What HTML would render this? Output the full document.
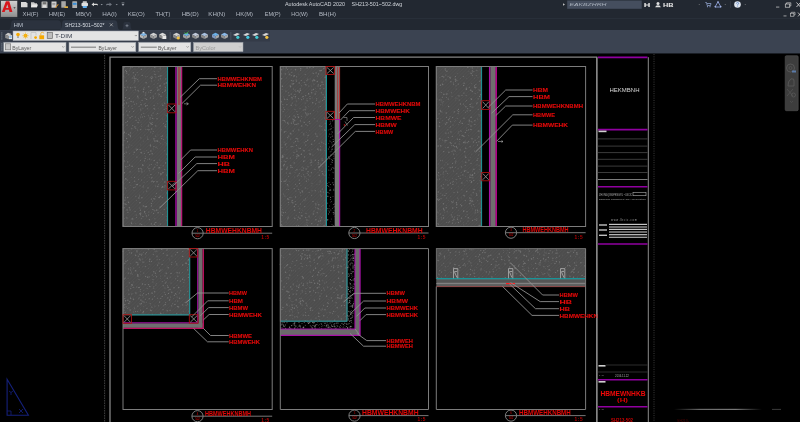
<!DOCTYPE html>
<html><head><meta charset="utf-8"><style>
*{box-sizing:border-box;margin:0;padding:0}
html,body{width:800px;height:422px;overflow:hidden;background:#000;font-family:"Liberation Sans",sans-serif}
#cv{position:absolute;left:0;top:0;filter:blur(0.45px)}
</style></head><body>
<svg id="cv" width="800" height="422" viewBox="0 0 800 422" style="font-family:'Liberation Sans',sans-serif">
<defs>
<pattern id="conc" width="3.5" height="3.5" patternUnits="userSpaceOnUse">
<rect width="3.5" height="3.5" fill="#4d4d4d"/>
<path d="M0 3.5L3.5 0M-1 1L1 -1M2.5 4.5L4.5 2.5" stroke="#575757" stroke-width="0.6"/>
</pattern>
</defs>
<line x1="104.6" y1="54" x2="104.6" y2="422" stroke="#4e4e4e" stroke-width="0.8"/>
<line x1="104.6" y1="54" x2="104.6" y2="422" stroke="#000" stroke-width="1" stroke-dasharray="1 1.5"/>
<polyline points="110,422 110,57.2 596.7,57.2 596.7,422" fill="none" stroke="#858585" stroke-width="1.3"/>
<rect x="123" y="66.5" width="44.5" height="160" fill="url(#conc)" stroke="#7a7a7a" stroke-width="0.8" />
<circle cx="137.4" cy="90.6" r="0.4" fill="#727272"/>
<circle cx="126.2" cy="152.2" r="0.6" fill="#727272"/>
<circle cx="148.9" cy="212.1" r="0.5" fill="#727272"/>
<circle cx="124.7" cy="135.9" r="0.4" fill="#727272"/>
<circle cx="133.7" cy="154.7" r="0.4" fill="#727272"/>
<circle cx="159.8" cy="86.3" r="0.5" fill="#727272"/>
<circle cx="151.1" cy="159.8" r="0.4" fill="#727272"/>
<circle cx="148.7" cy="130.0" r="0.5" fill="#727272"/>
<circle cx="125.1" cy="203.9" r="0.6" fill="#727272"/>
<circle cx="141.7" cy="153.0" r="0.6" fill="#727272"/>
<circle cx="147.9" cy="175.6" r="0.4" fill="#727272"/>
<circle cx="148.9" cy="168.7" r="0.6" fill="#727272"/>
<circle cx="127.3" cy="180.4" r="0.4" fill="#727272"/>
<circle cx="150.5" cy="145.9" r="0.7" fill="#727272"/>
<circle cx="157.6" cy="141.0" r="0.7" fill="#727272"/>
<circle cx="139.1" cy="106.2" r="0.5" fill="#727272"/>
<circle cx="154.1" cy="105.6" r="0.6" fill="#727272"/>
<circle cx="146.4" cy="206.5" r="0.7" fill="#727272"/>
<circle cx="135.8" cy="223.3" r="0.4" fill="#727272"/>
<circle cx="145.8" cy="92.9" r="0.6" fill="#727272"/>
<circle cx="129.8" cy="144.7" r="0.4" fill="#727272"/>
<circle cx="165.8" cy="78.9" r="0.6" fill="#727272"/>
<circle cx="138.1" cy="122.5" r="0.7" fill="#727272"/>
<circle cx="148.8" cy="139.5" r="0.4" fill="#727272"/>
<circle cx="165.0" cy="142.4" r="0.4" fill="#727272"/>
<circle cx="125.7" cy="178.7" r="0.7" fill="#727272"/>
<circle cx="135.7" cy="128.2" r="0.6" fill="#727272"/>
<circle cx="124.0" cy="140.4" r="0.5" fill="#727272"/>
<circle cx="150.2" cy="145.5" r="0.5" fill="#727272"/>
<circle cx="157.2" cy="87.2" r="0.5" fill="#727272"/>
<circle cx="140.7" cy="213.2" r="0.7" fill="#727272"/>
<circle cx="126.6" cy="138.4" r="0.6" fill="#727272"/>
<circle cx="162.3" cy="197.6" r="0.6" fill="#727272"/>
<circle cx="154.4" cy="224.3" r="0.7" fill="#727272"/>
<circle cx="165.6" cy="90.6" r="0.5" fill="#727272"/>
<circle cx="129.7" cy="171.9" r="0.4" fill="#727272"/>
<circle cx="144.6" cy="160.8" r="0.6" fill="#727272"/>
<circle cx="135.5" cy="89.8" r="0.6" fill="#727272"/>
<circle cx="150.1" cy="117.5" r="0.5" fill="#727272"/>
<circle cx="153.7" cy="149.0" r="0.4" fill="#727272"/>
<circle cx="143.3" cy="205.9" r="0.7" fill="#727272"/>
<circle cx="140.7" cy="129.6" r="0.7" fill="#727272"/>
<circle cx="151.2" cy="76.5" r="0.4" fill="#727272"/>
<circle cx="166.8" cy="137.0" r="0.4" fill="#727272"/>
<circle cx="138.1" cy="74.9" r="0.4" fill="#727272"/>
<circle cx="148.2" cy="152.4" r="0.6" fill="#727272"/>
<circle cx="150.3" cy="77.8" r="0.5" fill="#727272"/>
<circle cx="150.3" cy="90.3" r="0.6" fill="#727272"/>
<circle cx="165.5" cy="162.9" r="0.7" fill="#727272"/>
<circle cx="128.5" cy="202.3" r="0.7" fill="#727272"/>
<circle cx="144.4" cy="116.4" r="0.5" fill="#727272"/>
<circle cx="127.5" cy="121.3" r="0.6" fill="#727272"/>
<circle cx="144.3" cy="177.2" r="0.4" fill="#727272"/>
<circle cx="132.1" cy="218.8" r="0.6" fill="#727272"/>
<circle cx="129.5" cy="153.4" r="0.4" fill="#727272"/>
<circle cx="156.7" cy="114.2" r="0.4" fill="#727272"/>
<circle cx="154.0" cy="108.3" r="0.6" fill="#727272"/>
<circle cx="163.4" cy="123.4" r="0.5" fill="#727272"/>
<circle cx="146.7" cy="191.1" r="0.6" fill="#727272"/>
<circle cx="151.3" cy="164.6" r="0.5" fill="#727272"/>
<circle cx="158.9" cy="197.4" r="0.5" fill="#727272"/>
<circle cx="131.9" cy="145.3" r="0.4" fill="#727272"/>
<circle cx="167.0" cy="192.9" r="0.7" fill="#727272"/>
<circle cx="134.5" cy="177.3" r="0.6" fill="#727272"/>
<circle cx="142.9" cy="216.4" r="0.6" fill="#727272"/>
<circle cx="165.5" cy="124.8" r="0.5" fill="#727272"/>
<circle cx="127.5" cy="141.7" r="0.6" fill="#727272"/>
<circle cx="132.1" cy="166.4" r="0.4" fill="#727272"/>
<circle cx="144.3" cy="171.0" r="0.4" fill="#727272"/>
<circle cx="160.1" cy="85.7" r="0.7" fill="#727272"/>
<circle cx="157.8" cy="186.5" r="0.7" fill="#727272"/>
<circle cx="162.6" cy="135.9" r="0.6" fill="#727272"/>
<circle cx="126.9" cy="217.9" r="0.7" fill="#727272"/>
<circle cx="143.6" cy="185.4" r="0.4" fill="#727272"/>
<circle cx="155.3" cy="93.7" r="0.5" fill="#727272"/>
<circle cx="124.2" cy="161.0" r="0.7" fill="#727272"/>
<circle cx="158.9" cy="89.9" r="0.7" fill="#727272"/>
<circle cx="152.2" cy="122.6" r="0.5" fill="#727272"/>
<circle cx="124.0" cy="194.4" r="0.4" fill="#727272"/>
<circle cx="146.4" cy="215.9" r="0.7" fill="#727272"/>
<circle cx="166.9" cy="97.7" r="0.5" fill="#727272"/>
<circle cx="124.2" cy="100.5" r="0.5" fill="#727272"/>
<circle cx="157.0" cy="118.7" r="0.7" fill="#727272"/>
<circle cx="160.1" cy="76.2" r="0.6" fill="#727272"/>
<circle cx="162.9" cy="172.5" r="0.7" fill="#727272"/>
<circle cx="159.8" cy="207.0" r="0.5" fill="#727272"/>
<circle cx="146.7" cy="150.3" r="0.4" fill="#727272"/>
<circle cx="161.8" cy="190.7" r="0.4" fill="#727272"/>
<circle cx="157.5" cy="90.5" r="0.5" fill="#727272"/>
<circle cx="144.1" cy="182.5" r="0.4" fill="#727272"/>
<circle cx="137.5" cy="149.4" r="0.7" fill="#727272"/>
<circle cx="157.9" cy="83.5" r="0.4" fill="#727272"/>
<circle cx="134.1" cy="110.8" r="0.4" fill="#727272"/>
<circle cx="145.6" cy="156.4" r="0.4" fill="#727272"/>
<circle cx="142.7" cy="164.5" r="0.5" fill="#727272"/>
<circle cx="153.8" cy="138.9" r="0.7" fill="#727272"/>
<circle cx="145.6" cy="106.1" r="0.6" fill="#727272"/>
<circle cx="164.1" cy="209.3" r="0.5" fill="#727272"/>
<circle cx="160.4" cy="88.4" r="0.4" fill="#727272"/>
<circle cx="140.5" cy="117.1" r="0.5" fill="#727272"/>
<circle cx="142.1" cy="100.5" r="0.6" fill="#727272"/>
<circle cx="157.9" cy="210.0" r="0.5" fill="#727272"/>
<circle cx="164.8" cy="169.5" r="0.6" fill="#727272"/>
<circle cx="129.4" cy="207.8" r="0.7" fill="#727272"/>
<circle cx="132.8" cy="218.9" r="0.7" fill="#727272"/>
<circle cx="162.4" cy="92.5" r="0.5" fill="#727272"/>
<circle cx="130.2" cy="135.5" r="0.7" fill="#727272"/>
<circle cx="138.1" cy="97.8" r="0.6" fill="#727272"/>
<circle cx="127.1" cy="125.1" r="0.6" fill="#727272"/>
<circle cx="147.7" cy="137.0" r="0.4" fill="#727272"/>
<circle cx="140.1" cy="149.3" r="0.6" fill="#727272"/>
<circle cx="145.8" cy="76.8" r="0.5" fill="#727272"/>
<circle cx="166.2" cy="83.3" r="0.6" fill="#727272"/>
<circle cx="135.1" cy="211.4" r="0.5" fill="#727272"/>
<circle cx="135.0" cy="87.2" r="0.7" fill="#727272"/>
<circle cx="160.8" cy="174.7" r="0.6" fill="#727272"/>
<circle cx="141.1" cy="152.4" r="0.7" fill="#727272"/>
<circle cx="154.2" cy="80.8" r="0.4" fill="#727272"/>
<circle cx="158.6" cy="95.8" r="0.4" fill="#727272"/>
<circle cx="135.0" cy="69.2" r="0.4" fill="#727272"/>
<circle cx="158.7" cy="79.9" r="0.5" fill="#727272"/>
<circle cx="126.0" cy="204.5" r="0.7" fill="#727272"/>
<circle cx="123.5" cy="225.6" r="0.7" fill="#727272"/>
<circle cx="164.2" cy="109.4" r="0.5" fill="#727272"/>
<circle cx="124.9" cy="180.0" r="0.4" fill="#727272"/>
<circle cx="166.1" cy="108.4" r="0.5" fill="#727272"/>
<circle cx="132.0" cy="116.4" r="0.6" fill="#727272"/>
<circle cx="146.6" cy="99.4" r="0.7" fill="#727272"/>
<circle cx="145.3" cy="95.0" r="0.6" fill="#727272"/>
<circle cx="158.8" cy="225.6" r="0.4" fill="#727272"/>
<circle cx="123.7" cy="183.8" r="0.5" fill="#727272"/>
<circle cx="145.9" cy="105.8" r="0.7" fill="#727272"/>
<circle cx="127.7" cy="197.5" r="0.7" fill="#727272"/>
<circle cx="152.2" cy="153.8" r="0.7" fill="#727272"/>
<circle cx="166.2" cy="115.7" r="0.5" fill="#727272"/>
<circle cx="166.7" cy="121.3" r="0.5" fill="#727272"/>
<circle cx="141.0" cy="122.1" r="0.4" fill="#727272"/>
<circle cx="160.2" cy="68.8" r="0.6" fill="#727272"/>
<circle cx="142.2" cy="75.4" r="0.7" fill="#727272"/>
<circle cx="161.7" cy="173.8" r="0.6" fill="#727272"/>
<circle cx="149.6" cy="177.3" r="0.4" fill="#727272"/>
<circle cx="143.4" cy="91.7" r="0.7" fill="#727272"/>
<circle cx="123.2" cy="124.8" r="0.6" fill="#727272"/>
<circle cx="166.3" cy="154.0" r="0.5" fill="#727272"/>
<circle cx="124.5" cy="207.7" r="0.5" fill="#727272"/>
<circle cx="138.9" cy="66.7" r="0.7" fill="#727272"/>
<circle cx="126.7" cy="111.1" r="0.5" fill="#727272"/>
<circle cx="134.0" cy="190.7" r="0.4" fill="#727272"/>
<circle cx="134.8" cy="80.9" r="0.7" fill="#727272"/>
<circle cx="149.1" cy="129.5" r="0.6" fill="#727272"/>
<circle cx="136.5" cy="103.7" r="0.5" fill="#727272"/>
<circle cx="152.3" cy="181.1" r="0.7" fill="#727272"/>
<circle cx="157.0" cy="181.8" r="0.7" fill="#727272"/>
<circle cx="129.7" cy="182.4" r="0.5" fill="#727272"/>
<circle cx="124.9" cy="200.1" r="0.7" fill="#727272"/>
<circle cx="155.7" cy="196.5" r="0.5" fill="#727272"/>
<circle cx="163.5" cy="187.0" r="0.4" fill="#727272"/>
<circle cx="159.8" cy="159.9" r="0.5" fill="#727272"/>
<circle cx="126.8" cy="73.2" r="0.6" fill="#727272"/>
<circle cx="165.7" cy="126.8" r="0.7" fill="#727272"/>
<circle cx="147.9" cy="166.9" r="0.5" fill="#727272"/>
<circle cx="144.8" cy="67.0" r="0.4" fill="#727272"/>
<circle cx="156.3" cy="147.0" r="0.4" fill="#727272"/>
<circle cx="152.3" cy="77.1" r="0.7" fill="#727272"/>
<circle cx="134.2" cy="78.4" r="0.6" fill="#727272"/>
<circle cx="133.4" cy="187.5" r="0.5" fill="#727272"/>
<circle cx="155.9" cy="222.6" r="0.7" fill="#727272"/>
<circle cx="160.6" cy="78.8" r="0.6" fill="#727272"/>
<circle cx="157.1" cy="165.2" r="0.5" fill="#727272"/>
<circle cx="126.4" cy="90.1" r="0.6" fill="#727272"/>
<circle cx="152.0" cy="177.4" r="0.5" fill="#727272"/>
<circle cx="123.6" cy="76.2" r="0.6" fill="#727272"/>
<circle cx="166.3" cy="82.4" r="0.5" fill="#727272"/>
<circle cx="153.1" cy="113.0" r="0.6" fill="#727272"/>
<circle cx="143.7" cy="141.1" r="0.4" fill="#727272"/>
<circle cx="167.2" cy="154.4" r="0.6" fill="#727272"/>
<circle cx="166.5" cy="216.3" r="0.4" fill="#727272"/>
<circle cx="135.9" cy="78.7" r="0.7" fill="#727272"/>
<circle cx="167.2" cy="128.4" r="0.5" fill="#727272"/>
<circle cx="126.3" cy="80.9" r="0.6" fill="#727272"/>
<circle cx="165.4" cy="87.7" r="0.6" fill="#727272"/>
<circle cx="162.5" cy="179.0" r="0.5" fill="#727272"/>
<circle cx="145.2" cy="206.7" r="0.7" fill="#727272"/>
<circle cx="124.1" cy="67.1" r="0.7" fill="#727272"/>
<circle cx="153.3" cy="131.4" r="0.5" fill="#727272"/>
<circle cx="141.5" cy="126.7" r="0.4" fill="#727272"/>
<circle cx="160.4" cy="66.8" r="0.6" fill="#727272"/>
<circle cx="160.3" cy="85.7" r="0.5" fill="#727272"/>
<circle cx="154.7" cy="210.8" r="0.6" fill="#727272"/>
<circle cx="134.3" cy="76.9" r="0.7" fill="#727272"/>
<circle cx="167.4" cy="160.8" r="0.6" fill="#727272"/>
<circle cx="164.2" cy="187.4" r="0.4" fill="#727272"/>
<circle cx="135.5" cy="74.8" r="0.6" fill="#727272"/>
<circle cx="151.3" cy="90.3" r="0.6" fill="#727272"/>
<circle cx="142.4" cy="117.0" r="0.6" fill="#727272"/>
<circle cx="157.9" cy="134.9" r="0.4" fill="#727272"/>
<circle cx="159.1" cy="167.4" r="0.5" fill="#727272"/>
<circle cx="155.0" cy="74.4" r="0.7" fill="#727272"/>
<circle cx="143.1" cy="186.9" r="0.6" fill="#727272"/>
<circle cx="144.6" cy="212.4" r="0.5" fill="#727272"/>
<circle cx="130.6" cy="132.9" r="0.6" fill="#727272"/>
<circle cx="136.3" cy="184.7" r="0.6" fill="#727272"/>
<circle cx="141.1" cy="104.7" r="0.7" fill="#727272"/>
<circle cx="147.8" cy="129.6" r="0.5" fill="#727272"/>
<circle cx="151.6" cy="78.5" r="0.7" fill="#727272"/>
<circle cx="147.5" cy="139.0" r="0.6" fill="#727272"/>
<circle cx="167.3" cy="138.5" r="0.5" fill="#727272"/>
<circle cx="147.4" cy="105.6" r="0.5" fill="#727272"/>
<circle cx="138.2" cy="81.1" r="0.5" fill="#727272"/>
<circle cx="139.4" cy="196.0" r="0.5" fill="#727272"/>
<circle cx="162.5" cy="186.4" r="0.7" fill="#727272"/>
<circle cx="140.0" cy="185.8" r="0.5" fill="#727272"/>
<circle cx="139.8" cy="120.6" r="0.4" fill="#727272"/>
<circle cx="145.2" cy="158.4" r="0.6" fill="#727272"/>
<circle cx="128.6" cy="147.0" r="0.5" fill="#727272"/>
<circle cx="127.1" cy="210.0" r="0.7" fill="#727272"/>
<circle cx="140.8" cy="137.8" r="0.6" fill="#727272"/>
<circle cx="160.8" cy="206.2" r="0.4" fill="#727272"/>
<circle cx="128.7" cy="134.5" r="0.7" fill="#727272"/>
<circle cx="166.1" cy="144.9" r="0.4" fill="#727272"/>
<circle cx="140.4" cy="214.8" r="0.7" fill="#727272"/>
<circle cx="166.3" cy="106.3" r="0.4" fill="#727272"/>
<circle cx="133.0" cy="90.8" r="0.4" fill="#727272"/>
<circle cx="164.9" cy="182.0" r="0.7" fill="#727272"/>
<circle cx="126.8" cy="190.8" r="0.4" fill="#727272"/>
<circle cx="157.8" cy="103.7" r="0.4" fill="#727272"/>
<circle cx="151.7" cy="115.1" r="0.5" fill="#727272"/>
<circle cx="150.9" cy="151.0" r="0.7" fill="#727272"/>
<circle cx="154.1" cy="84.4" r="0.4" fill="#727272"/>
<circle cx="136.4" cy="217.5" r="0.5" fill="#727272"/>
<circle cx="140.3" cy="102.3" r="0.4" fill="#727272"/>
<circle cx="123.5" cy="114.7" r="0.7" fill="#727272"/>
<circle cx="135.4" cy="117.1" r="0.5" fill="#727272"/>
<circle cx="144.2" cy="104.1" r="0.5" fill="#727272"/>
<circle cx="124.3" cy="132.4" r="0.6" fill="#727272"/>
<circle cx="125.5" cy="97.6" r="0.7" fill="#727272"/>
<circle cx="126.6" cy="103.0" r="0.7" fill="#727272"/>
<circle cx="164.2" cy="102.8" r="0.4" fill="#727272"/>
<circle cx="154.0" cy="181.4" r="0.6" fill="#727272"/>
<circle cx="153.4" cy="98.2" r="0.6" fill="#727272"/>
<circle cx="155.9" cy="147.3" r="0.5" fill="#727272"/>
<circle cx="145.1" cy="98.6" r="0.5" fill="#727272"/>
<circle cx="133.3" cy="101.9" r="0.6" fill="#727272"/>
<circle cx="127.9" cy="166.3" r="0.5" fill="#727272"/>
<circle cx="162.9" cy="144.1" r="0.4" fill="#727272"/>
<circle cx="165.2" cy="89.9" r="0.7" fill="#727272"/>
<circle cx="125.4" cy="70.3" r="0.5" fill="#727272"/>
<circle cx="141.5" cy="180.1" r="0.5" fill="#727272"/>
<circle cx="140.5" cy="210.2" r="0.6" fill="#727272"/>
<circle cx="155.6" cy="226.1" r="0.5" fill="#727272"/>
<circle cx="137.7" cy="96.2" r="0.7" fill="#727272"/>
<circle cx="124.4" cy="172.8" r="0.7" fill="#727272"/>
<circle cx="160.3" cy="224.1" r="0.7" fill="#727272"/>
<circle cx="130.5" cy="67.0" r="0.6" fill="#727272"/>
<circle cx="126.6" cy="133.7" r="0.4" fill="#727272"/>
<circle cx="148.0" cy="187.9" r="0.7" fill="#727272"/>
<circle cx="138.9" cy="198.0" r="0.7" fill="#727272"/>
<circle cx="126.9" cy="179.3" r="0.5" fill="#727272"/>
<circle cx="139.6" cy="213.6" r="0.5" fill="#727272"/>
<circle cx="137.4" cy="184.5" r="0.7" fill="#727272"/>
<circle cx="124.3" cy="132.2" r="0.7" fill="#727272"/>
<circle cx="124.8" cy="72.1" r="0.4" fill="#727272"/>
<circle cx="158.7" cy="76.4" r="0.5" fill="#727272"/>
<circle cx="156.3" cy="210.3" r="0.6" fill="#727272"/>
<circle cx="139.2" cy="120.1" r="0.4" fill="#727272"/>
<circle cx="134.7" cy="181.2" r="0.6" fill="#727272"/>
<circle cx="164.1" cy="114.1" r="0.4" fill="#727272"/>
<circle cx="124.1" cy="103.9" r="0.7" fill="#727272"/>
<circle cx="154.8" cy="141.0" r="0.7" fill="#727272"/>
<circle cx="158.1" cy="212.7" r="0.7" fill="#727272"/>
<circle cx="128.9" cy="145.9" r="0.4" fill="#727272"/>
<circle cx="158.7" cy="184.7" r="0.5" fill="#727272"/>
<circle cx="150.0" cy="118.9" r="0.6" fill="#727272"/>
<circle cx="143.5" cy="191.9" r="0.4" fill="#727272"/>
<circle cx="145.8" cy="129.2" r="0.5" fill="#727272"/>
<circle cx="134.0" cy="76.9" r="0.4" fill="#727272"/>
<circle cx="144.4" cy="153.6" r="0.5" fill="#727272"/>
<circle cx="166.6" cy="207.9" r="0.4" fill="#727272"/>
<circle cx="134.8" cy="80.0" r="0.4" fill="#727272"/>
<circle cx="141.7" cy="224.6" r="0.7" fill="#727272"/>
<circle cx="130.7" cy="87.8" r="0.7" fill="#727272"/>
<circle cx="150.6" cy="174.4" r="0.4" fill="#727272"/>
<circle cx="157.7" cy="113.5" r="0.6" fill="#727272"/>
<circle cx="148.2" cy="126.2" r="0.6" fill="#727272"/>
<circle cx="131.9" cy="106.1" r="0.5" fill="#727272"/>
<circle cx="133.5" cy="111.5" r="0.5" fill="#727272"/>
<circle cx="137.5" cy="129.9" r="0.5" fill="#727272"/>
<circle cx="145.6" cy="103.5" r="0.4" fill="#727272"/>
<circle cx="152.1" cy="225.1" r="0.4" fill="#727272"/>
<circle cx="123.2" cy="207.8" r="0.5" fill="#727272"/>
<circle cx="160.4" cy="212.8" r="0.4" fill="#727272"/>
<circle cx="162.0" cy="103.8" r="0.4" fill="#727272"/>
<circle cx="131.4" cy="222.2" r="0.5" fill="#727272"/>
<circle cx="164.4" cy="126.1" r="0.5" fill="#727272"/>
<circle cx="143.0" cy="108.1" r="0.4" fill="#727272"/>
<circle cx="127.7" cy="161.9" r="0.6" fill="#727272"/>
<circle cx="132.7" cy="125.5" r="0.5" fill="#727272"/>
<circle cx="125.0" cy="226.5" r="0.4" fill="#727272"/>
<circle cx="149.7" cy="170.8" r="0.5" fill="#727272"/>
<circle cx="159.3" cy="197.5" r="0.7" fill="#727272"/>
<circle cx="153.2" cy="96.1" r="0.6" fill="#727272"/>
<circle cx="126.5" cy="71.5" r="0.7" fill="#727272"/>
<circle cx="147.4" cy="76.6" r="0.4" fill="#727272"/>
<circle cx="158.4" cy="172.7" r="0.5" fill="#727272"/>
<circle cx="151.4" cy="81.1" r="0.5" fill="#727272"/>
<circle cx="140.7" cy="109.9" r="0.6" fill="#727272"/>
<circle cx="152.7" cy="133.4" r="0.4" fill="#727272"/>
<circle cx="136.9" cy="157.1" r="0.6" fill="#727272"/>
<circle cx="141.4" cy="69.4" r="0.6" fill="#727272"/>
<circle cx="151.7" cy="129.0" r="0.7" fill="#727272"/>
<circle cx="132.1" cy="67.4" r="0.5" fill="#727272"/>
<circle cx="141.9" cy="197.8" r="0.7" fill="#727272"/>
<circle cx="148.7" cy="124.9" r="0.5" fill="#727272"/>
<circle cx="128.8" cy="74.8" r="0.5" fill="#727272"/>
<circle cx="151.5" cy="212.1" r="0.4" fill="#727272"/>
<circle cx="148.5" cy="214.9" r="0.5" fill="#727272"/>
<circle cx="129.5" cy="111.8" r="0.5" fill="#727272"/>
<circle cx="164.2" cy="83.9" r="0.7" fill="#727272"/>
<circle cx="156.5" cy="193.2" r="0.5" fill="#727272"/>
<circle cx="136.4" cy="200.5" r="0.4" fill="#727272"/>
<circle cx="166.4" cy="143.7" r="0.4" fill="#727272"/>
<circle cx="150.0" cy="168.3" r="0.4" fill="#727272"/>
<circle cx="163.2" cy="165.8" r="0.5" fill="#727272"/>
<circle cx="151.5" cy="203.6" r="0.7" fill="#727272"/>
<circle cx="150.4" cy="97.9" r="0.7" fill="#727272"/>
<circle cx="131.1" cy="101.4" r="0.7" fill="#727272"/>
<circle cx="164.8" cy="91.5" r="0.6" fill="#727272"/>
<circle cx="128.5" cy="106.0" r="0.5" fill="#727272"/>
<circle cx="124.8" cy="156.5" r="0.4" fill="#727272"/>
<circle cx="152.7" cy="118.4" r="0.7" fill="#727272"/>
<circle cx="149.7" cy="154.5" r="0.6" fill="#727272"/>
<circle cx="151.9" cy="115.8" r="0.5" fill="#727272"/>
<circle cx="141.9" cy="171.9" r="0.7" fill="#727272"/>
<circle cx="145.4" cy="95.1" r="0.4" fill="#727272"/>
<circle cx="150.5" cy="144.8" r="0.5" fill="#727272"/>
<circle cx="142.9" cy="165.5" r="0.7" fill="#727272"/>
<circle cx="160.2" cy="196.2" r="0.7" fill="#727272"/>
<circle cx="127.8" cy="87.1" r="0.7" fill="#727272"/>
<circle cx="139.3" cy="194.9" r="0.4" fill="#727272"/>
<circle cx="124.8" cy="87.3" r="0.6" fill="#727272"/>
<circle cx="157.6" cy="148.3" r="0.4" fill="#727272"/>
<circle cx="156.5" cy="209.7" r="0.5" fill="#727272"/>
<circle cx="124.2" cy="77.1" r="0.4" fill="#727272"/>
<circle cx="131.6" cy="223.6" r="0.7" fill="#727272"/>
<circle cx="135.8" cy="196.3" r="0.5" fill="#727272"/>
<circle cx="153.5" cy="181.9" r="0.5" fill="#727272"/>
<circle cx="125.9" cy="122.6" r="0.6" fill="#727272"/>
<circle cx="130.1" cy="209.9" r="0.6" fill="#727272"/>
<circle cx="163.3" cy="139.5" r="0.6" fill="#727272"/>
<circle cx="145.3" cy="213.7" r="0.5" fill="#727272"/>
<circle cx="149.3" cy="165.0" r="0.5" fill="#727272"/>
<circle cx="137.2" cy="72.4" r="0.5" fill="#727272"/>
<circle cx="141.0" cy="168.4" r="0.6" fill="#727272"/>
<circle cx="153.2" cy="209.8" r="0.5" fill="#727272"/>
<circle cx="158.2" cy="108.8" r="0.4" fill="#727272"/>
<circle cx="151.3" cy="124.1" r="0.7" fill="#727272"/>
<circle cx="147.7" cy="159.3" r="0.4" fill="#727272"/>
<circle cx="134.2" cy="152.2" r="0.7" fill="#727272"/>
<circle cx="155.8" cy="125.9" r="0.7" fill="#727272"/>
<circle cx="167.1" cy="158.9" r="0.6" fill="#727272"/>
<circle cx="137.7" cy="79.5" r="0.5" fill="#727272"/>
<circle cx="130.9" cy="185.5" r="0.4" fill="#727272"/>
<circle cx="136.2" cy="149.1" r="0.6" fill="#727272"/>
<circle cx="151.4" cy="223.9" r="0.6" fill="#727272"/>
<circle cx="155.6" cy="186.0" r="0.5" fill="#727272"/>
<circle cx="129.6" cy="165.1" r="0.7" fill="#727272"/>
<circle cx="141.6" cy="124.8" r="0.4" fill="#727272"/>
<circle cx="128.9" cy="102.9" r="0.4" fill="#727272"/>
<circle cx="124.0" cy="66.9" r="0.6" fill="#727272"/>
<circle cx="136.5" cy="150.2" r="0.5" fill="#727272"/>
<circle cx="141.4" cy="114.7" r="0.5" fill="#727272"/>
<circle cx="132.1" cy="166.3" r="0.7" fill="#727272"/>
<circle cx="130.1" cy="68.8" r="0.5" fill="#727272"/>
<circle cx="154.5" cy="138.6" r="0.4" fill="#727272"/>
<circle cx="151.4" cy="205.9" r="0.6" fill="#727272"/>
<circle cx="140.9" cy="108.8" r="0.4" fill="#727272"/>
<circle cx="125.5" cy="197.8" r="0.6" fill="#727272"/>
<circle cx="149.5" cy="159.1" r="0.7" fill="#727272"/>
<circle cx="134.1" cy="211.1" r="0.4" fill="#727272"/>
<circle cx="125.7" cy="70.5" r="0.5" fill="#727272"/>
<circle cx="133.6" cy="75.8" r="0.4" fill="#727272"/>
<circle cx="123.5" cy="154.6" r="0.5" fill="#727272"/>
<circle cx="129.3" cy="98.4" r="0.7" fill="#727272"/>
<circle cx="159.2" cy="94.4" r="0.6" fill="#727272"/>
<circle cx="125.8" cy="166.7" r="0.7" fill="#727272"/>
<circle cx="154.8" cy="67.5" r="0.7" fill="#727272"/>
<circle cx="156.2" cy="140.9" r="0.7" fill="#727272"/>
<circle cx="130.8" cy="226.0" r="0.6" fill="#727272"/>
<circle cx="133.3" cy="72.7" r="0.6" fill="#727272"/>
<circle cx="162.7" cy="214.5" r="0.6" fill="#727272"/>
<circle cx="154.7" cy="109.1" r="0.7" fill="#727272"/>
<circle cx="153.5" cy="213.3" r="0.6" fill="#727272"/>
<circle cx="136.2" cy="215.1" r="0.5" fill="#727272"/>
<circle cx="126.8" cy="147.7" r="0.5" fill="#727272"/>
<circle cx="134.6" cy="104.3" r="0.5" fill="#727272"/>
<circle cx="165.0" cy="185.9" r="0.6" fill="#727272"/>
<circle cx="131.5" cy="128.7" r="0.5" fill="#727272"/>
<circle cx="139.9" cy="202.8" r="0.7" fill="#727272"/>
<circle cx="144.0" cy="151.4" r="0.4" fill="#727272"/>
<circle cx="161.2" cy="136.5" r="0.5" fill="#727272"/>
<circle cx="148.4" cy="115.7" r="0.5" fill="#727272"/>
<circle cx="140.4" cy="160.2" r="0.5" fill="#727272"/>
<circle cx="129.4" cy="70.8" r="0.4" fill="#727272"/>
<circle cx="150.7" cy="92.4" r="0.5" fill="#727272"/>
<circle cx="154.2" cy="71.4" r="0.5" fill="#727272"/>
<circle cx="153.8" cy="167.9" r="0.4" fill="#727272"/>
<circle cx="155.8" cy="77.0" r="0.6" fill="#727272"/>
<circle cx="131.9" cy="219.2" r="0.4" fill="#727272"/>
<circle cx="162.1" cy="187.4" r="0.7" fill="#727272"/>
<circle cx="127.8" cy="99.4" r="0.4" fill="#727272"/>
<circle cx="124.5" cy="218.4" r="0.4" fill="#727272"/>
<circle cx="159.7" cy="167.5" r="0.6" fill="#727272"/>
<circle cx="144.2" cy="87.7" r="0.5" fill="#727272"/>
<circle cx="136.1" cy="120.3" r="0.6" fill="#727272"/>
<circle cx="123.9" cy="107.6" r="0.6" fill="#727272"/>
<circle cx="125.2" cy="188.1" r="0.6" fill="#727272"/>
<circle cx="157.2" cy="162.8" r="0.7" fill="#727272"/>
<circle cx="160.9" cy="165.4" r="0.4" fill="#727272"/>
<circle cx="158.1" cy="71.5" r="0.4" fill="#727272"/>
<circle cx="138.4" cy="179.2" r="0.5" fill="#727272"/>
<circle cx="154.8" cy="199.0" r="0.6" fill="#727272"/>
<circle cx="130.6" cy="66.7" r="0.5" fill="#727272"/>
<circle cx="135.8" cy="186.6" r="0.4" fill="#727272"/>
<circle cx="123.2" cy="145.0" r="0.7" fill="#727272"/>
<circle cx="153.9" cy="198.6" r="0.7" fill="#727272"/>
<circle cx="149.4" cy="219.7" r="0.6" fill="#727272"/>
<circle cx="148.7" cy="91.9" r="0.5" fill="#727272"/>
<circle cx="164.8" cy="103.5" r="0.5" fill="#727272"/>
<circle cx="127.9" cy="168.3" r="0.4" fill="#727272"/>
<circle cx="144.8" cy="225.1" r="0.4" fill="#727272"/>
<circle cx="150.9" cy="123.4" r="0.7" fill="#727272"/>
<circle cx="164.3" cy="209.2" r="0.4" fill="#727272"/>
<circle cx="141.8" cy="169.8" r="0.6" fill="#727272"/>
<circle cx="132.2" cy="108.6" r="0.5" fill="#727272"/>
<circle cx="139.9" cy="207.9" r="0.5" fill="#727272"/>
<circle cx="165.0" cy="86.8" r="0.4" fill="#727272"/>
<circle cx="138.5" cy="118.8" r="0.5" fill="#727272"/>
<circle cx="161.6" cy="138.5" r="0.6" fill="#727272"/>
<circle cx="130.5" cy="136.7" r="0.6" fill="#727272"/>
<circle cx="148.8" cy="86.7" r="0.7" fill="#727272"/>
<circle cx="151.6" cy="178.0" r="0.5" fill="#727272"/>
<circle cx="134.9" cy="187.3" r="0.5" fill="#727272"/>
<circle cx="155.2" cy="222.5" r="0.6" fill="#727272"/>
<circle cx="149.8" cy="122.3" r="0.5" fill="#727272"/>
<circle cx="137.6" cy="96.8" r="0.4" fill="#727272"/>
<circle cx="130.3" cy="171.8" r="0.5" fill="#727272"/>
<circle cx="140.1" cy="223.9" r="0.6" fill="#727272"/>
<circle cx="155.6" cy="136.1" r="0.5" fill="#727272"/>
<circle cx="127.9" cy="212.3" r="0.6" fill="#727272"/>
<circle cx="132.2" cy="128.6" r="0.4" fill="#727272"/>
<circle cx="123.6" cy="203.2" r="0.7" fill="#727272"/>
<circle cx="153.9" cy="146.6" r="0.6" fill="#727272"/>
<circle cx="143.6" cy="89.2" r="0.7" fill="#727272"/>
<circle cx="123.2" cy="105.3" r="0.7" fill="#727272"/>
<circle cx="154.2" cy="160.5" r="0.7" fill="#727272"/>
<circle cx="160.6" cy="173.4" r="0.5" fill="#727272"/>
<circle cx="153.2" cy="169.1" r="0.7" fill="#727272"/>
<circle cx="142.2" cy="108.1" r="0.4" fill="#727272"/>
<circle cx="162.8" cy="105.3" r="0.7" fill="#727272"/>
<circle cx="154.7" cy="167.2" r="0.6" fill="#727272"/>
<circle cx="160.8" cy="143.7" r="0.4" fill="#727272"/>
<circle cx="150.7" cy="132.0" r="0.5" fill="#727272"/>
<circle cx="162.8" cy="119.0" r="0.4" fill="#727272"/>
<circle cx="140.3" cy="144.9" r="0.4" fill="#727272"/>
<circle cx="124.7" cy="153.4" r="0.5" fill="#727272"/>
<circle cx="154.9" cy="218.7" r="0.5" fill="#727272"/>
<circle cx="146.1" cy="82.7" r="0.7" fill="#727272"/>
<circle cx="147.1" cy="181.3" r="0.4" fill="#727272"/>
<circle cx="151.4" cy="199.1" r="0.6" fill="#727272"/>
<circle cx="141.3" cy="218.2" r="0.5" fill="#727272"/>
<circle cx="167.1" cy="95.9" r="0.4" fill="#727272"/>
<circle cx="155.4" cy="164.7" r="0.4" fill="#727272"/>
<circle cx="134.2" cy="127.6" r="0.4" fill="#727272"/>
<circle cx="123.6" cy="133.5" r="0.7" fill="#727272"/>
<circle cx="151.0" cy="174.5" r="0.6" fill="#727272"/>
<circle cx="127.9" cy="115.1" r="0.7" fill="#727272"/>
<circle cx="164.8" cy="150.8" r="0.5" fill="#727272"/>
<circle cx="167.2" cy="220.2" r="0.7" fill="#727272"/>
<circle cx="132.4" cy="87.2" r="0.4" fill="#727272"/>
<circle cx="159.0" cy="168.0" r="0.7" fill="#727272"/>
<circle cx="151.6" cy="181.8" r="0.5" fill="#727272"/>
<circle cx="138.7" cy="168.7" r="0.7" fill="#727272"/>
<circle cx="143.8" cy="113.6" r="0.5" fill="#727272"/>
<circle cx="157.7" cy="141.6" r="0.5" fill="#727272"/>
<circle cx="134.9" cy="126.7" r="0.6" fill="#727272"/>
<circle cx="166.7" cy="175.1" r="0.7" fill="#727272"/>
<circle cx="123.1" cy="182.0" r="0.6" fill="#727272"/>
<circle cx="138.9" cy="171.2" r="0.6" fill="#727272"/>
<circle cx="144.3" cy="135.1" r="0.4" fill="#727272"/>
<circle cx="152.3" cy="124.5" r="0.6" fill="#727272"/>
<circle cx="161.0" cy="75.6" r="0.6" fill="#727272"/>
<circle cx="157.9" cy="89.0" r="0.6" fill="#727272"/>
<circle cx="151.2" cy="68.9" r="0.4" fill="#727272"/>
<circle cx="132.3" cy="78.0" r="0.6" fill="#727272"/>
<circle cx="134.1" cy="82.7" r="0.5" fill="#727272"/>
<circle cx="161.0" cy="96.2" r="0.7" fill="#727272"/>
<circle cx="138.4" cy="90.9" r="0.7" fill="#727272"/>
<circle cx="158.2" cy="93.4" r="0.4" fill="#727272"/>
<circle cx="152.7" cy="209.5" r="0.6" fill="#727272"/>
<circle cx="131.8" cy="177.3" r="0.4" fill="#727272"/>
<circle cx="156.0" cy="136.7" r="0.4" fill="#727272"/>
<circle cx="147.7" cy="108.8" r="0.5" fill="#727272"/>
<circle cx="159.8" cy="142.2" r="0.4" fill="#727272"/>
<circle cx="144.6" cy="211.4" r="0.7" fill="#727272"/>
<circle cx="134.0" cy="92.8" r="0.4" fill="#727272"/>
<circle cx="130.1" cy="117.8" r="0.7" fill="#727272"/>
<circle cx="152.6" cy="201.0" r="0.6" fill="#727272"/>
<circle cx="141.9" cy="226.5" r="0.4" fill="#727272"/>
<line x1="167.6" y1="66.5" x2="167.6" y2="226.5" stroke="#189498" stroke-width="1"/>
<rect x="177" y="66.5" width="4" height="160" fill="#767676" stroke="none" stroke-width="1" />
<line x1="179" y1="66.5" x2="179" y2="105" stroke="#a04040" stroke-width="1.6"/>
<line x1="176" y1="66.5" x2="176" y2="226.5" stroke="#a810a8" stroke-width="1.4"/>
<line x1="181.6" y1="66.5" x2="181.6" y2="226.5" stroke="#b81878" stroke-width="1.3"/>
<rect x="123" y="66.5" width="149.2" height="160" fill="none" stroke="#7c7c7c" stroke-width="1" />
<rect x="167.5" y="104" width="8.5" height="8.8" fill="none" stroke="#b01010" stroke-width="0.85" />
<line x1="168.5" y1="105" x2="175.0" y2="111.8" stroke="#9a9a9a" stroke-width="0.8"/>
<line x1="175.0" y1="105" x2="168.5" y2="111.8" stroke="#9a9a9a" stroke-width="0.8"/>
<rect x="167.5" y="181.3" width="8.6" height="8.6" fill="none" stroke="#b01010" stroke-width="0.85" />
<line x1="168.5" y1="182.3" x2="175.1" y2="188.9" stroke="#9a9a9a" stroke-width="0.8"/>
<line x1="175.1" y1="182.3" x2="168.5" y2="188.9" stroke="#9a9a9a" stroke-width="0.8"/>
<polyline points="180,97.5 199.3,78.7 217,78.7" fill="none" stroke="#909090" stroke-width="0.9"/>
<text x="217.5" y="80.8" font-size="5.6" fill="#e40a0a" font-weight="bold" stroke="#e40a0a" stroke-width="0.1" textLength="44.5" lengthAdjust="spacingAndGlyphs">HBMWEHKNBM</text>
<polyline points="182,103.5 200.5,85.2 217,85.2" fill="none" stroke="#909090" stroke-width="0.9"/>
<text x="217.5" y="87.3" font-size="5.6" fill="#e40a0a" font-weight="bold" stroke="#e40a0a" stroke-width="0.1" textLength="38.5" lengthAdjust="spacingAndGlyphs">HBMWEHKN</text>
<polyline points="180.7,160 190.6,150 217,150" fill="none" stroke="#909090" stroke-width="0.9"/>
<text x="217.5" y="152.1" font-size="5.6" fill="#e40a0a" font-weight="bold" stroke="#e40a0a" stroke-width="0.1" textLength="35.5" lengthAdjust="spacingAndGlyphs">HBMWEHKN</text>
<polyline points="178.5,173.5 195.1,157 217,157" fill="none" stroke="#909090" stroke-width="0.9"/>
<text x="217.5" y="159.1" font-size="5.6" fill="#e40a0a" font-weight="bold" stroke="#e40a0a" stroke-width="0.1" textLength="17.5" lengthAdjust="spacingAndGlyphs">HBM</text>
<polyline points="172.4,186.5 196.8,163.6 217,163.6" fill="none" stroke="#909090" stroke-width="0.9"/>
<text x="217.5" y="165.7" font-size="5.6" fill="#e40a0a" font-weight="bold" stroke="#e40a0a" stroke-width="0.1" textLength="12.5" lengthAdjust="spacingAndGlyphs">HB</text>
<polyline points="159.6,208 197.8,170.7 217,170.7" fill="none" stroke="#909090" stroke-width="0.9"/>
<text x="217.5" y="172.79999999999998" font-size="5.6" fill="#e40a0a" font-weight="bold" stroke="#e40a0a" stroke-width="0.1" textLength="17.5" lengthAdjust="spacingAndGlyphs">HBM</text>
<circle cx="197.6" cy="233.2" r="5.6" fill="none" stroke="#8a8a8a" stroke-width="0.9"/>
<line x1="192.0" y1="233.2" x2="272.2" y2="233.2" stroke="#858585" stroke-width="0.9"/>
<text x="197.6" y="231.89999999999998" font-size="2.8" fill="#e00000" text-anchor="middle" >1</text>
<text x="197.6" y="236.79999999999998" font-size="2.8" fill="#e00000" text-anchor="middle" >502</text>
<text x="205.8" y="232.79999999999998" font-size="6.6" fill="#e00808" font-weight="bold" textLength="56.19999999999999" lengthAdjust="spacingAndGlyphs">HBMWEHKNBMH</text>
<text x="261.2" y="239.0" font-size="4.8" fill="#b80000" font-weight="bold" textLength="8" lengthAdjust="spacing">1:5</text>
<path d="M184 103.8 H188 M186.5 102.5 L188.5 103.8 L186.5 105" fill="none" stroke="#b0b0b0" stroke-width="0.6"/>
<rect x="280.3" y="66.5" width="45.7" height="160" fill="url(#conc)" stroke="#7a7a7a" stroke-width="0.8" />
<circle cx="288.5" cy="124.2" r="0.4" fill="#727272"/>
<circle cx="281.2" cy="73.8" r="0.6" fill="#727272"/>
<circle cx="317.3" cy="81.5" r="0.7" fill="#727272"/>
<circle cx="302.4" cy="210.1" r="0.4" fill="#727272"/>
<circle cx="290.1" cy="133.0" r="0.5" fill="#727272"/>
<circle cx="295.8" cy="204.4" r="0.6" fill="#727272"/>
<circle cx="295.9" cy="191.1" r="0.5" fill="#727272"/>
<circle cx="293.3" cy="121.2" r="0.6" fill="#727272"/>
<circle cx="305.6" cy="198.8" r="0.6" fill="#727272"/>
<circle cx="296.5" cy="145.5" r="0.6" fill="#727272"/>
<circle cx="303.3" cy="110.0" r="0.6" fill="#727272"/>
<circle cx="324.9" cy="171.2" r="0.4" fill="#727272"/>
<circle cx="295.4" cy="117.2" r="0.6" fill="#727272"/>
<circle cx="286.1" cy="222.1" r="0.4" fill="#727272"/>
<circle cx="316.1" cy="72.9" r="0.7" fill="#727272"/>
<circle cx="305.2" cy="74.5" r="0.6" fill="#727272"/>
<circle cx="285.3" cy="73.9" r="0.7" fill="#727272"/>
<circle cx="308.1" cy="171.8" r="0.7" fill="#727272"/>
<circle cx="308.5" cy="166.8" r="0.4" fill="#727272"/>
<circle cx="290.0" cy="173.2" r="0.7" fill="#727272"/>
<circle cx="308.9" cy="94.3" r="0.5" fill="#727272"/>
<circle cx="320.0" cy="134.0" r="0.4" fill="#727272"/>
<circle cx="322.1" cy="171.4" r="0.6" fill="#727272"/>
<circle cx="320.1" cy="88.7" r="0.6" fill="#727272"/>
<circle cx="306.0" cy="107.8" r="0.6" fill="#727272"/>
<circle cx="288.7" cy="72.0" r="0.4" fill="#727272"/>
<circle cx="300.0" cy="169.2" r="0.4" fill="#727272"/>
<circle cx="303.0" cy="150.0" r="0.4" fill="#727272"/>
<circle cx="315.7" cy="133.9" r="0.7" fill="#727272"/>
<circle cx="300.7" cy="68.8" r="0.7" fill="#727272"/>
<circle cx="307.4" cy="225.4" r="0.5" fill="#727272"/>
<circle cx="302.0" cy="132.5" r="0.4" fill="#727272"/>
<circle cx="284.1" cy="142.1" r="0.5" fill="#727272"/>
<circle cx="308.9" cy="134.8" r="0.4" fill="#727272"/>
<circle cx="311.5" cy="86.0" r="0.4" fill="#727272"/>
<circle cx="290.3" cy="85.9" r="0.7" fill="#727272"/>
<circle cx="281.1" cy="181.6" r="0.5" fill="#727272"/>
<circle cx="300.9" cy="185.6" r="0.4" fill="#727272"/>
<circle cx="297.0" cy="186.1" r="0.5" fill="#727272"/>
<circle cx="313.6" cy="80.0" r="0.7" fill="#727272"/>
<circle cx="301.3" cy="215.7" r="0.6" fill="#727272"/>
<circle cx="322.0" cy="74.9" r="0.4" fill="#727272"/>
<circle cx="280.8" cy="68.9" r="0.4" fill="#727272"/>
<circle cx="298.1" cy="116.5" r="0.5" fill="#727272"/>
<circle cx="324.1" cy="200.1" r="0.4" fill="#727272"/>
<circle cx="294.8" cy="218.3" r="0.7" fill="#727272"/>
<circle cx="301.8" cy="93.1" r="0.4" fill="#727272"/>
<circle cx="296.9" cy="169.7" r="0.7" fill="#727272"/>
<circle cx="302.1" cy="191.0" r="0.7" fill="#727272"/>
<circle cx="323.5" cy="192.0" r="0.6" fill="#727272"/>
<circle cx="293.7" cy="76.2" r="0.6" fill="#727272"/>
<circle cx="320.0" cy="182.6" r="0.4" fill="#727272"/>
<circle cx="318.3" cy="162.7" r="0.6" fill="#727272"/>
<circle cx="307.0" cy="222.7" r="0.5" fill="#727272"/>
<circle cx="297.5" cy="176.1" r="0.5" fill="#727272"/>
<circle cx="317.2" cy="111.8" r="0.4" fill="#727272"/>
<circle cx="295.0" cy="109.4" r="0.5" fill="#727272"/>
<circle cx="307.1" cy="197.1" r="0.4" fill="#727272"/>
<circle cx="293.5" cy="89.0" r="0.5" fill="#727272"/>
<circle cx="292.8" cy="202.7" r="0.7" fill="#727272"/>
<circle cx="296.2" cy="80.1" r="0.7" fill="#727272"/>
<circle cx="316.7" cy="98.6" r="0.5" fill="#727272"/>
<circle cx="294.4" cy="75.7" r="0.7" fill="#727272"/>
<circle cx="301.6" cy="99.6" r="0.6" fill="#727272"/>
<circle cx="307.1" cy="68.0" r="0.7" fill="#727272"/>
<circle cx="301.3" cy="80.5" r="0.6" fill="#727272"/>
<circle cx="315.6" cy="103.8" r="0.6" fill="#727272"/>
<circle cx="320.7" cy="150.0" r="0.7" fill="#727272"/>
<circle cx="303.4" cy="98.8" r="0.5" fill="#727272"/>
<circle cx="289.1" cy="95.4" r="0.6" fill="#727272"/>
<circle cx="296.9" cy="156.8" r="0.7" fill="#727272"/>
<circle cx="315.9" cy="203.6" r="0.5" fill="#727272"/>
<circle cx="282.3" cy="226.0" r="0.6" fill="#727272"/>
<circle cx="319.9" cy="126.0" r="0.7" fill="#727272"/>
<circle cx="316.3" cy="91.5" r="0.4" fill="#727272"/>
<circle cx="296.1" cy="149.6" r="0.4" fill="#727272"/>
<circle cx="284.6" cy="99.2" r="0.7" fill="#727272"/>
<circle cx="307.1" cy="100.7" r="0.6" fill="#727272"/>
<circle cx="299.8" cy="217.9" r="0.5" fill="#727272"/>
<circle cx="291.9" cy="72.6" r="0.5" fill="#727272"/>
<circle cx="325.8" cy="127.0" r="0.4" fill="#727272"/>
<circle cx="282.6" cy="155.7" r="0.7" fill="#727272"/>
<circle cx="302.5" cy="201.8" r="0.4" fill="#727272"/>
<circle cx="319.7" cy="168.9" r="0.4" fill="#727272"/>
<circle cx="312.6" cy="80.9" r="0.6" fill="#727272"/>
<circle cx="306.1" cy="169.0" r="0.7" fill="#727272"/>
<circle cx="288.6" cy="202.5" r="0.6" fill="#727272"/>
<circle cx="324.4" cy="225.2" r="0.5" fill="#727272"/>
<circle cx="288.2" cy="217.2" r="0.6" fill="#727272"/>
<circle cx="283.0" cy="155.0" r="0.4" fill="#727272"/>
<circle cx="318.6" cy="74.0" r="0.7" fill="#727272"/>
<circle cx="282.8" cy="89.7" r="0.4" fill="#727272"/>
<circle cx="323.2" cy="174.8" r="0.6" fill="#727272"/>
<circle cx="307.3" cy="137.1" r="0.4" fill="#727272"/>
<circle cx="301.8" cy="126.0" r="0.7" fill="#727272"/>
<circle cx="286.0" cy="143.5" r="0.5" fill="#727272"/>
<circle cx="300.5" cy="195.7" r="0.4" fill="#727272"/>
<circle cx="301.7" cy="212.5" r="0.4" fill="#727272"/>
<circle cx="287.5" cy="199.8" r="0.4" fill="#727272"/>
<circle cx="323.0" cy="205.2" r="0.5" fill="#727272"/>
<circle cx="315.9" cy="219.8" r="0.7" fill="#727272"/>
<circle cx="318.8" cy="167.0" r="0.7" fill="#727272"/>
<circle cx="324.7" cy="118.1" r="0.5" fill="#727272"/>
<circle cx="302.1" cy="167.0" r="0.5" fill="#727272"/>
<circle cx="295.5" cy="184.3" r="0.5" fill="#727272"/>
<circle cx="312.9" cy="155.0" r="0.5" fill="#727272"/>
<circle cx="300.4" cy="90.4" r="0.7" fill="#727272"/>
<circle cx="299.1" cy="91.4" r="0.6" fill="#727272"/>
<circle cx="306.4" cy="113.9" r="0.5" fill="#727272"/>
<circle cx="292.2" cy="84.0" r="0.7" fill="#727272"/>
<circle cx="321.6" cy="84.8" r="0.4" fill="#727272"/>
<circle cx="309.1" cy="192.5" r="0.5" fill="#727272"/>
<circle cx="305.9" cy="200.1" r="0.4" fill="#727272"/>
<circle cx="292.1" cy="98.8" r="0.6" fill="#727272"/>
<circle cx="300.0" cy="108.3" r="0.5" fill="#727272"/>
<circle cx="322.6" cy="82.1" r="0.6" fill="#727272"/>
<circle cx="299.3" cy="92.5" r="0.6" fill="#727272"/>
<circle cx="286.9" cy="168.9" r="0.7" fill="#727272"/>
<circle cx="317.2" cy="121.0" r="0.5" fill="#727272"/>
<circle cx="300.5" cy="192.8" r="0.6" fill="#727272"/>
<circle cx="288.8" cy="136.1" r="0.7" fill="#727272"/>
<circle cx="290.3" cy="157.9" r="0.5" fill="#727272"/>
<circle cx="318.8" cy="150.0" r="0.5" fill="#727272"/>
<circle cx="312.8" cy="98.0" r="0.4" fill="#727272"/>
<circle cx="318.2" cy="208.8" r="0.7" fill="#727272"/>
<circle cx="315.1" cy="94.6" r="0.5" fill="#727272"/>
<circle cx="308.3" cy="179.7" r="0.5" fill="#727272"/>
<circle cx="306.9" cy="98.9" r="0.4" fill="#727272"/>
<circle cx="311.9" cy="149.6" r="0.4" fill="#727272"/>
<circle cx="304.0" cy="122.1" r="0.6" fill="#727272"/>
<circle cx="318.8" cy="204.8" r="0.7" fill="#727272"/>
<circle cx="284.4" cy="132.0" r="0.7" fill="#727272"/>
<circle cx="286.4" cy="173.0" r="0.5" fill="#727272"/>
<circle cx="288.8" cy="199.6" r="0.6" fill="#727272"/>
<circle cx="282.0" cy="178.9" r="0.4" fill="#727272"/>
<circle cx="296.6" cy="215.6" r="0.4" fill="#727272"/>
<circle cx="285.8" cy="180.8" r="0.6" fill="#727272"/>
<circle cx="315.9" cy="205.4" r="0.4" fill="#727272"/>
<circle cx="293.6" cy="83.7" r="0.7" fill="#727272"/>
<circle cx="300.7" cy="70.6" r="0.5" fill="#727272"/>
<circle cx="281.2" cy="221.3" r="0.5" fill="#727272"/>
<circle cx="308.6" cy="93.4" r="0.6" fill="#727272"/>
<circle cx="291.7" cy="197.2" r="0.4" fill="#727272"/>
<circle cx="281.2" cy="214.7" r="0.5" fill="#727272"/>
<circle cx="292.2" cy="200.5" r="0.7" fill="#727272"/>
<circle cx="304.2" cy="178.9" r="0.4" fill="#727272"/>
<circle cx="296.3" cy="81.5" r="0.5" fill="#727272"/>
<circle cx="282.4" cy="86.2" r="0.7" fill="#727272"/>
<circle cx="307.1" cy="188.3" r="0.4" fill="#727272"/>
<circle cx="285.9" cy="131.4" r="0.5" fill="#727272"/>
<circle cx="305.1" cy="102.9" r="0.5" fill="#727272"/>
<circle cx="287.0" cy="158.2" r="0.7" fill="#727272"/>
<circle cx="287.8" cy="198.7" r="0.7" fill="#727272"/>
<circle cx="312.0" cy="162.0" r="0.4" fill="#727272"/>
<circle cx="298.4" cy="217.1" r="0.6" fill="#727272"/>
<circle cx="295.8" cy="105.0" r="0.6" fill="#727272"/>
<circle cx="313.0" cy="201.4" r="0.6" fill="#727272"/>
<circle cx="317.5" cy="202.1" r="0.4" fill="#727272"/>
<circle cx="295.1" cy="90.0" r="0.6" fill="#727272"/>
<circle cx="291.7" cy="134.0" r="0.4" fill="#727272"/>
<circle cx="297.0" cy="151.4" r="0.4" fill="#727272"/>
<circle cx="295.1" cy="98.6" r="0.4" fill="#727272"/>
<circle cx="290.6" cy="133.8" r="0.7" fill="#727272"/>
<circle cx="315.8" cy="216.4" r="0.4" fill="#727272"/>
<circle cx="317.3" cy="208.0" r="0.4" fill="#727272"/>
<circle cx="281.9" cy="169.2" r="0.6" fill="#727272"/>
<circle cx="322.2" cy="166.3" r="0.4" fill="#727272"/>
<circle cx="308.7" cy="106.6" r="0.4" fill="#727272"/>
<circle cx="300.1" cy="218.6" r="0.6" fill="#727272"/>
<circle cx="285.5" cy="122.1" r="0.5" fill="#727272"/>
<circle cx="285.8" cy="161.6" r="0.6" fill="#727272"/>
<circle cx="284.2" cy="160.9" r="0.5" fill="#727272"/>
<circle cx="300.4" cy="148.4" r="0.6" fill="#727272"/>
<circle cx="322.1" cy="158.9" r="0.6" fill="#727272"/>
<circle cx="291.4" cy="80.6" r="0.6" fill="#727272"/>
<circle cx="318.7" cy="164.1" r="0.5" fill="#727272"/>
<circle cx="310.0" cy="98.7" r="0.6" fill="#727272"/>
<circle cx="301.4" cy="154.2" r="0.7" fill="#727272"/>
<circle cx="301.7" cy="116.2" r="0.5" fill="#727272"/>
<circle cx="295.5" cy="96.7" r="0.7" fill="#727272"/>
<circle cx="324.6" cy="129.9" r="0.6" fill="#727272"/>
<circle cx="287.7" cy="218.8" r="0.6" fill="#727272"/>
<circle cx="305.7" cy="145.1" r="0.6" fill="#727272"/>
<circle cx="320.4" cy="101.1" r="0.4" fill="#727272"/>
<circle cx="315.6" cy="91.9" r="0.4" fill="#727272"/>
<circle cx="308.0" cy="122.2" r="0.4" fill="#727272"/>
<circle cx="303.9" cy="200.0" r="0.6" fill="#727272"/>
<circle cx="313.9" cy="84.0" r="0.5" fill="#727272"/>
<circle cx="325.5" cy="174.9" r="0.5" fill="#727272"/>
<circle cx="299.3" cy="173.4" r="0.5" fill="#727272"/>
<circle cx="311.2" cy="165.1" r="0.6" fill="#727272"/>
<circle cx="317.8" cy="149.3" r="0.7" fill="#727272"/>
<circle cx="292.6" cy="167.4" r="0.5" fill="#727272"/>
<circle cx="299.2" cy="83.0" r="0.7" fill="#727272"/>
<circle cx="315.3" cy="160.2" r="0.7" fill="#727272"/>
<circle cx="298.5" cy="225.4" r="0.5" fill="#727272"/>
<circle cx="299.4" cy="191.9" r="0.4" fill="#727272"/>
<circle cx="297.6" cy="138.9" r="0.7" fill="#727272"/>
<circle cx="293.5" cy="122.9" r="0.6" fill="#727272"/>
<circle cx="298.2" cy="155.4" r="0.7" fill="#727272"/>
<circle cx="309.9" cy="67.6" r="0.7" fill="#727272"/>
<circle cx="297.7" cy="114.5" r="0.6" fill="#727272"/>
<circle cx="317.0" cy="136.2" r="0.7" fill="#727272"/>
<circle cx="306.9" cy="80.6" r="0.6" fill="#727272"/>
<circle cx="295.1" cy="201.4" r="0.5" fill="#727272"/>
<circle cx="324.1" cy="99.2" r="0.7" fill="#727272"/>
<circle cx="321.0" cy="219.4" r="0.4" fill="#727272"/>
<circle cx="282.5" cy="156.9" r="0.7" fill="#727272"/>
<circle cx="294.0" cy="152.3" r="0.6" fill="#727272"/>
<circle cx="304.9" cy="226.2" r="0.7" fill="#727272"/>
<circle cx="298.1" cy="123.7" r="0.6" fill="#727272"/>
<circle cx="301.0" cy="68.2" r="0.4" fill="#727272"/>
<circle cx="304.3" cy="82.3" r="0.6" fill="#727272"/>
<circle cx="303.2" cy="170.3" r="0.5" fill="#727272"/>
<circle cx="320.5" cy="220.8" r="0.7" fill="#727272"/>
<circle cx="298.7" cy="189.3" r="0.6" fill="#727272"/>
<circle cx="311.9" cy="185.9" r="0.4" fill="#727272"/>
<circle cx="288.1" cy="117.4" r="0.4" fill="#727272"/>
<circle cx="318.0" cy="148.5" r="0.4" fill="#727272"/>
<circle cx="310.3" cy="113.7" r="0.6" fill="#727272"/>
<circle cx="317.8" cy="224.9" r="0.7" fill="#727272"/>
<circle cx="309.1" cy="150.3" r="0.5" fill="#727272"/>
<circle cx="303.4" cy="96.6" r="0.5" fill="#727272"/>
<circle cx="283.0" cy="156.9" r="0.4" fill="#727272"/>
<circle cx="296.4" cy="225.5" r="0.4" fill="#727272"/>
<circle cx="311.9" cy="68.2" r="0.4" fill="#727272"/>
<circle cx="294.3" cy="177.0" r="0.4" fill="#727272"/>
<circle cx="322.2" cy="130.1" r="0.4" fill="#727272"/>
<circle cx="307.1" cy="173.4" r="0.5" fill="#727272"/>
<circle cx="288.3" cy="189.5" r="0.6" fill="#727272"/>
<circle cx="320.1" cy="209.8" r="0.5" fill="#727272"/>
<circle cx="306.6" cy="132.3" r="0.4" fill="#727272"/>
<circle cx="286.9" cy="149.4" r="0.4" fill="#727272"/>
<circle cx="281.6" cy="78.7" r="0.7" fill="#727272"/>
<circle cx="317.9" cy="164.6" r="0.4" fill="#727272"/>
<circle cx="310.0" cy="176.0" r="0.6" fill="#727272"/>
<circle cx="286.9" cy="104.6" r="0.6" fill="#727272"/>
<circle cx="288.0" cy="109.2" r="0.4" fill="#727272"/>
<circle cx="319.6" cy="218.1" r="0.4" fill="#727272"/>
<circle cx="296.2" cy="138.5" r="0.7" fill="#727272"/>
<circle cx="281.2" cy="101.7" r="0.7" fill="#727272"/>
<circle cx="306.9" cy="220.0" r="0.7" fill="#727272"/>
<circle cx="282.8" cy="104.6" r="0.5" fill="#727272"/>
<circle cx="282.3" cy="215.4" r="0.5" fill="#727272"/>
<circle cx="294.7" cy="210.3" r="0.7" fill="#727272"/>
<circle cx="294.2" cy="162.9" r="0.7" fill="#727272"/>
<circle cx="325.1" cy="77.3" r="0.7" fill="#727272"/>
<circle cx="311.1" cy="160.1" r="0.7" fill="#727272"/>
<circle cx="294.4" cy="206.5" r="0.7" fill="#727272"/>
<circle cx="281.3" cy="205.4" r="0.4" fill="#727272"/>
<circle cx="288.2" cy="123.8" r="0.5" fill="#727272"/>
<circle cx="280.6" cy="207.7" r="0.7" fill="#727272"/>
<circle cx="306.0" cy="84.9" r="0.7" fill="#727272"/>
<circle cx="295.6" cy="170.7" r="0.4" fill="#727272"/>
<circle cx="299.6" cy="212.6" r="0.5" fill="#727272"/>
<circle cx="298.0" cy="141.2" r="0.6" fill="#727272"/>
<circle cx="291.1" cy="72.1" r="0.4" fill="#727272"/>
<circle cx="295.9" cy="91.4" r="0.5" fill="#727272"/>
<circle cx="284.5" cy="109.6" r="0.5" fill="#727272"/>
<circle cx="305.7" cy="141.2" r="0.5" fill="#727272"/>
<circle cx="287.6" cy="123.0" r="0.7" fill="#727272"/>
<circle cx="297.5" cy="219.8" r="0.5" fill="#727272"/>
<circle cx="293.9" cy="142.7" r="0.5" fill="#727272"/>
<circle cx="290.7" cy="138.9" r="0.5" fill="#727272"/>
<circle cx="323.4" cy="226.2" r="0.7" fill="#727272"/>
<circle cx="307.2" cy="125.4" r="0.5" fill="#727272"/>
<circle cx="298.8" cy="148.1" r="0.5" fill="#727272"/>
<circle cx="320.2" cy="86.1" r="0.4" fill="#727272"/>
<circle cx="305.1" cy="109.8" r="0.7" fill="#727272"/>
<circle cx="281.6" cy="181.4" r="0.5" fill="#727272"/>
<circle cx="294.5" cy="128.9" r="0.4" fill="#727272"/>
<circle cx="312.0" cy="190.7" r="0.5" fill="#727272"/>
<circle cx="295.0" cy="172.5" r="0.4" fill="#727272"/>
<circle cx="283.4" cy="212.7" r="0.6" fill="#727272"/>
<circle cx="289.1" cy="181.5" r="0.4" fill="#727272"/>
<circle cx="290.6" cy="86.7" r="0.7" fill="#727272"/>
<circle cx="293.2" cy="131.0" r="0.7" fill="#727272"/>
<circle cx="315.7" cy="207.7" r="0.5" fill="#727272"/>
<circle cx="323.1" cy="94.7" r="0.6" fill="#727272"/>
<circle cx="311.4" cy="172.7" r="0.6" fill="#727272"/>
<circle cx="321.3" cy="70.5" r="0.7" fill="#727272"/>
<circle cx="291.7" cy="202.0" r="0.6" fill="#727272"/>
<circle cx="321.7" cy="82.1" r="0.6" fill="#727272"/>
<circle cx="285.6" cy="212.5" r="0.5" fill="#727272"/>
<circle cx="312.9" cy="73.0" r="0.4" fill="#727272"/>
<circle cx="308.1" cy="135.4" r="0.6" fill="#727272"/>
<circle cx="287.4" cy="184.6" r="0.6" fill="#727272"/>
<circle cx="309.1" cy="217.1" r="0.5" fill="#727272"/>
<circle cx="306.4" cy="181.2" r="0.6" fill="#727272"/>
<circle cx="322.6" cy="173.7" r="0.6" fill="#727272"/>
<circle cx="323.1" cy="84.4" r="0.6" fill="#727272"/>
<circle cx="321.5" cy="206.5" r="0.4" fill="#727272"/>
<circle cx="324.8" cy="175.5" r="0.4" fill="#727272"/>
<circle cx="316.5" cy="100.1" r="0.6" fill="#727272"/>
<circle cx="314.6" cy="80.3" r="0.7" fill="#727272"/>
<circle cx="325.9" cy="165.0" r="0.5" fill="#727272"/>
<circle cx="293.1" cy="80.9" r="0.7" fill="#727272"/>
<circle cx="300.5" cy="120.9" r="0.7" fill="#727272"/>
<circle cx="303.5" cy="174.8" r="0.5" fill="#727272"/>
<circle cx="299.9" cy="148.4" r="0.5" fill="#727272"/>
<circle cx="302.7" cy="96.8" r="0.6" fill="#727272"/>
<circle cx="288.3" cy="92.7" r="0.5" fill="#727272"/>
<circle cx="305.2" cy="106.5" r="0.4" fill="#727272"/>
<circle cx="288.0" cy="122.1" r="0.4" fill="#727272"/>
<circle cx="289.5" cy="116.2" r="0.5" fill="#727272"/>
<circle cx="311.7" cy="144.3" r="0.7" fill="#727272"/>
<circle cx="291.2" cy="105.2" r="0.7" fill="#727272"/>
<circle cx="286.4" cy="169.0" r="0.6" fill="#727272"/>
<circle cx="286.4" cy="179.7" r="0.5" fill="#727272"/>
<circle cx="295.5" cy="197.0" r="0.7" fill="#727272"/>
<circle cx="315.1" cy="93.6" r="0.5" fill="#727272"/>
<circle cx="307.7" cy="140.3" r="0.7" fill="#727272"/>
<circle cx="318.3" cy="84.8" r="0.6" fill="#727272"/>
<circle cx="280.9" cy="144.4" r="0.4" fill="#727272"/>
<circle cx="283.1" cy="111.4" r="0.5" fill="#727272"/>
<circle cx="285.4" cy="115.9" r="0.4" fill="#727272"/>
<circle cx="287.7" cy="137.7" r="0.6" fill="#727272"/>
<circle cx="293.5" cy="155.7" r="0.4" fill="#727272"/>
<circle cx="280.8" cy="225.2" r="0.7" fill="#727272"/>
<circle cx="284.1" cy="181.2" r="0.6" fill="#727272"/>
<circle cx="285.3" cy="144.7" r="0.7" fill="#727272"/>
<circle cx="302.6" cy="191.9" r="0.6" fill="#727272"/>
<circle cx="280.7" cy="213.6" r="0.6" fill="#727272"/>
<circle cx="309.0" cy="216.1" r="0.6" fill="#727272"/>
<circle cx="310.1" cy="79.0" r="0.4" fill="#727272"/>
<circle cx="281.5" cy="129.7" r="0.5" fill="#727272"/>
<circle cx="293.8" cy="96.2" r="0.5" fill="#727272"/>
<circle cx="285.0" cy="181.5" r="0.6" fill="#727272"/>
<circle cx="314.2" cy="118.8" r="0.5" fill="#727272"/>
<circle cx="309.9" cy="123.5" r="0.5" fill="#727272"/>
<circle cx="297.1" cy="154.7" r="0.6" fill="#727272"/>
<circle cx="318.6" cy="107.1" r="0.4" fill="#727272"/>
<circle cx="282.2" cy="157.2" r="0.7" fill="#727272"/>
<circle cx="321.7" cy="217.7" r="0.7" fill="#727272"/>
<circle cx="299.6" cy="183.4" r="0.6" fill="#727272"/>
<circle cx="307.8" cy="166.7" r="0.5" fill="#727272"/>
<circle cx="311.7" cy="92.7" r="0.7" fill="#727272"/>
<circle cx="309.4" cy="130.7" r="0.4" fill="#727272"/>
<circle cx="319.2" cy="143.2" r="0.5" fill="#727272"/>
<circle cx="313.3" cy="66.9" r="0.7" fill="#727272"/>
<circle cx="286.8" cy="78.0" r="0.4" fill="#727272"/>
<circle cx="303.8" cy="133.9" r="0.6" fill="#727272"/>
<circle cx="283.2" cy="67.9" r="0.5" fill="#727272"/>
<circle cx="321.6" cy="92.8" r="0.6" fill="#727272"/>
<circle cx="280.5" cy="195.2" r="0.6" fill="#727272"/>
<circle cx="306.2" cy="141.5" r="0.6" fill="#727272"/>
<circle cx="303.9" cy="135.0" r="0.5" fill="#727272"/>
<circle cx="324.8" cy="220.4" r="0.4" fill="#727272"/>
<circle cx="317.4" cy="76.1" r="0.6" fill="#727272"/>
<circle cx="308.1" cy="114.0" r="0.7" fill="#727272"/>
<circle cx="323.8" cy="143.4" r="0.5" fill="#727272"/>
<circle cx="294.0" cy="121.4" r="0.4" fill="#727272"/>
<circle cx="319.1" cy="102.1" r="0.7" fill="#727272"/>
<circle cx="311.9" cy="90.0" r="0.6" fill="#727272"/>
<circle cx="305.7" cy="217.4" r="0.6" fill="#727272"/>
<circle cx="304.5" cy="156.9" r="0.7" fill="#727272"/>
<circle cx="292.2" cy="102.9" r="0.5" fill="#727272"/>
<circle cx="305.3" cy="84.5" r="0.6" fill="#727272"/>
<circle cx="310.0" cy="96.5" r="0.6" fill="#727272"/>
<circle cx="312.7" cy="102.8" r="0.7" fill="#727272"/>
<circle cx="290.7" cy="158.1" r="0.4" fill="#727272"/>
<circle cx="313.9" cy="212.0" r="0.4" fill="#727272"/>
<circle cx="319.2" cy="175.2" r="0.7" fill="#727272"/>
<circle cx="286.4" cy="147.0" r="0.4" fill="#727272"/>
<circle cx="308.9" cy="220.2" r="0.4" fill="#727272"/>
<circle cx="301.3" cy="176.3" r="0.5" fill="#727272"/>
<circle cx="324.5" cy="97.2" r="0.7" fill="#727272"/>
<circle cx="315.7" cy="88.4" r="0.4" fill="#727272"/>
<circle cx="298.8" cy="74.1" r="0.4" fill="#727272"/>
<circle cx="281.0" cy="161.6" r="0.5" fill="#727272"/>
<circle cx="301.3" cy="85.8" r="0.5" fill="#727272"/>
<circle cx="299.8" cy="208.7" r="0.5" fill="#727272"/>
<circle cx="306.0" cy="213.3" r="0.6" fill="#727272"/>
<circle cx="288.0" cy="185.8" r="0.6" fill="#727272"/>
<circle cx="317.0" cy="184.3" r="0.4" fill="#727272"/>
<circle cx="318.0" cy="86.1" r="0.6" fill="#727272"/>
<circle cx="303.8" cy="150.5" r="0.6" fill="#727272"/>
<circle cx="313.3" cy="73.5" r="0.6" fill="#727272"/>
<circle cx="284.9" cy="154.3" r="0.4" fill="#727272"/>
<circle cx="281.9" cy="212.1" r="0.5" fill="#727272"/>
<circle cx="291.9" cy="97.4" r="0.7" fill="#727272"/>
<circle cx="281.3" cy="224.7" r="0.7" fill="#727272"/>
<circle cx="285.5" cy="69.9" r="0.4" fill="#727272"/>
<circle cx="283.7" cy="107.8" r="0.5" fill="#727272"/>
<circle cx="305.6" cy="112.9" r="0.7" fill="#727272"/>
<circle cx="318.5" cy="160.6" r="0.6" fill="#727272"/>
<circle cx="304.9" cy="176.8" r="0.6" fill="#727272"/>
<circle cx="323.7" cy="68.7" r="0.6" fill="#727272"/>
<circle cx="325.7" cy="144.4" r="0.7" fill="#727272"/>
<circle cx="320.2" cy="194.6" r="0.4" fill="#727272"/>
<circle cx="283.7" cy="165.8" r="0.7" fill="#727272"/>
<circle cx="318.8" cy="221.3" r="0.7" fill="#727272"/>
<circle cx="298.3" cy="206.2" r="0.4" fill="#727272"/>
<circle cx="296.8" cy="151.0" r="0.6" fill="#727272"/>
<circle cx="321.2" cy="160.8" r="0.4" fill="#727272"/>
<circle cx="290.0" cy="197.6" r="0.7" fill="#727272"/>
<circle cx="295.4" cy="141.4" r="0.6" fill="#727272"/>
<circle cx="294.7" cy="120.2" r="0.7" fill="#727272"/>
<circle cx="295.6" cy="69.8" r="0.7" fill="#727272"/>
<circle cx="320.3" cy="163.9" r="0.5" fill="#727272"/>
<circle cx="313.5" cy="89.5" r="0.7" fill="#727272"/>
<circle cx="292.8" cy="146.5" r="0.6" fill="#727272"/>
<circle cx="296.6" cy="158.3" r="0.5" fill="#727272"/>
<circle cx="325.6" cy="72.0" r="0.4" fill="#727272"/>
<circle cx="320.2" cy="190.4" r="0.4" fill="#727272"/>
<circle cx="296.9" cy="111.6" r="0.5" fill="#727272"/>
<circle cx="320.2" cy="216.7" r="0.4" fill="#727272"/>
<circle cx="294.2" cy="188.6" r="0.6" fill="#727272"/>
<circle cx="303.6" cy="168.1" r="0.6" fill="#727272"/>
<circle cx="320.2" cy="181.0" r="0.6" fill="#727272"/>
<circle cx="283.1" cy="120.5" r="0.6" fill="#727272"/>
<circle cx="320.7" cy="191.7" r="0.6" fill="#727272"/>
<circle cx="321.2" cy="196.0" r="0.6" fill="#727272"/>
<circle cx="287.2" cy="99.4" r="0.7" fill="#727272"/>
<circle cx="298.8" cy="129.9" r="0.6" fill="#727272"/>
<circle cx="322.8" cy="160.4" r="0.5" fill="#727272"/>
<circle cx="294.1" cy="115.9" r="0.6" fill="#727272"/>
<circle cx="283.7" cy="96.9" r="0.4" fill="#727272"/>
<circle cx="307.0" cy="115.2" r="0.6" fill="#727272"/>
<circle cx="325.4" cy="123.6" r="0.7" fill="#727272"/>
<circle cx="313.3" cy="214.0" r="0.7" fill="#727272"/>
<circle cx="294.9" cy="94.5" r="0.6" fill="#727272"/>
<circle cx="305.3" cy="187.9" r="0.6" fill="#727272"/>
<circle cx="291.1" cy="69.7" r="0.4" fill="#727272"/>
<circle cx="298.6" cy="98.6" r="0.6" fill="#727272"/>
<circle cx="319.8" cy="170.2" r="0.5" fill="#727272"/>
<circle cx="291.3" cy="75.6" r="0.5" fill="#727272"/>
<circle cx="307.8" cy="79.2" r="0.6" fill="#727272"/>
<circle cx="313.2" cy="67.3" r="0.6" fill="#727272"/>
<circle cx="304.8" cy="206.6" r="0.6" fill="#727272"/>
<circle cx="322.5" cy="100.5" r="0.6" fill="#727272"/>
<circle cx="320.0" cy="70.8" r="0.7" fill="#727272"/>
<circle cx="298.8" cy="175.1" r="0.6" fill="#727272"/>
<circle cx="288.3" cy="204.6" r="0.4" fill="#727272"/>
<circle cx="284.3" cy="164.5" r="0.7" fill="#727272"/>
<circle cx="325.4" cy="130.4" r="0.7" fill="#727272"/>
<circle cx="320.2" cy="70.6" r="0.6" fill="#727272"/>
<circle cx="306.1" cy="224.5" r="0.4" fill="#727272"/>
<circle cx="299.3" cy="180.1" r="0.6" fill="#727272"/>
<circle cx="287.5" cy="69.5" r="0.5" fill="#727272"/>
<circle cx="286.8" cy="189.3" r="0.4" fill="#727272"/>
<circle cx="296.7" cy="124.4" r="0.6" fill="#727272"/>
<circle cx="304.9" cy="160.7" r="0.5" fill="#727272"/>
<circle cx="310.3" cy="162.8" r="0.6" fill="#727272"/>
<circle cx="290.8" cy="165.5" r="0.7" fill="#727272"/>
<circle cx="315.2" cy="190.7" r="0.6" fill="#727272"/>
<circle cx="310.1" cy="154.4" r="0.7" fill="#727272"/>
<circle cx="305.9" cy="124.3" r="0.6" fill="#727272"/>
<circle cx="286.3" cy="67.9" r="0.7" fill="#727272"/>
<circle cx="284.9" cy="196.0" r="0.6" fill="#727272"/>
<circle cx="287.2" cy="167.1" r="0.7" fill="#727272"/>
<circle cx="314.9" cy="80.9" r="0.4" fill="#727272"/>
<circle cx="308.8" cy="86.1" r="0.5" fill="#727272"/>
<circle cx="305.7" cy="95.6" r="0.6" fill="#727272"/>
<circle cx="314.0" cy="211.0" r="0.5" fill="#727272"/>
<circle cx="304.5" cy="122.6" r="0.5" fill="#727272"/>
<circle cx="300.5" cy="204.1" r="0.5" fill="#727272"/>
<circle cx="309.4" cy="121.6" r="0.7" fill="#727272"/>
<circle cx="301.3" cy="118.3" r="0.4" fill="#727272"/>
<circle cx="285.2" cy="183.8" r="0.4" fill="#727272"/>
<circle cx="317.2" cy="212.7" r="0.6" fill="#727272"/>
<circle cx="283.0" cy="156.8" r="0.7" fill="#727272"/>
<circle cx="321.8" cy="126.6" r="0.5" fill="#727272"/>
<circle cx="281.7" cy="69.8" r="0.7" fill="#727272"/>
<circle cx="291.4" cy="123.2" r="0.6" fill="#727272"/>
<circle cx="315.0" cy="169.3" r="0.6" fill="#727272"/>
<circle cx="320.5" cy="146.3" r="0.5" fill="#727272"/>
<circle cx="302.1" cy="215.9" r="0.6" fill="#727272"/>
<circle cx="323.9" cy="88.3" r="0.6" fill="#727272"/>
<circle cx="293.2" cy="119.5" r="0.7" fill="#727272"/>
<circle cx="320.2" cy="106.5" r="0.6" fill="#727272"/>
<circle cx="311.5" cy="162.1" r="0.7" fill="#727272"/>
<circle cx="290.0" cy="74.8" r="0.5" fill="#727272"/>
<circle cx="319.2" cy="184.2" r="0.4" fill="#727272"/>
<circle cx="315.9" cy="204.6" r="0.5" fill="#727272"/>
<circle cx="300.2" cy="88.9" r="0.6" fill="#727272"/>
<circle cx="311.6" cy="195.3" r="0.5" fill="#727272"/>
<circle cx="324.8" cy="68.0" r="0.6" fill="#727272"/>
<circle cx="287.2" cy="184.3" r="0.4" fill="#727272"/>
<circle cx="314.6" cy="140.8" r="0.7" fill="#727272"/>
<circle cx="284.4" cy="120.8" r="0.7" fill="#727272"/>
<circle cx="320.6" cy="223.2" r="0.4" fill="#727272"/>
<circle cx="307.0" cy="98.7" r="0.4" fill="#727272"/>
<circle cx="282.0" cy="147.3" r="0.5" fill="#727272"/>
<circle cx="306.6" cy="178.2" r="0.4" fill="#727272"/>
<circle cx="282.5" cy="209.5" r="0.4" fill="#727272"/>
<circle cx="320.5" cy="85.8" r="0.7" fill="#727272"/>
<circle cx="324.7" cy="150.6" r="0.4" fill="#727272"/>
<circle cx="288.5" cy="176.2" r="0.5" fill="#727272"/>
<circle cx="309.2" cy="153.8" r="0.4" fill="#727272"/>
<circle cx="304.5" cy="200.8" r="0.4" fill="#727272"/>
<circle cx="296.3" cy="100.9" r="0.5" fill="#727272"/>
<circle cx="313.7" cy="110.2" r="0.5" fill="#727272"/>
<circle cx="281.0" cy="109.5" r="0.4" fill="#727272"/>
<circle cx="289.3" cy="74.2" r="0.6" fill="#727272"/>
<circle cx="292.5" cy="118.6" r="0.4" fill="#727272"/>
<circle cx="310.1" cy="153.5" r="0.6" fill="#727272"/>
<circle cx="311.8" cy="223.7" r="0.6" fill="#727272"/>
<circle cx="298.5" cy="117.4" r="0.7" fill="#727272"/>
<circle cx="297.8" cy="90.7" r="0.7" fill="#727272"/>
<circle cx="320.6" cy="195.1" r="0.4" fill="#727272"/>
<circle cx="291.2" cy="146.7" r="0.6" fill="#727272"/>
<circle cx="312.0" cy="183.3" r="0.5" fill="#727272"/>
<circle cx="318.0" cy="172.6" r="0.4" fill="#727272"/>
<circle cx="318.8" cy="191.9" r="0.4" fill="#727272"/>
<circle cx="298.8" cy="155.9" r="0.7" fill="#727272"/>
<circle cx="305.4" cy="117.0" r="0.4" fill="#727272"/>
<circle cx="301.9" cy="170.1" r="0.7" fill="#727272"/>
<circle cx="303.6" cy="161.3" r="0.7" fill="#727272"/>
<circle cx="291.0" cy="167.2" r="0.7" fill="#727272"/>
<circle cx="296.5" cy="76.8" r="0.6" fill="#727272"/>
<circle cx="308.3" cy="174.9" r="0.6" fill="#727272"/>
<circle cx="283.6" cy="194.1" r="0.5" fill="#727272"/>
<circle cx="322.5" cy="189.0" r="0.6" fill="#727272"/>
<circle cx="321.8" cy="142.2" r="0.6" fill="#727272"/>
<circle cx="304.2" cy="142.8" r="0.5" fill="#727272"/>
<circle cx="326.0" cy="77.0" r="0.6" fill="#727272"/>
<circle cx="304.2" cy="150.9" r="0.6" fill="#727272"/>
<circle cx="291.2" cy="94.1" r="0.7" fill="#727272"/>
<circle cx="288.4" cy="218.1" r="0.4" fill="#727272"/>
<circle cx="295.0" cy="124.4" r="0.7" fill="#727272"/>
<circle cx="285.9" cy="91.1" r="0.6" fill="#727272"/>
<line x1="326.5" y1="74.5" x2="326.5" y2="226.5" stroke="#189498" stroke-width="1"/>
<rect x="334.7" y="66.5" width="5" height="160" fill="#7a7a7a" stroke="none" stroke-width="1" />
<circle cx="329.9" cy="158.7" r="0.5" fill="#6a6a6a"/>
<circle cx="331.9" cy="149.2" r="0.5" fill="#6a6a6a"/>
<circle cx="332.2" cy="167.6" r="0.4" fill="#8a8a8a"/>
<circle cx="332.6" cy="135.9" r="0.5" fill="#5a5a5a"/>
<circle cx="330.7" cy="190.0" r="0.5" fill="#6a6a6a"/>
<circle cx="332.9" cy="146.8" r="0.4" fill="#5a5a5a"/>
<circle cx="331.3" cy="126.1" r="0.5" fill="#5a5a5a"/>
<circle cx="332.3" cy="149.1" r="0.5" fill="#6a6a6a"/>
<circle cx="329.0" cy="208.4" r="0.5" fill="#4a4a4a"/>
<circle cx="333.3" cy="141.4" r="0.5" fill="#8a8a8a"/>
<circle cx="331.6" cy="159.4" r="0.5" fill="#4a4a4a"/>
<circle cx="329.9" cy="124.4" r="0.5" fill="#6a6a6a"/>
<circle cx="330.3" cy="184.4" r="0.5" fill="#6a6a6a"/>
<circle cx="329.0" cy="210.1" r="0.4" fill="#5a5a5a"/>
<circle cx="334.1" cy="210.3" r="0.4" fill="#6a6a6a"/>
<circle cx="332.0" cy="154.9" r="0.4" fill="#4a4a4a"/>
<circle cx="332.6" cy="160.2" r="0.5" fill="#8a8a8a"/>
<circle cx="333.9" cy="188.2" r="0.4" fill="#4a4a4a"/>
<circle cx="331.4" cy="169.0" r="0.5" fill="#8a8a8a"/>
<circle cx="330.2" cy="170.2" r="0.5" fill="#4a4a4a"/>
<circle cx="330.1" cy="134.3" r="0.4" fill="#4a4a4a"/>
<circle cx="332.5" cy="162.6" r="0.5" fill="#4a4a4a"/>
<circle cx="331.2" cy="201.5" r="0.4" fill="#8a8a8a"/>
<circle cx="327.9" cy="209.9" r="0.4" fill="#4a4a4a"/>
<circle cx="330.8" cy="209.9" r="0.5" fill="#5a5a5a"/>
<circle cx="327.7" cy="192.2" r="0.5" fill="#6a6a6a"/>
<circle cx="333.3" cy="178.3" r="0.4" fill="#8a8a8a"/>
<circle cx="334.3" cy="206.6" r="0.5" fill="#5a5a5a"/>
<circle cx="329.6" cy="174.9" r="0.4" fill="#4a4a4a"/>
<circle cx="334.2" cy="149.1" r="0.4" fill="#6a6a6a"/>
<circle cx="329.5" cy="147.0" r="0.5" fill="#6a6a6a"/>
<circle cx="330.9" cy="164.5" r="0.5" fill="#4a4a4a"/>
<circle cx="329.4" cy="211.9" r="0.5" fill="#8a8a8a"/>
<circle cx="329.4" cy="134.0" r="0.5" fill="#5a5a5a"/>
<circle cx="333.8" cy="189.6" r="0.5" fill="#5a5a5a"/>
<circle cx="333.8" cy="156.2" r="0.4" fill="#8a8a8a"/>
<circle cx="332.4" cy="120.9" r="0.5" fill="#4a4a4a"/>
<circle cx="334.0" cy="207.3" r="0.5" fill="#4a4a4a"/>
<circle cx="328.8" cy="166.5" r="0.4" fill="#5a5a5a"/>
<circle cx="332.9" cy="182.8" r="0.5" fill="#8a8a8a"/>
<circle cx="333.8" cy="167.2" r="0.4" fill="#5a5a5a"/>
<circle cx="328.6" cy="211.0" r="0.4" fill="#4a4a4a"/>
<circle cx="328.3" cy="213.3" r="0.4" fill="#8a8a8a"/>
<circle cx="327.4" cy="196.5" r="0.5" fill="#5a5a5a"/>
<circle cx="328.8" cy="196.4" r="0.4" fill="#6a6a6a"/>
<circle cx="331.0" cy="136.8" r="0.4" fill="#5a5a5a"/>
<circle cx="330.6" cy="141.4" r="0.4" fill="#4a4a4a"/>
<circle cx="330.2" cy="189.8" r="0.5" fill="#6a6a6a"/>
<circle cx="332.1" cy="136.4" r="0.4" fill="#4a4a4a"/>
<circle cx="327.6" cy="208.6" r="0.4" fill="#6a6a6a"/>
<circle cx="333.4" cy="204.5" r="0.5" fill="#5a5a5a"/>
<circle cx="333.7" cy="154.4" r="0.4" fill="#5a5a5a"/>
<circle cx="333.9" cy="190.5" r="0.5" fill="#5a5a5a"/>
<circle cx="334.1" cy="154.7" r="0.5" fill="#5a5a5a"/>
<circle cx="328.9" cy="177.8" r="0.4" fill="#4a4a4a"/>
<circle cx="330.6" cy="197.2" r="0.5" fill="#8a8a8a"/>
<circle cx="332.1" cy="132.1" r="0.4" fill="#6a6a6a"/>
<circle cx="331.9" cy="142.3" r="0.5" fill="#4a4a4a"/>
<circle cx="330.7" cy="121.9" r="0.4" fill="#8a8a8a"/>
<circle cx="328.7" cy="149.7" r="0.4" fill="#6a6a6a"/>
<circle cx="328.7" cy="169.9" r="0.5" fill="#5a5a5a"/>
<circle cx="327.5" cy="183.5" r="0.5" fill="#4a4a4a"/>
<circle cx="328.7" cy="136.1" r="0.4" fill="#6a6a6a"/>
<circle cx="328.5" cy="157.1" r="0.4" fill="#8a8a8a"/>
<circle cx="329.6" cy="158.6" r="0.5" fill="#4a4a4a"/>
<circle cx="333.0" cy="196.7" r="0.4" fill="#8a8a8a"/>
<circle cx="332.5" cy="132.0" r="0.5" fill="#5a5a5a"/>
<circle cx="330.5" cy="123.6" r="0.5" fill="#4a4a4a"/>
<circle cx="331.8" cy="134.0" r="0.4" fill="#6a6a6a"/>
<circle cx="329.9" cy="190.3" r="0.5" fill="#5a5a5a"/>
<circle cx="328.5" cy="219.8" r="0.4" fill="#6a6a6a"/>
<circle cx="333.2" cy="212.6" r="0.5" fill="#8a8a8a"/>
<circle cx="328.3" cy="130.0" r="0.4" fill="#5a5a5a"/>
<circle cx="328.4" cy="148.7" r="0.5" fill="#4a4a4a"/>
<circle cx="330.6" cy="137.4" r="0.5" fill="#4a4a4a"/>
<circle cx="329.9" cy="141.0" r="0.4" fill="#8a8a8a"/>
<circle cx="334.2" cy="216.3" r="0.4" fill="#5a5a5a"/>
<circle cx="327.4" cy="220.0" r="0.4" fill="#8a8a8a"/>
<circle cx="332.1" cy="144.3" r="0.4" fill="#5a5a5a"/>
<circle cx="333.2" cy="225.8" r="0.5" fill="#8a8a8a"/>
<circle cx="331.7" cy="131.6" r="0.4" fill="#4a4a4a"/>
<circle cx="331.9" cy="143.1" r="0.4" fill="#5a5a5a"/>
<circle cx="333.0" cy="127.7" r="0.4" fill="#6a6a6a"/>
<circle cx="327.6" cy="185.5" r="0.5" fill="#5a5a5a"/>
<circle cx="329.7" cy="205.9" r="0.4" fill="#8a8a8a"/>
<circle cx="327.4" cy="219.7" r="0.5" fill="#8a8a8a"/>
<circle cx="327.5" cy="203.6" r="0.4" fill="#5a5a5a"/>
<circle cx="328.4" cy="156.5" r="0.4" fill="#5a5a5a"/>
<circle cx="328.7" cy="143.3" r="0.4" fill="#6a6a6a"/>
<circle cx="334.3" cy="203.9" r="0.4" fill="#8a8a8a"/>
<circle cx="330.8" cy="202.6" r="0.4" fill="#4a4a4a"/>
<circle cx="328.7" cy="186.3" r="0.5" fill="#6a6a6a"/>
<circle cx="327.9" cy="196.0" r="0.4" fill="#6a6a6a"/>
<circle cx="332.9" cy="172.2" r="0.4" fill="#8a8a8a"/>
<circle cx="329.1" cy="193.5" r="0.4" fill="#6a6a6a"/>
<circle cx="332.5" cy="208.2" r="0.5" fill="#5a5a5a"/>
<circle cx="330.0" cy="187.8" r="0.4" fill="#6a6a6a"/>
<circle cx="327.8" cy="203.0" r="0.4" fill="#6a6a6a"/>
<circle cx="329.0" cy="182.3" r="0.5" fill="#5a5a5a"/>
<circle cx="331.3" cy="218.9" r="0.5" fill="#4a4a4a"/>
<circle cx="331.9" cy="161.9" r="0.5" fill="#6a6a6a"/>
<circle cx="330.1" cy="129.2" r="0.5" fill="#6a6a6a"/>
<circle cx="332.9" cy="120.5" r="0.4" fill="#8a8a8a"/>
<circle cx="334.0" cy="213.1" r="0.5" fill="#8a8a8a"/>
<circle cx="330.2" cy="151.7" r="0.5" fill="#5a5a5a"/>
<circle cx="331.1" cy="128.8" r="0.5" fill="#8a8a8a"/>
<circle cx="331.6" cy="151.0" r="0.5" fill="#4a4a4a"/>
<circle cx="328.6" cy="214.3" r="0.4" fill="#8a8a8a"/>
<circle cx="328.1" cy="192.4" r="0.5" fill="#4a4a4a"/>
<circle cx="333.1" cy="139.5" r="0.5" fill="#6a6a6a"/>
<circle cx="334.0" cy="158.4" r="0.5" fill="#5a5a5a"/>
<circle cx="333.5" cy="184.7" r="0.5" fill="#8a8a8a"/>
<circle cx="330.8" cy="221.3" r="0.4" fill="#5a5a5a"/>
<circle cx="330.0" cy="121.0" r="0.4" fill="#5a5a5a"/>
<circle cx="333.9" cy="168.2" r="0.5" fill="#6a6a6a"/>
<circle cx="332.0" cy="224.4" r="0.4" fill="#8a8a8a"/>
<circle cx="333.8" cy="214.7" r="0.4" fill="#8a8a8a"/>
<circle cx="330.9" cy="155.1" r="0.5" fill="#6a6a6a"/>
<circle cx="329.8" cy="190.1" r="0.4" fill="#8a8a8a"/>
<circle cx="333.7" cy="172.8" r="0.4" fill="#6a6a6a"/>
<circle cx="327.7" cy="208.5" r="0.5" fill="#4a4a4a"/>
<circle cx="330.4" cy="199.6" r="0.5" fill="#5a5a5a"/>
<line x1="337.6" y1="66.5" x2="337.6" y2="119.5" stroke="#b03030" stroke-width="0.8"/>
<line x1="339.6" y1="66.5" x2="339.6" y2="119.5" stroke="#c03030" stroke-width="0.9"/>
<line x1="339.6" y1="119.5" x2="339.6" y2="226.5" stroke="#a810a8" stroke-width="1.2"/>
<line x1="334" y1="119.5" x2="340" y2="119.5" stroke="#a810a8" stroke-width="1"/>
<rect x="280.3" y="66.5" width="148.2" height="160" fill="none" stroke="#7c7c7c" stroke-width="1" />
<rect x="326" y="66.5" width="8.7" height="8" fill="none" stroke="#b01010" stroke-width="0.85" />
<line x1="327" y1="67.5" x2="333.7" y2="73.5" stroke="#9a9a9a" stroke-width="0.8"/>
<line x1="333.7" y1="67.5" x2="327" y2="73.5" stroke="#9a9a9a" stroke-width="0.8"/>
<rect x="326" y="111.3" width="8.6" height="8.2" fill="none" stroke="#b01010" stroke-width="0.85" />
<line x1="327" y1="112.3" x2="333.6" y2="118.5" stroke="#9a9a9a" stroke-width="0.8"/>
<line x1="333.6" y1="112.3" x2="327" y2="118.5" stroke="#9a9a9a" stroke-width="0.8"/>
<polyline points="339,113 347.3,104 375,104" fill="none" stroke="#909090" stroke-width="0.9"/>
<text x="375.5" y="106.1" font-size="5.6" fill="#e40a0a" font-weight="bold" stroke="#e40a0a" stroke-width="0.1" textLength="45.0" lengthAdjust="spacingAndGlyphs">HBMWEHKNBM</text>
<polyline points="340.5,120 349.3,110.7 375,110.7" fill="none" stroke="#909090" stroke-width="0.9"/>
<text x="375.5" y="112.8" font-size="5.6" fill="#e40a0a" font-weight="bold" stroke="#e40a0a" stroke-width="0.1" textLength="34.30000000000001" lengthAdjust="spacingAndGlyphs">HBMWEHK</text>
<polyline points="337.5,134 353.5,117.5 375,117.5" fill="none" stroke="#909090" stroke-width="0.9"/>
<text x="375.5" y="119.6" font-size="5.6" fill="#e40a0a" font-weight="bold" stroke="#e40a0a" stroke-width="0.1" textLength="26.0" lengthAdjust="spacingAndGlyphs">HBMWE</text>
<polyline points="331.6,147 354.8,124.6 375,124.6" fill="none" stroke="#909090" stroke-width="0.9"/>
<text x="375.5" y="126.69999999999999" font-size="5.6" fill="#e40a0a" font-weight="bold" stroke="#e40a0a" stroke-width="0.1" textLength="21.30000000000001" lengthAdjust="spacingAndGlyphs">HBMW</text>
<polyline points="318.6,167.8 355.3,131.4 375,131.4" fill="none" stroke="#909090" stroke-width="0.9"/>
<text x="375.5" y="133.5" font-size="5.6" fill="#e40a0a" font-weight="bold" stroke="#e40a0a" stroke-width="0.1" textLength="17.69999999999999" lengthAdjust="spacingAndGlyphs">HBMW</text>
<circle cx="354.4" cy="233" r="5.6" fill="none" stroke="#8a8a8a" stroke-width="0.9"/>
<line x1="348.79999999999995" y1="233" x2="428.5" y2="233" stroke="#858585" stroke-width="0.9"/>
<text x="354.4" y="231.7" font-size="2.8" fill="#e00000" text-anchor="middle" >2</text>
<text x="354.4" y="236.6" font-size="2.8" fill="#e00000" text-anchor="middle" >502</text>
<text x="366" y="232.6" font-size="6.6" fill="#e00808" font-weight="bold" textLength="56.69999999999999" lengthAdjust="spacingAndGlyphs">HBMWEHKNBMH</text>
<text x="417.5" y="238.8" font-size="4.8" fill="#b80000" font-weight="bold" textLength="8" lengthAdjust="spacing">1:5</text>
<path d="M343.5 117.5 H347 V121 M345 121.5 L347.5 125.5" fill="none" stroke="#a0a0a0" stroke-width="0.6"/><circle cx="344.5" cy="125" r="0.8" fill="#d01010"/>
<rect x="436.3" y="66.5" width="45" height="160" fill="url(#conc)" stroke="#7a7a7a" stroke-width="0.8" />
<circle cx="437.9" cy="118.5" r="0.5" fill="#727272"/>
<circle cx="436.6" cy="216.3" r="0.6" fill="#727272"/>
<circle cx="442.8" cy="160.5" r="0.4" fill="#727272"/>
<circle cx="481.2" cy="94.3" r="0.6" fill="#727272"/>
<circle cx="464.5" cy="105.2" r="0.4" fill="#727272"/>
<circle cx="455.2" cy="223.0" r="0.4" fill="#727272"/>
<circle cx="472.5" cy="174.7" r="0.7" fill="#727272"/>
<circle cx="458.5" cy="222.4" r="0.6" fill="#727272"/>
<circle cx="467.4" cy="110.9" r="0.5" fill="#727272"/>
<circle cx="473.8" cy="145.8" r="0.4" fill="#727272"/>
<circle cx="472.0" cy="122.1" r="0.5" fill="#727272"/>
<circle cx="445.3" cy="195.7" r="0.4" fill="#727272"/>
<circle cx="443.6" cy="184.6" r="0.5" fill="#727272"/>
<circle cx="467.0" cy="211.7" r="0.6" fill="#727272"/>
<circle cx="480.0" cy="190.8" r="0.6" fill="#727272"/>
<circle cx="479.6" cy="96.4" r="0.6" fill="#727272"/>
<circle cx="476.4" cy="142.5" r="0.6" fill="#727272"/>
<circle cx="478.1" cy="131.0" r="0.6" fill="#727272"/>
<circle cx="452.6" cy="117.6" r="0.7" fill="#727272"/>
<circle cx="448.3" cy="99.1" r="0.7" fill="#727272"/>
<circle cx="458.9" cy="131.8" r="0.5" fill="#727272"/>
<circle cx="471.3" cy="116.9" r="0.5" fill="#727272"/>
<circle cx="448.9" cy="152.2" r="0.7" fill="#727272"/>
<circle cx="470.2" cy="110.6" r="0.6" fill="#727272"/>
<circle cx="468.6" cy="129.8" r="0.6" fill="#727272"/>
<circle cx="474.6" cy="85.9" r="0.7" fill="#727272"/>
<circle cx="471.0" cy="73.1" r="0.6" fill="#727272"/>
<circle cx="452.2" cy="216.9" r="0.6" fill="#727272"/>
<circle cx="480.4" cy="208.2" r="0.4" fill="#727272"/>
<circle cx="470.2" cy="175.0" r="0.7" fill="#727272"/>
<circle cx="473.8" cy="180.4" r="0.6" fill="#727272"/>
<circle cx="443.8" cy="94.7" r="0.4" fill="#727272"/>
<circle cx="471.2" cy="129.6" r="0.6" fill="#727272"/>
<circle cx="454.3" cy="146.5" r="0.6" fill="#727272"/>
<circle cx="452.0" cy="96.2" r="0.5" fill="#727272"/>
<circle cx="460.2" cy="149.9" r="0.6" fill="#727272"/>
<circle cx="442.3" cy="120.7" r="0.4" fill="#727272"/>
<circle cx="477.9" cy="77.2" r="0.4" fill="#727272"/>
<circle cx="474.6" cy="173.3" r="0.7" fill="#727272"/>
<circle cx="454.5" cy="158.3" r="0.6" fill="#727272"/>
<circle cx="471.6" cy="175.2" r="0.5" fill="#727272"/>
<circle cx="443.1" cy="173.9" r="0.5" fill="#727272"/>
<circle cx="458.8" cy="210.2" r="0.4" fill="#727272"/>
<circle cx="469.7" cy="197.9" r="0.7" fill="#727272"/>
<circle cx="475.8" cy="87.5" r="0.7" fill="#727272"/>
<circle cx="463.9" cy="110.5" r="0.4" fill="#727272"/>
<circle cx="471.0" cy="163.3" r="0.6" fill="#727272"/>
<circle cx="463.6" cy="211.1" r="0.6" fill="#727272"/>
<circle cx="440.5" cy="174.7" r="0.4" fill="#727272"/>
<circle cx="452.5" cy="178.4" r="0.4" fill="#727272"/>
<circle cx="441.8" cy="219.1" r="0.5" fill="#727272"/>
<circle cx="436.5" cy="167.2" r="0.5" fill="#727272"/>
<circle cx="456.4" cy="147.0" r="0.7" fill="#727272"/>
<circle cx="462.9" cy="161.8" r="0.4" fill="#727272"/>
<circle cx="438.1" cy="198.9" r="0.4" fill="#727272"/>
<circle cx="458.1" cy="113.6" r="0.6" fill="#727272"/>
<circle cx="479.7" cy="151.4" r="0.5" fill="#727272"/>
<circle cx="446.1" cy="193.5" r="0.5" fill="#727272"/>
<circle cx="449.0" cy="222.3" r="0.4" fill="#727272"/>
<circle cx="446.3" cy="94.2" r="0.6" fill="#727272"/>
<circle cx="455.4" cy="76.6" r="0.6" fill="#727272"/>
<circle cx="468.9" cy="160.1" r="0.7" fill="#727272"/>
<circle cx="453.9" cy="219.2" r="0.7" fill="#727272"/>
<circle cx="446.5" cy="205.3" r="0.4" fill="#727272"/>
<circle cx="472.5" cy="220.3" r="0.6" fill="#727272"/>
<circle cx="465.9" cy="106.8" r="0.7" fill="#727272"/>
<circle cx="462.2" cy="135.5" r="0.7" fill="#727272"/>
<circle cx="444.9" cy="165.0" r="0.4" fill="#727272"/>
<circle cx="454.4" cy="111.7" r="0.5" fill="#727272"/>
<circle cx="439.7" cy="210.1" r="0.4" fill="#727272"/>
<circle cx="456.0" cy="98.1" r="0.5" fill="#727272"/>
<circle cx="471.1" cy="98.7" r="0.6" fill="#727272"/>
<circle cx="469.9" cy="218.2" r="0.4" fill="#727272"/>
<circle cx="439.1" cy="99.4" r="0.4" fill="#727272"/>
<circle cx="473.9" cy="169.2" r="0.6" fill="#727272"/>
<circle cx="461.4" cy="166.9" r="0.6" fill="#727272"/>
<circle cx="480.9" cy="115.4" r="0.4" fill="#727272"/>
<circle cx="469.6" cy="177.1" r="0.7" fill="#727272"/>
<circle cx="476.8" cy="195.2" r="0.7" fill="#727272"/>
<circle cx="471.1" cy="121.4" r="0.5" fill="#727272"/>
<circle cx="452.7" cy="208.0" r="0.7" fill="#727272"/>
<circle cx="480.9" cy="212.4" r="0.6" fill="#727272"/>
<circle cx="457.7" cy="198.0" r="0.5" fill="#727272"/>
<circle cx="474.5" cy="151.0" r="0.6" fill="#727272"/>
<circle cx="459.2" cy="100.0" r="0.6" fill="#727272"/>
<circle cx="465.8" cy="216.5" r="0.5" fill="#727272"/>
<circle cx="468.3" cy="217.8" r="0.7" fill="#727272"/>
<circle cx="471.1" cy="182.6" r="0.5" fill="#727272"/>
<circle cx="472.8" cy="201.1" r="0.5" fill="#727272"/>
<circle cx="442.5" cy="84.3" r="0.7" fill="#727272"/>
<circle cx="437.5" cy="196.6" r="0.4" fill="#727272"/>
<circle cx="457.2" cy="73.4" r="0.4" fill="#727272"/>
<circle cx="474.9" cy="120.7" r="0.7" fill="#727272"/>
<circle cx="458.1" cy="168.8" r="0.5" fill="#727272"/>
<circle cx="436.6" cy="99.2" r="0.6" fill="#727272"/>
<circle cx="453.5" cy="83.1" r="0.5" fill="#727272"/>
<circle cx="478.8" cy="136.9" r="0.7" fill="#727272"/>
<circle cx="470.6" cy="157.7" r="0.4" fill="#727272"/>
<circle cx="475.1" cy="93.5" r="0.5" fill="#727272"/>
<circle cx="468.6" cy="141.6" r="0.7" fill="#727272"/>
<circle cx="463.6" cy="85.4" r="0.7" fill="#727272"/>
<circle cx="463.3" cy="76.5" r="0.5" fill="#727272"/>
<circle cx="472.3" cy="208.8" r="0.4" fill="#727272"/>
<circle cx="454.0" cy="192.6" r="0.5" fill="#727272"/>
<circle cx="464.8" cy="185.2" r="0.4" fill="#727272"/>
<circle cx="447.2" cy="211.8" r="0.5" fill="#727272"/>
<circle cx="472.4" cy="72.6" r="0.4" fill="#727272"/>
<circle cx="454.4" cy="217.1" r="0.5" fill="#727272"/>
<circle cx="471.2" cy="73.6" r="0.7" fill="#727272"/>
<circle cx="448.1" cy="91.0" r="0.4" fill="#727272"/>
<circle cx="457.8" cy="219.5" r="0.4" fill="#727272"/>
<circle cx="444.7" cy="195.6" r="0.5" fill="#727272"/>
<circle cx="464.0" cy="118.2" r="0.7" fill="#727272"/>
<circle cx="477.5" cy="66.9" r="0.4" fill="#727272"/>
<circle cx="461.3" cy="197.9" r="0.4" fill="#727272"/>
<circle cx="468.1" cy="172.3" r="0.6" fill="#727272"/>
<circle cx="456.9" cy="173.8" r="0.5" fill="#727272"/>
<circle cx="437.4" cy="199.2" r="0.7" fill="#727272"/>
<circle cx="445.7" cy="179.8" r="0.5" fill="#727272"/>
<circle cx="466.5" cy="223.8" r="0.4" fill="#727272"/>
<circle cx="460.9" cy="122.9" r="0.4" fill="#727272"/>
<circle cx="440.3" cy="104.7" r="0.4" fill="#727272"/>
<circle cx="440.3" cy="110.3" r="0.6" fill="#727272"/>
<circle cx="470.6" cy="90.2" r="0.6" fill="#727272"/>
<circle cx="470.9" cy="67.6" r="0.4" fill="#727272"/>
<circle cx="438.3" cy="175.8" r="0.5" fill="#727272"/>
<circle cx="459.7" cy="139.4" r="0.7" fill="#727272"/>
<circle cx="477.9" cy="158.4" r="0.5" fill="#727272"/>
<circle cx="477.5" cy="183.7" r="0.4" fill="#727272"/>
<circle cx="477.4" cy="200.5" r="0.4" fill="#727272"/>
<circle cx="466.5" cy="88.1" r="0.7" fill="#727272"/>
<circle cx="472.4" cy="75.3" r="0.6" fill="#727272"/>
<circle cx="456.2" cy="179.5" r="0.6" fill="#727272"/>
<circle cx="471.7" cy="201.9" r="0.4" fill="#727272"/>
<circle cx="450.9" cy="81.7" r="0.7" fill="#727272"/>
<circle cx="443.6" cy="218.0" r="0.7" fill="#727272"/>
<circle cx="470.6" cy="200.4" r="0.6" fill="#727272"/>
<circle cx="448.6" cy="106.5" r="0.7" fill="#727272"/>
<circle cx="460.5" cy="121.0" r="0.6" fill="#727272"/>
<circle cx="477.7" cy="119.1" r="0.5" fill="#727272"/>
<circle cx="476.3" cy="193.6" r="0.5" fill="#727272"/>
<circle cx="441.0" cy="198.6" r="0.6" fill="#727272"/>
<circle cx="455.4" cy="120.4" r="0.4" fill="#727272"/>
<circle cx="460.5" cy="221.0" r="0.5" fill="#727272"/>
<circle cx="445.8" cy="75.0" r="0.5" fill="#727272"/>
<circle cx="478.5" cy="131.7" r="0.4" fill="#727272"/>
<circle cx="465.5" cy="101.4" r="0.4" fill="#727272"/>
<circle cx="468.4" cy="135.5" r="0.4" fill="#727272"/>
<circle cx="480.8" cy="94.7" r="0.7" fill="#727272"/>
<circle cx="463.9" cy="93.1" r="0.6" fill="#727272"/>
<circle cx="470.2" cy="106.3" r="0.6" fill="#727272"/>
<circle cx="479.5" cy="81.2" r="0.5" fill="#727272"/>
<circle cx="465.2" cy="165.4" r="0.5" fill="#727272"/>
<circle cx="465.8" cy="162.2" r="0.7" fill="#727272"/>
<circle cx="450.0" cy="76.7" r="0.4" fill="#727272"/>
<circle cx="460.4" cy="78.3" r="0.4" fill="#727272"/>
<circle cx="442.7" cy="84.6" r="0.7" fill="#727272"/>
<circle cx="465.5" cy="148.1" r="0.6" fill="#727272"/>
<circle cx="477.7" cy="138.5" r="0.4" fill="#727272"/>
<circle cx="447.8" cy="129.7" r="0.5" fill="#727272"/>
<circle cx="456.3" cy="183.0" r="0.4" fill="#727272"/>
<circle cx="475.1" cy="140.2" r="0.6" fill="#727272"/>
<circle cx="473.8" cy="71.4" r="0.5" fill="#727272"/>
<circle cx="441.1" cy="99.9" r="0.6" fill="#727272"/>
<circle cx="466.5" cy="110.9" r="0.4" fill="#727272"/>
<circle cx="474.4" cy="78.1" r="0.4" fill="#727272"/>
<circle cx="443.4" cy="172.0" r="0.6" fill="#727272"/>
<circle cx="466.1" cy="95.4" r="0.5" fill="#727272"/>
<circle cx="458.0" cy="200.4" r="0.4" fill="#727272"/>
<circle cx="453.5" cy="170.9" r="0.5" fill="#727272"/>
<circle cx="439.1" cy="113.8" r="0.6" fill="#727272"/>
<circle cx="474.7" cy="87.3" r="0.6" fill="#727272"/>
<circle cx="452.7" cy="182.1" r="0.5" fill="#727272"/>
<circle cx="452.9" cy="184.4" r="0.6" fill="#727272"/>
<circle cx="452.8" cy="150.2" r="0.4" fill="#727272"/>
<circle cx="475.6" cy="212.0" r="0.5" fill="#727272"/>
<circle cx="449.1" cy="127.4" r="0.4" fill="#727272"/>
<circle cx="446.4" cy="97.5" r="0.5" fill="#727272"/>
<circle cx="470.6" cy="203.0" r="0.5" fill="#727272"/>
<circle cx="465.2" cy="142.0" r="0.4" fill="#727272"/>
<circle cx="438.6" cy="172.7" r="0.6" fill="#727272"/>
<circle cx="446.9" cy="71.2" r="0.7" fill="#727272"/>
<circle cx="458.2" cy="84.1" r="0.7" fill="#727272"/>
<circle cx="440.5" cy="85.3" r="0.7" fill="#727272"/>
<circle cx="477.8" cy="212.1" r="0.7" fill="#727272"/>
<circle cx="456.1" cy="85.4" r="0.4" fill="#727272"/>
<circle cx="448.3" cy="137.5" r="0.5" fill="#727272"/>
<circle cx="478.4" cy="155.3" r="0.4" fill="#727272"/>
<circle cx="459.2" cy="143.9" r="0.5" fill="#727272"/>
<circle cx="461.6" cy="205.7" r="0.7" fill="#727272"/>
<circle cx="441.3" cy="217.5" r="0.4" fill="#727272"/>
<circle cx="447.1" cy="93.8" r="0.6" fill="#727272"/>
<circle cx="445.9" cy="79.8" r="0.6" fill="#727272"/>
<circle cx="457.4" cy="217.9" r="0.5" fill="#727272"/>
<circle cx="439.6" cy="139.0" r="0.6" fill="#727272"/>
<circle cx="440.7" cy="111.4" r="0.6" fill="#727272"/>
<circle cx="439.4" cy="179.1" r="0.7" fill="#727272"/>
<circle cx="458.0" cy="95.3" r="0.4" fill="#727272"/>
<circle cx="464.5" cy="196.3" r="0.4" fill="#727272"/>
<circle cx="465.3" cy="176.4" r="0.4" fill="#727272"/>
<circle cx="460.5" cy="104.0" r="0.7" fill="#727272"/>
<circle cx="466.2" cy="88.8" r="0.6" fill="#727272"/>
<circle cx="442.8" cy="195.1" r="0.6" fill="#727272"/>
<circle cx="469.6" cy="203.7" r="0.6" fill="#727272"/>
<circle cx="465.8" cy="170.6" r="0.5" fill="#727272"/>
<circle cx="437.0" cy="139.9" r="0.4" fill="#727272"/>
<circle cx="456.5" cy="202.5" r="0.6" fill="#727272"/>
<circle cx="456.1" cy="89.0" r="0.5" fill="#727272"/>
<circle cx="450.0" cy="116.7" r="0.5" fill="#727272"/>
<circle cx="478.6" cy="130.8" r="0.5" fill="#727272"/>
<circle cx="436.9" cy="218.2" r="0.5" fill="#727272"/>
<circle cx="439.3" cy="126.3" r="0.7" fill="#727272"/>
<circle cx="466.6" cy="100.5" r="0.5" fill="#727272"/>
<circle cx="445.0" cy="141.8" r="0.6" fill="#727272"/>
<circle cx="481.3" cy="139.6" r="0.5" fill="#727272"/>
<circle cx="480.2" cy="187.4" r="0.4" fill="#727272"/>
<circle cx="454.6" cy="121.4" r="0.4" fill="#727272"/>
<circle cx="461.9" cy="189.7" r="0.5" fill="#727272"/>
<circle cx="473.6" cy="66.5" r="0.6" fill="#727272"/>
<circle cx="463.6" cy="142.5" r="0.7" fill="#727272"/>
<circle cx="442.5" cy="105.0" r="0.4" fill="#727272"/>
<circle cx="448.6" cy="133.1" r="0.5" fill="#727272"/>
<circle cx="481.2" cy="88.1" r="0.6" fill="#727272"/>
<circle cx="476.2" cy="75.6" r="0.5" fill="#727272"/>
<circle cx="455.3" cy="79.3" r="0.7" fill="#727272"/>
<circle cx="471.9" cy="107.0" r="0.5" fill="#727272"/>
<circle cx="475.0" cy="219.6" r="0.6" fill="#727272"/>
<circle cx="479.8" cy="180.4" r="0.4" fill="#727272"/>
<circle cx="438.6" cy="212.9" r="0.4" fill="#727272"/>
<circle cx="479.8" cy="211.1" r="0.4" fill="#727272"/>
<circle cx="449.3" cy="221.2" r="0.5" fill="#727272"/>
<circle cx="455.2" cy="151.2" r="0.6" fill="#727272"/>
<circle cx="472.6" cy="171.0" r="0.4" fill="#727272"/>
<circle cx="456.4" cy="146.4" r="0.6" fill="#727272"/>
<circle cx="476.7" cy="220.5" r="0.5" fill="#727272"/>
<circle cx="455.9" cy="161.2" r="0.6" fill="#727272"/>
<circle cx="462.0" cy="95.5" r="0.6" fill="#727272"/>
<circle cx="465.3" cy="132.4" r="0.6" fill="#727272"/>
<circle cx="466.8" cy="78.2" r="0.4" fill="#727272"/>
<circle cx="464.4" cy="142.0" r="0.6" fill="#727272"/>
<circle cx="472.3" cy="68.0" r="0.7" fill="#727272"/>
<circle cx="451.6" cy="188.2" r="0.5" fill="#727272"/>
<circle cx="457.2" cy="118.4" r="0.5" fill="#727272"/>
<circle cx="480.3" cy="80.7" r="0.5" fill="#727272"/>
<circle cx="460.7" cy="130.7" r="0.5" fill="#727272"/>
<circle cx="476.8" cy="103.7" r="0.6" fill="#727272"/>
<circle cx="453.4" cy="145.6" r="0.6" fill="#727272"/>
<circle cx="442.0" cy="102.1" r="0.5" fill="#727272"/>
<circle cx="475.9" cy="84.6" r="0.5" fill="#727272"/>
<circle cx="476.1" cy="165.1" r="0.4" fill="#727272"/>
<circle cx="457.4" cy="139.2" r="0.6" fill="#727272"/>
<circle cx="462.3" cy="123.4" r="0.7" fill="#727272"/>
<circle cx="450.5" cy="196.3" r="0.4" fill="#727272"/>
<circle cx="466.7" cy="191.5" r="0.7" fill="#727272"/>
<circle cx="452.9" cy="220.5" r="0.6" fill="#727272"/>
<circle cx="473.9" cy="169.2" r="0.5" fill="#727272"/>
<circle cx="468.0" cy="221.1" r="0.5" fill="#727272"/>
<circle cx="452.9" cy="202.5" r="0.6" fill="#727272"/>
<circle cx="443.7" cy="76.9" r="0.7" fill="#727272"/>
<circle cx="474.5" cy="206.5" r="0.4" fill="#727272"/>
<circle cx="445.2" cy="68.9" r="0.7" fill="#727272"/>
<circle cx="469.0" cy="110.1" r="0.4" fill="#727272"/>
<circle cx="472.2" cy="200.4" r="0.4" fill="#727272"/>
<circle cx="467.6" cy="67.1" r="0.5" fill="#727272"/>
<circle cx="444.2" cy="210.6" r="0.5" fill="#727272"/>
<circle cx="437.2" cy="84.8" r="0.4" fill="#727272"/>
<circle cx="479.9" cy="90.3" r="0.6" fill="#727272"/>
<circle cx="439.6" cy="122.3" r="0.6" fill="#727272"/>
<circle cx="455.1" cy="143.1" r="0.6" fill="#727272"/>
<circle cx="451.3" cy="214.9" r="0.6" fill="#727272"/>
<circle cx="443.6" cy="81.1" r="0.4" fill="#727272"/>
<circle cx="467.6" cy="108.6" r="0.6" fill="#727272"/>
<circle cx="451.7" cy="145.2" r="0.5" fill="#727272"/>
<circle cx="463.5" cy="224.8" r="0.4" fill="#727272"/>
<circle cx="470.1" cy="200.7" r="0.7" fill="#727272"/>
<circle cx="453.6" cy="181.2" r="0.5" fill="#727272"/>
<circle cx="450.3" cy="78.0" r="0.7" fill="#727272"/>
<circle cx="440.5" cy="160.3" r="0.5" fill="#727272"/>
<circle cx="472.0" cy="138.8" r="0.7" fill="#727272"/>
<circle cx="471.9" cy="103.5" r="0.4" fill="#727272"/>
<circle cx="473.4" cy="142.0" r="0.7" fill="#727272"/>
<circle cx="442.5" cy="97.3" r="0.5" fill="#727272"/>
<circle cx="441.2" cy="167.9" r="0.5" fill="#727272"/>
<circle cx="470.1" cy="146.7" r="0.6" fill="#727272"/>
<circle cx="468.9" cy="71.4" r="0.4" fill="#727272"/>
<circle cx="446.2" cy="113.0" r="0.7" fill="#727272"/>
<circle cx="464.0" cy="210.8" r="0.5" fill="#727272"/>
<circle cx="480.7" cy="225.8" r="0.6" fill="#727272"/>
<circle cx="442.2" cy="76.4" r="0.7" fill="#727272"/>
<circle cx="471.0" cy="198.8" r="0.6" fill="#727272"/>
<circle cx="454.1" cy="150.2" r="0.6" fill="#727272"/>
<circle cx="438.8" cy="164.0" r="0.4" fill="#727272"/>
<circle cx="449.5" cy="118.5" r="0.5" fill="#727272"/>
<circle cx="443.1" cy="215.6" r="0.5" fill="#727272"/>
<circle cx="457.1" cy="98.1" r="0.4" fill="#727272"/>
<circle cx="471.6" cy="181.4" r="0.6" fill="#727272"/>
<circle cx="467.2" cy="142.7" r="0.6" fill="#727272"/>
<circle cx="471.2" cy="83.5" r="0.4" fill="#727272"/>
<circle cx="464.4" cy="136.5" r="0.4" fill="#727272"/>
<circle cx="447.7" cy="173.5" r="0.5" fill="#727272"/>
<circle cx="456.5" cy="202.9" r="0.7" fill="#727272"/>
<circle cx="471.0" cy="126.0" r="0.7" fill="#727272"/>
<circle cx="471.4" cy="182.5" r="0.6" fill="#727272"/>
<circle cx="464.1" cy="83.3" r="0.7" fill="#727272"/>
<circle cx="440.3" cy="214.1" r="0.5" fill="#727272"/>
<circle cx="438.0" cy="223.5" r="0.5" fill="#727272"/>
<circle cx="439.1" cy="175.9" r="0.4" fill="#727272"/>
<circle cx="449.8" cy="77.5" r="0.6" fill="#727272"/>
<circle cx="456.0" cy="80.2" r="0.7" fill="#727272"/>
<circle cx="467.7" cy="181.0" r="0.4" fill="#727272"/>
<circle cx="437.7" cy="212.1" r="0.5" fill="#727272"/>
<circle cx="460.2" cy="178.5" r="0.6" fill="#727272"/>
<circle cx="443.7" cy="151.6" r="0.7" fill="#727272"/>
<circle cx="443.9" cy="94.3" r="0.7" fill="#727272"/>
<circle cx="468.2" cy="124.5" r="0.5" fill="#727272"/>
<circle cx="456.9" cy="154.8" r="0.4" fill="#727272"/>
<circle cx="448.0" cy="185.0" r="0.7" fill="#727272"/>
<circle cx="457.6" cy="219.5" r="0.6" fill="#727272"/>
<circle cx="470.4" cy="129.4" r="0.5" fill="#727272"/>
<circle cx="469.3" cy="87.2" r="0.5" fill="#727272"/>
<circle cx="477.5" cy="145.1" r="0.6" fill="#727272"/>
<circle cx="472.4" cy="70.9" r="0.7" fill="#727272"/>
<circle cx="472.9" cy="177.8" r="0.6" fill="#727272"/>
<circle cx="450.4" cy="183.2" r="0.6" fill="#727272"/>
<circle cx="467.0" cy="172.0" r="0.4" fill="#727272"/>
<circle cx="473.3" cy="204.6" r="0.6" fill="#727272"/>
<circle cx="436.8" cy="188.6" r="0.4" fill="#727272"/>
<circle cx="476.8" cy="218.8" r="0.6" fill="#727272"/>
<circle cx="446.6" cy="117.3" r="0.6" fill="#727272"/>
<circle cx="479.0" cy="114.8" r="0.6" fill="#727272"/>
<circle cx="454.0" cy="111.9" r="0.5" fill="#727272"/>
<circle cx="436.9" cy="174.6" r="0.5" fill="#727272"/>
<circle cx="473.1" cy="169.6" r="0.4" fill="#727272"/>
<circle cx="480.9" cy="183.0" r="0.5" fill="#727272"/>
<circle cx="472.9" cy="107.0" r="0.6" fill="#727272"/>
<circle cx="453.4" cy="200.9" r="0.5" fill="#727272"/>
<circle cx="447.1" cy="180.6" r="0.4" fill="#727272"/>
<circle cx="451.8" cy="201.5" r="0.6" fill="#727272"/>
<circle cx="475.8" cy="88.8" r="0.4" fill="#727272"/>
<circle cx="472.0" cy="201.3" r="0.7" fill="#727272"/>
<circle cx="478.9" cy="141.7" r="0.7" fill="#727272"/>
<circle cx="471.5" cy="205.7" r="0.5" fill="#727272"/>
<circle cx="469.1" cy="124.2" r="0.4" fill="#727272"/>
<circle cx="440.8" cy="118.8" r="0.4" fill="#727272"/>
<circle cx="476.9" cy="70.6" r="0.6" fill="#727272"/>
<circle cx="439.5" cy="77.3" r="0.4" fill="#727272"/>
<circle cx="445.2" cy="140.4" r="0.7" fill="#727272"/>
<circle cx="450.3" cy="142.8" r="0.7" fill="#727272"/>
<circle cx="450.2" cy="167.7" r="0.7" fill="#727272"/>
<circle cx="450.6" cy="121.7" r="0.6" fill="#727272"/>
<circle cx="469.6" cy="122.9" r="0.4" fill="#727272"/>
<circle cx="463.3" cy="226.1" r="0.4" fill="#727272"/>
<circle cx="458.1" cy="133.1" r="0.5" fill="#727272"/>
<circle cx="445.7" cy="124.5" r="0.6" fill="#727272"/>
<circle cx="478.0" cy="171.9" r="0.4" fill="#727272"/>
<circle cx="465.8" cy="157.4" r="0.7" fill="#727272"/>
<circle cx="462.9" cy="135.7" r="0.5" fill="#727272"/>
<circle cx="455.6" cy="81.3" r="0.6" fill="#727272"/>
<circle cx="473.2" cy="192.7" r="0.6" fill="#727272"/>
<circle cx="440.9" cy="193.5" r="0.4" fill="#727272"/>
<circle cx="446.2" cy="207.8" r="0.7" fill="#727272"/>
<circle cx="443.4" cy="168.4" r="0.4" fill="#727272"/>
<circle cx="478.1" cy="98.8" r="0.6" fill="#727272"/>
<circle cx="480.9" cy="149.0" r="0.5" fill="#727272"/>
<circle cx="458.4" cy="186.8" r="0.4" fill="#727272"/>
<circle cx="466.4" cy="89.4" r="0.7" fill="#727272"/>
<circle cx="481.3" cy="156.3" r="0.5" fill="#727272"/>
<circle cx="444.6" cy="212.1" r="0.4" fill="#727272"/>
<circle cx="475.4" cy="124.4" r="0.4" fill="#727272"/>
<circle cx="445.6" cy="70.2" r="0.5" fill="#727272"/>
<circle cx="459.3" cy="215.7" r="0.5" fill="#727272"/>
<circle cx="442.8" cy="167.5" r="0.4" fill="#727272"/>
<circle cx="455.4" cy="162.8" r="0.6" fill="#727272"/>
<circle cx="463.5" cy="103.9" r="0.5" fill="#727272"/>
<circle cx="459.4" cy="141.4" r="0.4" fill="#727272"/>
<circle cx="471.1" cy="194.9" r="0.5" fill="#727272"/>
<circle cx="470.0" cy="104.4" r="0.6" fill="#727272"/>
<circle cx="446.7" cy="198.0" r="0.5" fill="#727272"/>
<circle cx="463.4" cy="211.2" r="0.5" fill="#727272"/>
<circle cx="480.2" cy="181.9" r="0.4" fill="#727272"/>
<circle cx="470.0" cy="180.4" r="0.5" fill="#727272"/>
<circle cx="448.6" cy="200.6" r="0.4" fill="#727272"/>
<circle cx="458.3" cy="66.8" r="0.4" fill="#727272"/>
<circle cx="475.4" cy="210.1" r="0.7" fill="#727272"/>
<circle cx="442.7" cy="140.1" r="0.5" fill="#727272"/>
<circle cx="481.2" cy="120.3" r="0.5" fill="#727272"/>
<circle cx="481.1" cy="102.9" r="0.7" fill="#727272"/>
<circle cx="452.3" cy="136.3" r="0.6" fill="#727272"/>
<circle cx="443.6" cy="101.5" r="0.4" fill="#727272"/>
<circle cx="442.7" cy="160.9" r="0.4" fill="#727272"/>
<circle cx="459.0" cy="95.9" r="0.7" fill="#727272"/>
<circle cx="474.1" cy="189.5" r="0.7" fill="#727272"/>
<circle cx="457.6" cy="110.8" r="0.5" fill="#727272"/>
<circle cx="457.5" cy="147.9" r="0.5" fill="#727272"/>
<circle cx="446.8" cy="122.8" r="0.7" fill="#727272"/>
<circle cx="479.8" cy="131.0" r="0.6" fill="#727272"/>
<circle cx="469.3" cy="120.2" r="0.7" fill="#727272"/>
<circle cx="465.3" cy="140.9" r="0.4" fill="#727272"/>
<circle cx="438.2" cy="192.0" r="0.7" fill="#727272"/>
<circle cx="452.3" cy="167.3" r="0.7" fill="#727272"/>
<circle cx="479.1" cy="165.7" r="0.5" fill="#727272"/>
<circle cx="461.2" cy="172.5" r="0.4" fill="#727272"/>
<circle cx="479.0" cy="89.8" r="0.6" fill="#727272"/>
<circle cx="466.8" cy="130.3" r="0.6" fill="#727272"/>
<circle cx="462.9" cy="174.9" r="0.6" fill="#727272"/>
<circle cx="472.3" cy="91.5" r="0.7" fill="#727272"/>
<circle cx="465.6" cy="112.2" r="0.5" fill="#727272"/>
<circle cx="476.7" cy="194.6" r="0.4" fill="#727272"/>
<circle cx="464.0" cy="195.5" r="0.7" fill="#727272"/>
<circle cx="458.6" cy="124.7" r="0.4" fill="#727272"/>
<circle cx="452.0" cy="151.6" r="0.6" fill="#727272"/>
<circle cx="465.1" cy="142.8" r="0.6" fill="#727272"/>
<circle cx="447.8" cy="164.1" r="0.6" fill="#727272"/>
<circle cx="437.1" cy="194.5" r="0.4" fill="#727272"/>
<circle cx="452.6" cy="212.6" r="0.4" fill="#727272"/>
<circle cx="448.7" cy="119.7" r="0.7" fill="#727272"/>
<circle cx="443.5" cy="176.9" r="0.4" fill="#727272"/>
<circle cx="439.7" cy="100.1" r="0.5" fill="#727272"/>
<circle cx="442.9" cy="103.0" r="0.4" fill="#727272"/>
<circle cx="455.9" cy="86.0" r="0.4" fill="#727272"/>
<circle cx="478.9" cy="154.6" r="0.4" fill="#727272"/>
<circle cx="471.1" cy="90.3" r="0.5" fill="#727272"/>
<circle cx="438.1" cy="146.0" r="0.7" fill="#727272"/>
<circle cx="455.3" cy="167.2" r="0.5" fill="#727272"/>
<circle cx="463.2" cy="222.8" r="0.4" fill="#727272"/>
<circle cx="440.1" cy="92.2" r="0.4" fill="#727272"/>
<circle cx="437.3" cy="179.8" r="0.5" fill="#727272"/>
<circle cx="441.4" cy="92.4" r="0.5" fill="#727272"/>
<circle cx="445.2" cy="123.8" r="0.5" fill="#727272"/>
<circle cx="452.5" cy="223.1" r="0.7" fill="#727272"/>
<circle cx="450.9" cy="131.9" r="0.7" fill="#727272"/>
<circle cx="446.8" cy="222.4" r="0.5" fill="#727272"/>
<circle cx="443.8" cy="209.4" r="0.6" fill="#727272"/>
<circle cx="464.5" cy="171.3" r="0.7" fill="#727272"/>
<circle cx="460.2" cy="175.4" r="0.4" fill="#727272"/>
<circle cx="471.5" cy="154.1" r="0.4" fill="#727272"/>
<circle cx="456.6" cy="207.5" r="0.6" fill="#727272"/>
<circle cx="466.0" cy="148.3" r="0.5" fill="#727272"/>
<circle cx="475.0" cy="212.9" r="0.5" fill="#727272"/>
<circle cx="458.7" cy="176.6" r="0.5" fill="#727272"/>
<circle cx="467.4" cy="67.2" r="0.4" fill="#727272"/>
<circle cx="474.3" cy="124.4" r="0.5" fill="#727272"/>
<circle cx="461.9" cy="183.0" r="0.7" fill="#727272"/>
<circle cx="451.3" cy="143.2" r="0.5" fill="#727272"/>
<circle cx="450.5" cy="126.8" r="0.6" fill="#727272"/>
<circle cx="481.0" cy="100.3" r="0.4" fill="#727272"/>
<circle cx="480.9" cy="176.6" r="0.6" fill="#727272"/>
<circle cx="465.2" cy="156.1" r="0.6" fill="#727272"/>
<circle cx="443.4" cy="203.7" r="0.7" fill="#727272"/>
<circle cx="479.1" cy="203.9" r="0.4" fill="#727272"/>
<circle cx="458.4" cy="199.1" r="0.4" fill="#727272"/>
<circle cx="443.0" cy="188.3" r="0.7" fill="#727272"/>
<circle cx="477.1" cy="160.3" r="0.7" fill="#727272"/>
<circle cx="468.0" cy="67.2" r="0.5" fill="#727272"/>
<circle cx="440.9" cy="110.8" r="0.4" fill="#727272"/>
<circle cx="463.6" cy="136.2" r="0.6" fill="#727272"/>
<circle cx="440.0" cy="138.3" r="0.6" fill="#727272"/>
<circle cx="440.7" cy="145.5" r="0.6" fill="#727272"/>
<circle cx="446.0" cy="171.2" r="0.6" fill="#727272"/>
<circle cx="471.5" cy="99.4" r="0.7" fill="#727272"/>
<circle cx="470.9" cy="177.3" r="0.6" fill="#727272"/>
<circle cx="456.8" cy="204.7" r="0.7" fill="#727272"/>
<circle cx="467.1" cy="178.1" r="0.4" fill="#727272"/>
<circle cx="438.4" cy="200.3" r="0.6" fill="#727272"/>
<circle cx="438.7" cy="224.6" r="0.5" fill="#727272"/>
<circle cx="452.1" cy="202.7" r="0.5" fill="#727272"/>
<circle cx="448.0" cy="147.5" r="0.7" fill="#727272"/>
<circle cx="457.8" cy="80.4" r="0.4" fill="#727272"/>
<circle cx="446.0" cy="162.6" r="0.4" fill="#727272"/>
<circle cx="469.1" cy="121.4" r="0.5" fill="#727272"/>
<circle cx="479.4" cy="169.7" r="0.4" fill="#727272"/>
<circle cx="465.3" cy="200.6" r="0.6" fill="#727272"/>
<circle cx="451.4" cy="92.7" r="0.5" fill="#727272"/>
<circle cx="457.6" cy="192.2" r="0.6" fill="#727272"/>
<circle cx="448.0" cy="76.2" r="0.5" fill="#727272"/>
<circle cx="477.1" cy="164.6" r="0.4" fill="#727272"/>
<circle cx="464.7" cy="151.8" r="0.7" fill="#727272"/>
<circle cx="445.9" cy="133.1" r="0.7" fill="#727272"/>
<circle cx="472.6" cy="175.6" r="0.7" fill="#727272"/>
<circle cx="446.7" cy="140.6" r="0.5" fill="#727272"/>
<circle cx="477.8" cy="92.2" r="0.4" fill="#727272"/>
<circle cx="461.2" cy="131.3" r="0.5" fill="#727272"/>
<circle cx="477.5" cy="210.3" r="0.7" fill="#727272"/>
<circle cx="458.5" cy="109.4" r="0.6" fill="#727272"/>
<circle cx="440.8" cy="146.1" r="0.6" fill="#727272"/>
<circle cx="443.6" cy="208.3" r="0.6" fill="#727272"/>
<circle cx="453.4" cy="84.5" r="0.5" fill="#727272"/>
<circle cx="458.7" cy="111.7" r="0.6" fill="#727272"/>
<circle cx="453.6" cy="154.1" r="0.6" fill="#727272"/>
<circle cx="471.0" cy="117.4" r="0.7" fill="#727272"/>
<circle cx="441.9" cy="112.0" r="0.6" fill="#727272"/>
<circle cx="461.6" cy="218.2" r="0.6" fill="#727272"/>
<circle cx="457.9" cy="215.2" r="0.5" fill="#727272"/>
<circle cx="460.7" cy="204.5" r="0.5" fill="#727272"/>
<circle cx="452.5" cy="163.3" r="0.6" fill="#727272"/>
<circle cx="449.5" cy="180.1" r="0.4" fill="#727272"/>
<circle cx="455.2" cy="100.0" r="0.4" fill="#727272"/>
<circle cx="445.6" cy="147.7" r="0.4" fill="#727272"/>
<circle cx="470.2" cy="104.5" r="0.4" fill="#727272"/>
<circle cx="467.1" cy="214.8" r="0.5" fill="#727272"/>
<circle cx="466.8" cy="180.6" r="0.4" fill="#727272"/>
<circle cx="448.3" cy="222.5" r="0.4" fill="#727272"/>
<circle cx="479.9" cy="116.6" r="0.4" fill="#727272"/>
<circle cx="459.5" cy="122.5" r="0.5" fill="#727272"/>
<circle cx="436.9" cy="98.9" r="0.5" fill="#727272"/>
<circle cx="477.1" cy="102.4" r="0.5" fill="#727272"/>
<circle cx="478.2" cy="109.3" r="0.6" fill="#727272"/>
<circle cx="466.7" cy="128.0" r="0.4" fill="#727272"/>
<circle cx="439.3" cy="199.4" r="0.7" fill="#727272"/>
<circle cx="441.3" cy="185.9" r="0.6" fill="#727272"/>
<circle cx="459.4" cy="135.0" r="0.4" fill="#727272"/>
<circle cx="479.2" cy="225.5" r="0.7" fill="#727272"/>
<circle cx="464.3" cy="171.0" r="0.5" fill="#727272"/>
<circle cx="453.0" cy="125.0" r="0.5" fill="#727272"/>
<line x1="481.6" y1="66.5" x2="481.6" y2="226.5" stroke="#189498" stroke-width="1"/>
<rect x="490.3" y="66.5" width="5.4" height="160" fill="#6e6e6e" stroke="none" stroke-width="1" />
<line x1="489.6" y1="66.5" x2="489.6" y2="226.5" stroke="#a810a8" stroke-width="1.3"/>
<line x1="496.2" y1="66.5" x2="496.2" y2="226.5" stroke="#d000a0" stroke-width="1.3"/>
<rect x="436.3" y="66.5" width="149.3" height="160" fill="none" stroke="#7c7c7c" stroke-width="1" />
<rect x="481.6" y="100.7" width="8.3" height="8.8" fill="none" stroke="#b01010" stroke-width="0.85" />
<line x1="482.6" y1="101.7" x2="488.90000000000003" y2="108.5" stroke="#9a9a9a" stroke-width="0.8"/>
<line x1="488.90000000000003" y1="101.7" x2="482.6" y2="108.5" stroke="#9a9a9a" stroke-width="0.8"/>
<rect x="481.7" y="172.5" width="8" height="8.3" fill="none" stroke="#b01010" stroke-width="0.85" />
<line x1="482.7" y1="173.5" x2="488.7" y2="179.8" stroke="#9a9a9a" stroke-width="0.8"/>
<line x1="488.7" y1="173.5" x2="482.7" y2="179.8" stroke="#9a9a9a" stroke-width="0.8"/>
<polyline points="488.2,107.4 505.7,90 532.5,90" fill="none" stroke="#909090" stroke-width="0.9"/>
<text x="533" y="92.1" font-size="5.6" fill="#e40a0a" font-weight="bold" stroke="#e40a0a" stroke-width="0.1" textLength="15" lengthAdjust="spacingAndGlyphs">HBM</text>
<polyline points="491.6,113.2 509,96.6 532.5,96.6" fill="none" stroke="#909090" stroke-width="0.9"/>
<text x="533" y="98.69999999999999" font-size="5.6" fill="#e40a0a" font-weight="bold" stroke="#e40a0a" stroke-width="0.1" textLength="17" lengthAdjust="spacingAndGlyphs">HBM</text>
<polyline points="495.7,115.7 505.7,106 532.5,106" fill="none" stroke="#909090" stroke-width="0.9"/>
<text x="533" y="108.1" font-size="5.6" fill="#e40a0a" font-weight="bold" stroke="#e40a0a" stroke-width="0.1" textLength="50" lengthAdjust="spacingAndGlyphs">HBMWEHKNBMH</text>
<polyline points="475.5,152 512.8,114.8 532.5,114.8" fill="none" stroke="#909090" stroke-width="0.9"/>
<text x="533" y="116.89999999999999" font-size="5.6" fill="#e40a0a" font-weight="bold" stroke="#e40a0a" stroke-width="0.1" textLength="22" lengthAdjust="spacingAndGlyphs">HBMWE</text>
<polyline points="496.5,141.4 512.3,125.1 532.5,125.1" fill="none" stroke="#909090" stroke-width="0.9"/>
<text x="533" y="127.19999999999999" font-size="5.6" fill="#e40a0a" font-weight="bold" stroke="#e40a0a" stroke-width="0.1" textLength="35" lengthAdjust="spacingAndGlyphs">HBMWEHK</text>
<circle cx="511" cy="232.7" r="5.6" fill="none" stroke="#8a8a8a" stroke-width="0.9"/>
<line x1="505.4" y1="232.7" x2="585.6" y2="232.7" stroke="#858585" stroke-width="0.9"/>
<text x="511" y="231.39999999999998" font-size="2.8" fill="#e00000" text-anchor="middle" >3</text>
<text x="511" y="236.29999999999998" font-size="2.8" fill="#e00000" text-anchor="middle" >502</text>
<text x="522.4" y="232.29999999999998" font-size="6.6" fill="#e00808" font-weight="bold" textLength="46.200000000000045" lengthAdjust="spacingAndGlyphs">HBMWEHKNBMH</text>
<text x="574.6" y="238.5" font-size="4.8" fill="#b80000" font-weight="bold" textLength="8" lengthAdjust="spacing">1:5</text>
<path d="M498 141.5 H503 M501.5 140.5 L503 141.5 L501.5 142.5" fill="none" stroke="#b0b0b0" stroke-width="0.6"/>
<rect x="123" y="248.6" width="66.7" height="66.3" fill="url(#conc)" stroke="#7a7a7a" stroke-width="0.8" />
<circle cx="146.9" cy="308.3" r="0.6" fill="#727272"/>
<circle cx="159.3" cy="259.4" r="0.5" fill="#727272"/>
<circle cx="133.0" cy="287.6" r="0.4" fill="#727272"/>
<circle cx="133.7" cy="281.9" r="0.4" fill="#727272"/>
<circle cx="160.4" cy="276.0" r="0.4" fill="#727272"/>
<circle cx="171.5" cy="264.3" r="0.5" fill="#727272"/>
<circle cx="138.8" cy="298.8" r="0.5" fill="#727272"/>
<circle cx="182.7" cy="272.3" r="0.4" fill="#727272"/>
<circle cx="178.7" cy="287.6" r="0.7" fill="#727272"/>
<circle cx="145.4" cy="299.3" r="0.5" fill="#727272"/>
<circle cx="188.1" cy="314.4" r="0.4" fill="#727272"/>
<circle cx="153.2" cy="282.0" r="0.4" fill="#727272"/>
<circle cx="163.3" cy="260.6" r="0.4" fill="#727272"/>
<circle cx="140.3" cy="299.9" r="0.4" fill="#727272"/>
<circle cx="145.6" cy="253.8" r="0.6" fill="#727272"/>
<circle cx="127.9" cy="300.2" r="0.7" fill="#727272"/>
<circle cx="139.3" cy="258.9" r="0.6" fill="#727272"/>
<circle cx="151.8" cy="310.4" r="0.4" fill="#727272"/>
<circle cx="170.1" cy="277.0" r="0.5" fill="#727272"/>
<circle cx="162.2" cy="281.6" r="0.5" fill="#727272"/>
<circle cx="177.6" cy="301.0" r="0.6" fill="#727272"/>
<circle cx="156.8" cy="270.8" r="0.4" fill="#727272"/>
<circle cx="157.7" cy="298.2" r="0.5" fill="#727272"/>
<circle cx="157.1" cy="259.7" r="0.5" fill="#727272"/>
<circle cx="151.9" cy="292.4" r="0.4" fill="#727272"/>
<circle cx="139.0" cy="279.6" r="0.5" fill="#727272"/>
<circle cx="167.1" cy="255.3" r="0.7" fill="#727272"/>
<circle cx="128.9" cy="294.2" r="0.6" fill="#727272"/>
<circle cx="145.3" cy="266.3" r="0.6" fill="#727272"/>
<circle cx="137.8" cy="275.2" r="0.7" fill="#727272"/>
<circle cx="127.6" cy="254.2" r="0.4" fill="#727272"/>
<circle cx="159.2" cy="314.3" r="0.4" fill="#727272"/>
<circle cx="148.5" cy="293.7" r="0.6" fill="#727272"/>
<circle cx="135.9" cy="293.0" r="0.7" fill="#727272"/>
<circle cx="160.5" cy="278.3" r="0.4" fill="#727272"/>
<circle cx="185.3" cy="302.6" r="0.7" fill="#727272"/>
<circle cx="131.5" cy="253.0" r="0.7" fill="#727272"/>
<circle cx="131.5" cy="294.1" r="0.5" fill="#727272"/>
<circle cx="161.6" cy="313.3" r="0.4" fill="#727272"/>
<circle cx="175.7" cy="301.0" r="0.4" fill="#727272"/>
<circle cx="130.5" cy="270.0" r="0.4" fill="#727272"/>
<circle cx="137.7" cy="311.5" r="0.6" fill="#727272"/>
<circle cx="146.2" cy="294.7" r="0.6" fill="#727272"/>
<circle cx="150.1" cy="303.5" r="0.5" fill="#727272"/>
<circle cx="188.2" cy="277.6" r="0.4" fill="#727272"/>
<circle cx="131.8" cy="284.7" r="0.7" fill="#727272"/>
<circle cx="180.7" cy="290.8" r="0.5" fill="#727272"/>
<circle cx="167.0" cy="265.9" r="0.4" fill="#727272"/>
<circle cx="130.7" cy="273.8" r="0.5" fill="#727272"/>
<circle cx="123.2" cy="251.4" r="0.6" fill="#727272"/>
<circle cx="128.6" cy="268.9" r="0.6" fill="#727272"/>
<circle cx="179.5" cy="298.3" r="0.7" fill="#727272"/>
<circle cx="187.7" cy="291.3" r="0.5" fill="#727272"/>
<circle cx="143.8" cy="262.1" r="0.6" fill="#727272"/>
<circle cx="131.4" cy="272.1" r="0.5" fill="#727272"/>
<circle cx="164.3" cy="292.3" r="0.5" fill="#727272"/>
<circle cx="156.6" cy="276.4" r="0.5" fill="#727272"/>
<circle cx="125.9" cy="268.0" r="0.4" fill="#727272"/>
<circle cx="174.4" cy="295.3" r="0.6" fill="#727272"/>
<circle cx="157.5" cy="265.1" r="0.7" fill="#727272"/>
<circle cx="159.3" cy="268.0" r="0.4" fill="#727272"/>
<circle cx="177.6" cy="280.6" r="0.5" fill="#727272"/>
<circle cx="171.6" cy="305.8" r="0.6" fill="#727272"/>
<circle cx="153.3" cy="254.3" r="0.6" fill="#727272"/>
<circle cx="171.9" cy="262.3" r="0.5" fill="#727272"/>
<circle cx="188.6" cy="277.3" r="0.6" fill="#727272"/>
<circle cx="165.4" cy="294.6" r="0.6" fill="#727272"/>
<circle cx="159.6" cy="271.3" r="0.7" fill="#727272"/>
<circle cx="125.2" cy="312.4" r="0.6" fill="#727272"/>
<circle cx="176.7" cy="263.8" r="0.6" fill="#727272"/>
<circle cx="154.5" cy="296.3" r="0.5" fill="#727272"/>
<circle cx="155.5" cy="273.1" r="0.6" fill="#727272"/>
<circle cx="182.8" cy="251.5" r="0.5" fill="#727272"/>
<circle cx="182.7" cy="304.9" r="0.7" fill="#727272"/>
<circle cx="142.2" cy="258.9" r="0.5" fill="#727272"/>
<circle cx="188.0" cy="260.8" r="0.5" fill="#727272"/>
<circle cx="146.5" cy="252.6" r="0.5" fill="#727272"/>
<circle cx="145.1" cy="305.1" r="0.4" fill="#727272"/>
<circle cx="151.5" cy="261.3" r="0.6" fill="#727272"/>
<circle cx="157.0" cy="256.0" r="0.6" fill="#727272"/>
<circle cx="152.3" cy="275.0" r="0.6" fill="#727272"/>
<circle cx="188.8" cy="274.6" r="0.5" fill="#727272"/>
<circle cx="148.3" cy="249.3" r="0.6" fill="#727272"/>
<circle cx="130.6" cy="269.9" r="0.5" fill="#727272"/>
<circle cx="168.3" cy="290.0" r="0.5" fill="#727272"/>
<circle cx="136.8" cy="287.0" r="0.5" fill="#727272"/>
<circle cx="142.6" cy="261.9" r="0.5" fill="#727272"/>
<circle cx="138.6" cy="287.5" r="0.6" fill="#727272"/>
<circle cx="131.1" cy="286.5" r="0.4" fill="#727272"/>
<circle cx="157.0" cy="256.7" r="0.5" fill="#727272"/>
<circle cx="152.4" cy="314.4" r="0.6" fill="#727272"/>
<circle cx="124.0" cy="263.7" r="0.6" fill="#727272"/>
<circle cx="188.8" cy="264.5" r="0.7" fill="#727272"/>
<circle cx="139.2" cy="287.5" r="0.7" fill="#727272"/>
<circle cx="165.3" cy="283.1" r="0.6" fill="#727272"/>
<circle cx="141.0" cy="300.1" r="0.7" fill="#727272"/>
<circle cx="154.2" cy="249.5" r="0.7" fill="#727272"/>
<circle cx="153.8" cy="288.3" r="0.5" fill="#727272"/>
<circle cx="174.9" cy="304.4" r="0.7" fill="#727272"/>
<circle cx="133.7" cy="312.0" r="0.6" fill="#727272"/>
<circle cx="173.6" cy="298.2" r="0.4" fill="#727272"/>
<circle cx="143.7" cy="306.4" r="0.4" fill="#727272"/>
<circle cx="127.5" cy="308.6" r="0.5" fill="#727272"/>
<circle cx="147.6" cy="277.3" r="0.7" fill="#727272"/>
<circle cx="142.3" cy="295.1" r="0.6" fill="#727272"/>
<circle cx="188.5" cy="259.8" r="0.7" fill="#727272"/>
<circle cx="130.6" cy="267.8" r="0.5" fill="#727272"/>
<circle cx="137.7" cy="274.3" r="0.6" fill="#727272"/>
<circle cx="163.2" cy="285.7" r="0.6" fill="#727272"/>
<circle cx="141.9" cy="254.2" r="0.6" fill="#727272"/>
<circle cx="179.3" cy="272.9" r="0.6" fill="#727272"/>
<circle cx="132.2" cy="293.3" r="0.4" fill="#727272"/>
<circle cx="145.6" cy="276.3" r="0.6" fill="#727272"/>
<circle cx="137.8" cy="248.8" r="0.5" fill="#727272"/>
<circle cx="167.3" cy="278.2" r="0.7" fill="#727272"/>
<circle cx="140.2" cy="260.0" r="0.7" fill="#727272"/>
<circle cx="134.0" cy="309.4" r="0.4" fill="#727272"/>
<circle cx="124.9" cy="263.2" r="0.6" fill="#727272"/>
<circle cx="168.5" cy="293.4" r="0.7" fill="#727272"/>
<circle cx="159.4" cy="301.7" r="0.5" fill="#727272"/>
<circle cx="127.5" cy="260.2" r="0.5" fill="#727272"/>
<circle cx="140.3" cy="291.3" r="0.5" fill="#727272"/>
<circle cx="169.8" cy="299.7" r="0.6" fill="#727272"/>
<circle cx="142.4" cy="284.0" r="0.7" fill="#727272"/>
<circle cx="171.9" cy="256.0" r="0.6" fill="#727272"/>
<circle cx="143.6" cy="293.6" r="0.5" fill="#727272"/>
<circle cx="167.8" cy="297.9" r="0.6" fill="#727272"/>
<circle cx="160.8" cy="298.5" r="0.6" fill="#727272"/>
<circle cx="155.9" cy="285.1" r="0.5" fill="#727272"/>
<circle cx="177.8" cy="291.9" r="0.4" fill="#727272"/>
<circle cx="128.4" cy="290.0" r="0.5" fill="#727272"/>
<circle cx="140.8" cy="304.7" r="0.5" fill="#727272"/>
<circle cx="183.4" cy="311.6" r="0.4" fill="#727272"/>
<circle cx="124.1" cy="307.6" r="0.7" fill="#727272"/>
<circle cx="128.8" cy="303.4" r="0.7" fill="#727272"/>
<circle cx="158.5" cy="305.8" r="0.5" fill="#727272"/>
<circle cx="143.9" cy="290.7" r="0.4" fill="#727272"/>
<circle cx="131.8" cy="273.3" r="0.4" fill="#727272"/>
<circle cx="124.5" cy="296.3" r="0.4" fill="#727272"/>
<circle cx="133.7" cy="268.0" r="0.6" fill="#727272"/>
<circle cx="143.1" cy="297.3" r="0.4" fill="#727272"/>
<circle cx="181.0" cy="314.2" r="0.7" fill="#727272"/>
<circle cx="163.2" cy="313.0" r="0.4" fill="#727272"/>
<circle cx="177.1" cy="297.1" r="0.5" fill="#727272"/>
<circle cx="143.5" cy="311.5" r="0.7" fill="#727272"/>
<circle cx="163.8" cy="305.7" r="0.5" fill="#727272"/>
<circle cx="148.5" cy="284.6" r="0.7" fill="#727272"/>
<circle cx="175.4" cy="278.8" r="0.5" fill="#727272"/>
<circle cx="185.7" cy="263.2" r="0.6" fill="#727272"/>
<circle cx="172.7" cy="303.7" r="0.5" fill="#727272"/>
<circle cx="131.9" cy="268.9" r="0.4" fill="#727272"/>
<circle cx="137.9" cy="263.0" r="0.6" fill="#727272"/>
<circle cx="153.8" cy="271.7" r="0.7" fill="#727272"/>
<circle cx="124.8" cy="298.6" r="0.6" fill="#727272"/>
<circle cx="149.8" cy="259.2" r="0.7" fill="#727272"/>
<circle cx="171.8" cy="292.2" r="0.7" fill="#727272"/>
<circle cx="133.4" cy="299.3" r="0.7" fill="#727272"/>
<circle cx="184.3" cy="279.9" r="0.5" fill="#727272"/>
<circle cx="175.5" cy="261.7" r="0.5" fill="#727272"/>
<circle cx="146.6" cy="302.5" r="0.4" fill="#727272"/>
<circle cx="140.6" cy="271.7" r="0.4" fill="#727272"/>
<circle cx="155.2" cy="273.6" r="0.5" fill="#727272"/>
<circle cx="144.1" cy="302.1" r="0.6" fill="#727272"/>
<circle cx="139.9" cy="303.7" r="0.5" fill="#727272"/>
<circle cx="169.7" cy="259.9" r="0.4" fill="#727272"/>
<circle cx="175.5" cy="293.6" r="0.7" fill="#727272"/>
<circle cx="152.1" cy="293.2" r="0.7" fill="#727272"/>
<circle cx="135.6" cy="255.3" r="0.7" fill="#727272"/>
<circle cx="134.5" cy="308.1" r="0.6" fill="#727272"/>
<circle cx="137.8" cy="306.1" r="0.7" fill="#727272"/>
<circle cx="141.5" cy="255.2" r="0.5" fill="#727272"/>
<circle cx="133.8" cy="287.5" r="0.5" fill="#727272"/>
<circle cx="152.3" cy="282.0" r="0.4" fill="#727272"/>
<circle cx="124.1" cy="310.3" r="0.5" fill="#727272"/>
<circle cx="152.6" cy="307.6" r="0.4" fill="#727272"/>
<circle cx="158.9" cy="263.0" r="0.6" fill="#727272"/>
<circle cx="165.0" cy="288.0" r="0.5" fill="#727272"/>
<circle cx="166.2" cy="273.2" r="0.7" fill="#727272"/>
<circle cx="176.8" cy="313.6" r="0.5" fill="#727272"/>
<circle cx="169.1" cy="258.8" r="0.4" fill="#727272"/>
<circle cx="127.0" cy="286.6" r="0.4" fill="#727272"/>
<circle cx="136.2" cy="262.2" r="0.6" fill="#727272"/>
<circle cx="139.9" cy="254.3" r="0.7" fill="#727272"/>
<circle cx="135.2" cy="248.6" r="0.7" fill="#727272"/>
<circle cx="137.9" cy="264.7" r="0.7" fill="#727272"/>
<circle cx="130.6" cy="263.4" r="0.4" fill="#727272"/>
<circle cx="130.6" cy="298.3" r="0.7" fill="#727272"/>
<circle cx="169.5" cy="300.3" r="0.5" fill="#727272"/>
<circle cx="136.9" cy="251.0" r="0.7" fill="#727272"/>
<circle cx="150.5" cy="310.3" r="0.7" fill="#727272"/>
<circle cx="137.9" cy="276.3" r="0.7" fill="#727272"/>
<circle cx="168.1" cy="287.4" r="0.7" fill="#727272"/>
<circle cx="141.3" cy="303.5" r="0.7" fill="#727272"/>
<circle cx="137.1" cy="251.9" r="0.5" fill="#727272"/>
<circle cx="153.8" cy="286.7" r="0.5" fill="#727272"/>
<circle cx="189.4" cy="282.3" r="0.4" fill="#727272"/>
<circle cx="128.3" cy="273.1" r="0.7" fill="#727272"/>
<circle cx="188.2" cy="249.5" r="0.7" fill="#727272"/>
<circle cx="165.2" cy="304.5" r="0.7" fill="#727272"/>
<circle cx="177.6" cy="306.6" r="0.7" fill="#727272"/>
<circle cx="170.5" cy="296.9" r="0.5" fill="#727272"/>
<circle cx="132.5" cy="274.7" r="0.4" fill="#727272"/>
<circle cx="166.9" cy="250.1" r="0.7" fill="#727272"/>
<circle cx="171.0" cy="283.1" r="0.5" fill="#727272"/>
<circle cx="145.5" cy="257.1" r="0.4" fill="#727272"/>
<circle cx="142.1" cy="301.0" r="0.6" fill="#727272"/>
<circle cx="176.1" cy="294.2" r="0.5" fill="#727272"/>
<circle cx="130.7" cy="297.1" r="0.4" fill="#727272"/>
<circle cx="189.4" cy="268.4" r="0.6" fill="#727272"/>
<circle cx="170.0" cy="289.5" r="0.7" fill="#727272"/>
<circle cx="182.7" cy="256.4" r="0.7" fill="#727272"/>
<circle cx="143.0" cy="312.7" r="0.7" fill="#727272"/>
<circle cx="130.1" cy="310.0" r="0.7" fill="#727272"/>
<circle cx="187.6" cy="269.9" r="0.7" fill="#727272"/>
<circle cx="149.2" cy="298.7" r="0.6" fill="#727272"/>
<circle cx="178.6" cy="287.5" r="0.7" fill="#727272"/>
<circle cx="140.5" cy="309.9" r="0.5" fill="#727272"/>
<circle cx="152.4" cy="299.2" r="0.6" fill="#727272"/>
<circle cx="147.1" cy="288.6" r="0.5" fill="#727272"/>
<circle cx="151.4" cy="310.8" r="0.5" fill="#727272"/>
<circle cx="131.2" cy="249.7" r="0.4" fill="#727272"/>
<circle cx="125.3" cy="278.1" r="0.6" fill="#727272"/>
<circle cx="183.8" cy="277.8" r="0.4" fill="#727272"/>
<circle cx="129.8" cy="301.7" r="0.7" fill="#727272"/>
<circle cx="143.1" cy="296.1" r="0.4" fill="#727272"/>
<circle cx="177.1" cy="272.7" r="0.7" fill="#727272"/>
<circle cx="128.9" cy="250.4" r="0.5" fill="#727272"/>
<circle cx="165.6" cy="302.6" r="0.5" fill="#727272"/>
<circle cx="163.3" cy="253.3" r="0.6" fill="#727272"/>
<circle cx="177.8" cy="276.2" r="0.6" fill="#727272"/>
<circle cx="162.1" cy="269.3" r="0.4" fill="#727272"/>
<circle cx="160.6" cy="313.3" r="0.7" fill="#727272"/>
<circle cx="143.4" cy="252.5" r="0.4" fill="#727272"/>
<circle cx="129.7" cy="252.8" r="0.5" fill="#727272"/>
<circle cx="162.2" cy="296.4" r="0.6" fill="#727272"/>
<circle cx="168.2" cy="267.8" r="0.7" fill="#727272"/>
<circle cx="124.4" cy="278.9" r="0.6" fill="#727272"/>
<circle cx="142.9" cy="266.8" r="0.4" fill="#727272"/>
<circle cx="129.3" cy="282.8" r="0.6" fill="#727272"/>
<circle cx="138.3" cy="256.2" r="0.6" fill="#727272"/>
<circle cx="171.0" cy="273.4" r="0.7" fill="#727272"/>
<circle cx="183.9" cy="282.6" r="0.5" fill="#727272"/>
<circle cx="189.0" cy="311.1" r="0.6" fill="#727272"/>
<circle cx="186.1" cy="305.4" r="0.5" fill="#727272"/>
<circle cx="132.0" cy="284.9" r="0.5" fill="#727272"/>
<circle cx="177.0" cy="285.6" r="0.4" fill="#727272"/>
<circle cx="140.2" cy="295.2" r="0.6" fill="#727272"/>
<circle cx="140.3" cy="289.5" r="0.5" fill="#727272"/>
<circle cx="149.6" cy="260.1" r="0.4" fill="#727272"/>
<circle cx="143.0" cy="301.7" r="0.5" fill="#727272"/>
<circle cx="154.7" cy="291.7" r="0.7" fill="#727272"/>
<circle cx="125.9" cy="261.3" r="0.7" fill="#727272"/>
<circle cx="149.1" cy="276.8" r="0.6" fill="#727272"/>
<circle cx="167.5" cy="285.8" r="0.6" fill="#727272"/>
<circle cx="149.8" cy="286.4" r="0.7" fill="#727272"/>
<circle cx="135.5" cy="311.5" r="0.6" fill="#727272"/>
<circle cx="189.2" cy="279.5" r="0.4" fill="#727272"/>
<circle cx="139.1" cy="297.8" r="0.5" fill="#727272"/>
<circle cx="178.6" cy="306.9" r="0.6" fill="#727272"/>
<circle cx="182.5" cy="279.0" r="0.6" fill="#727272"/>
<circle cx="143.8" cy="273.0" r="0.5" fill="#727272"/>
<circle cx="179.3" cy="293.0" r="0.5" fill="#727272"/>
<circle cx="128.9" cy="307.7" r="0.5" fill="#727272"/>
<circle cx="154.9" cy="305.9" r="0.5" fill="#727272"/>
<circle cx="132.6" cy="285.1" r="0.6" fill="#727272"/>
<circle cx="187.7" cy="267.7" r="0.4" fill="#727272"/>
<circle cx="140.8" cy="274.8" r="0.4" fill="#727272"/>
<circle cx="186.3" cy="263.2" r="0.7" fill="#727272"/>
<circle cx="123.8" cy="305.7" r="0.7" fill="#727272"/>
<circle cx="175.5" cy="254.8" r="0.5" fill="#727272"/>
<circle cx="149.9" cy="264.5" r="0.4" fill="#727272"/>
<circle cx="153.8" cy="276.4" r="0.4" fill="#727272"/>
<circle cx="139.4" cy="267.6" r="0.4" fill="#727272"/>
<circle cx="147.8" cy="314.2" r="0.4" fill="#727272"/>
<circle cx="174.0" cy="287.8" r="0.7" fill="#727272"/>
<circle cx="159.7" cy="302.5" r="0.5" fill="#727272"/>
<circle cx="182.7" cy="279.3" r="0.6" fill="#727272"/>
<circle cx="149.6" cy="261.3" r="0.6" fill="#727272"/>
<circle cx="163.0" cy="309.7" r="0.6" fill="#727272"/>
<circle cx="160.8" cy="270.2" r="0.6" fill="#727272"/>
<circle cx="156.8" cy="251.1" r="0.6" fill="#727272"/>
<circle cx="170.1" cy="310.3" r="0.6" fill="#727272"/>
<circle cx="167.2" cy="310.7" r="0.7" fill="#727272"/>
<circle cx="153.0" cy="279.6" r="0.6" fill="#727272"/>
<circle cx="184.4" cy="294.3" r="0.5" fill="#727272"/>
<circle cx="177.0" cy="265.1" r="0.5" fill="#727272"/>
<circle cx="137.0" cy="262.5" r="0.6" fill="#727272"/>
<circle cx="135.5" cy="270.7" r="0.7" fill="#727272"/>
<circle cx="155.2" cy="251.7" r="0.5" fill="#727272"/>
<circle cx="177.3" cy="252.4" r="0.7" fill="#727272"/>
<circle cx="128.1" cy="278.6" r="0.4" fill="#727272"/>
<circle cx="181.9" cy="297.9" r="0.4" fill="#727272"/>
<circle cx="150.6" cy="304.9" r="0.4" fill="#727272"/>
<circle cx="162.1" cy="264.4" r="0.6" fill="#727272"/>
<circle cx="165.0" cy="276.2" r="0.4" fill="#727272"/>
<circle cx="166.1" cy="282.1" r="0.6" fill="#727272"/>
<circle cx="125.5" cy="300.8" r="0.7" fill="#727272"/>
<circle cx="136.5" cy="270.9" r="0.4" fill="#727272"/>
<circle cx="124.8" cy="304.4" r="0.7" fill="#727272"/>
<circle cx="180.3" cy="281.1" r="0.7" fill="#727272"/>
<circle cx="187.4" cy="304.1" r="0.7" fill="#727272"/>
<circle cx="161.7" cy="249.4" r="0.7" fill="#727272"/>
<circle cx="164.9" cy="275.7" r="0.4" fill="#727272"/>
<circle cx="156.3" cy="283.5" r="0.4" fill="#727272"/>
<circle cx="155.8" cy="275.4" r="0.4" fill="#727272"/>
<circle cx="156.2" cy="277.3" r="0.4" fill="#727272"/>
<circle cx="130.7" cy="288.3" r="0.6" fill="#727272"/>
<circle cx="126.1" cy="306.8" r="0.6" fill="#727272"/>
<circle cx="167.6" cy="248.8" r="0.7" fill="#727272"/>
<circle cx="182.7" cy="265.0" r="0.7" fill="#727272"/>
<circle cx="148.3" cy="268.2" r="0.4" fill="#727272"/>
<circle cx="145.1" cy="284.6" r="0.7" fill="#727272"/>
<circle cx="183.9" cy="286.1" r="0.4" fill="#727272"/>
<circle cx="151.7" cy="307.1" r="0.5" fill="#727272"/>
<circle cx="164.6" cy="280.3" r="0.4" fill="#727272"/>
<line x1="189.7" y1="257" x2="189.7" y2="314.9" stroke="#189498" stroke-width="1"/>
<line x1="131.5" y1="314.9" x2="189.7" y2="314.9" stroke="#189498" stroke-width="1"/>
<rect x="198.3" y="248.6" width="4.3" height="79.5" fill="#6e6e6e" stroke="none" stroke-width="1" />
<rect x="123" y="323.3" width="79.6" height="4.6" fill="#6e6e6e" stroke="none" stroke-width="1" />
<polyline points="197.7,248.6 197.7,322.8 123,322.8" fill="none" stroke="#a810a8" stroke-width="1"/>
<polyline points="203.3,248.6 203.3,328.3 123,328.3" fill="none" stroke="#c01060" stroke-width="1.3"/>
<rect x="123" y="248.6" width="149.2" height="160.9" fill="none" stroke="#7c7c7c" stroke-width="1" />
<rect x="189.3" y="248.6" width="8.5" height="8.4" fill="none" stroke="#b01010" stroke-width="0.85" />
<line x1="190.3" y1="249.6" x2="196.8" y2="256.0" stroke="#9a9a9a" stroke-width="0.8"/>
<line x1="196.8" y1="249.6" x2="190.3" y2="256.0" stroke="#9a9a9a" stroke-width="0.8"/>
<rect x="123" y="314.7" width="8.5" height="8.6" fill="none" stroke="#b01010" stroke-width="0.85" />
<line x1="124" y1="315.7" x2="130.5" y2="322.3" stroke="#9a9a9a" stroke-width="0.8"/>
<line x1="130.5" y1="315.7" x2="124" y2="322.3" stroke="#9a9a9a" stroke-width="0.8"/>
<rect x="189.3" y="314.7" width="8.8" height="8.5" fill="none" stroke="#b01010" stroke-width="0.85" />
<line x1="190.3" y1="315.7" x2="197.10000000000002" y2="322.2" stroke="#9a9a9a" stroke-width="0.8"/>
<line x1="197.10000000000002" y1="315.7" x2="190.3" y2="322.2" stroke="#9a9a9a" stroke-width="0.8"/>
<polyline points="186,302.5 197.5,293 228.7,293" fill="none" stroke="#909090" stroke-width="0.9"/>
<text x="229" y="295.1" font-size="5.6" fill="#e40a0a" font-weight="bold" stroke="#e40a0a" stroke-width="0.1" textLength="18" lengthAdjust="spacingAndGlyphs">HBMW</text>
<polyline points="191.6,317 207.7,300.8 228.7,300.8" fill="none" stroke="#909090" stroke-width="0.9"/>
<text x="229" y="302.90000000000003" font-size="5.6" fill="#e40a0a" font-weight="bold" stroke="#e40a0a" stroke-width="0.1" textLength="14" lengthAdjust="spacingAndGlyphs">HBM</text>
<polyline points="200.1,316.1 208.6,307.6 228.7,307.6" fill="none" stroke="#909090" stroke-width="0.9"/>
<text x="229" y="309.70000000000005" font-size="5.6" fill="#e40a0a" font-weight="bold" stroke="#e40a0a" stroke-width="0.1" textLength="19" lengthAdjust="spacingAndGlyphs">HBMW</text>
<polyline points="203.4,319.9 209.1,314.5 228.7,314.5" fill="none" stroke="#909090" stroke-width="0.9"/>
<text x="229" y="316.6" font-size="5.6" fill="#e40a0a" font-weight="bold" stroke="#e40a0a" stroke-width="0.1" textLength="33" lengthAdjust="spacingAndGlyphs">HBMWEHK</text>
<polyline points="203.4,328.4 210.5,335.5 228.7,335.5" fill="none" stroke="#909090" stroke-width="0.9"/>
<text x="229" y="337.6" font-size="5.6" fill="#e40a0a" font-weight="bold" stroke="#e40a0a" stroke-width="0.1" textLength="23" lengthAdjust="spacingAndGlyphs">HBMWE</text>
<polyline points="193.5,328.4 207.5,341.8 228.7,341.8" fill="none" stroke="#909090" stroke-width="0.9"/>
<text x="229" y="343.90000000000003" font-size="5.6" fill="#e40a0a" font-weight="bold" stroke="#e40a0a" stroke-width="0.1" textLength="31" lengthAdjust="spacingAndGlyphs">HBMWEHK</text>
<circle cx="197.5" cy="416.2" r="5.6" fill="none" stroke="#8a8a8a" stroke-width="0.9"/>
<line x1="191.9" y1="416.2" x2="272.2" y2="416.2" stroke="#858585" stroke-width="0.9"/>
<text x="197.5" y="414.9" font-size="2.8" fill="#e00000" text-anchor="middle" >4</text>
<text x="197.5" y="419.8" font-size="2.8" fill="#e00000" text-anchor="middle" >502</text>
<text x="205" y="415.8" font-size="6.6" fill="#e00808" font-weight="bold" textLength="46" lengthAdjust="spacingAndGlyphs">HBMWEHKNBMH</text>
<text x="261.2" y="422.0" font-size="4.8" fill="#b80000" font-weight="bold" textLength="8" lengthAdjust="spacing">1:5</text>
<rect x="280.3" y="248.6" width="66.7" height="72.6" fill="url(#conc)" stroke="#7a7a7a" stroke-width="0.8" />
<circle cx="327.3" cy="317.3" r="0.4" fill="#727272"/>
<circle cx="290.2" cy="300.1" r="0.4" fill="#727272"/>
<circle cx="331.3" cy="266.3" r="0.5" fill="#727272"/>
<circle cx="333.7" cy="265.9" r="0.7" fill="#727272"/>
<circle cx="336.1" cy="302.7" r="0.6" fill="#727272"/>
<circle cx="321.3" cy="258.9" r="0.4" fill="#727272"/>
<circle cx="296.8" cy="286.1" r="0.7" fill="#727272"/>
<circle cx="343.8" cy="259.7" r="0.7" fill="#727272"/>
<circle cx="292.0" cy="289.1" r="0.6" fill="#727272"/>
<circle cx="342.7" cy="250.0" r="0.6" fill="#727272"/>
<circle cx="333.4" cy="252.4" r="0.4" fill="#727272"/>
<circle cx="291.2" cy="309.6" r="0.7" fill="#727272"/>
<circle cx="336.0" cy="298.1" r="0.4" fill="#727272"/>
<circle cx="302.1" cy="253.8" r="0.7" fill="#727272"/>
<circle cx="289.2" cy="270.6" r="0.4" fill="#727272"/>
<circle cx="319.0" cy="257.4" r="0.7" fill="#727272"/>
<circle cx="314.1" cy="259.0" r="0.4" fill="#727272"/>
<circle cx="294.8" cy="316.8" r="0.6" fill="#727272"/>
<circle cx="295.6" cy="248.7" r="0.6" fill="#727272"/>
<circle cx="286.8" cy="304.2" r="0.7" fill="#727272"/>
<circle cx="322.6" cy="309.0" r="0.6" fill="#727272"/>
<circle cx="345.5" cy="258.0" r="0.5" fill="#727272"/>
<circle cx="301.2" cy="298.2" r="0.5" fill="#727272"/>
<circle cx="336.9" cy="289.8" r="0.6" fill="#727272"/>
<circle cx="334.0" cy="292.5" r="0.5" fill="#727272"/>
<circle cx="289.3" cy="311.0" r="0.5" fill="#727272"/>
<circle cx="296.5" cy="299.2" r="0.4" fill="#727272"/>
<circle cx="293.8" cy="270.8" r="0.4" fill="#727272"/>
<circle cx="300.7" cy="255.7" r="0.6" fill="#727272"/>
<circle cx="341.7" cy="297.8" r="0.5" fill="#727272"/>
<circle cx="309.8" cy="255.3" r="0.7" fill="#727272"/>
<circle cx="339.0" cy="260.4" r="0.4" fill="#727272"/>
<circle cx="342.5" cy="249.1" r="0.7" fill="#727272"/>
<circle cx="285.9" cy="266.5" r="0.4" fill="#727272"/>
<circle cx="338.6" cy="278.3" r="0.7" fill="#727272"/>
<circle cx="288.1" cy="277.4" r="0.5" fill="#727272"/>
<circle cx="296.4" cy="305.9" r="0.6" fill="#727272"/>
<circle cx="332.6" cy="287.2" r="0.5" fill="#727272"/>
<circle cx="338.8" cy="253.5" r="0.7" fill="#727272"/>
<circle cx="299.1" cy="302.3" r="0.5" fill="#727272"/>
<circle cx="309.4" cy="280.9" r="0.5" fill="#727272"/>
<circle cx="337.9" cy="295.0" r="0.7" fill="#727272"/>
<circle cx="300.6" cy="293.8" r="0.4" fill="#727272"/>
<circle cx="343.0" cy="281.2" r="0.7" fill="#727272"/>
<circle cx="337.8" cy="267.2" r="0.6" fill="#727272"/>
<circle cx="306.7" cy="265.4" r="0.5" fill="#727272"/>
<circle cx="314.4" cy="262.5" r="0.4" fill="#727272"/>
<circle cx="312.4" cy="276.4" r="0.6" fill="#727272"/>
<circle cx="305.4" cy="257.6" r="0.4" fill="#727272"/>
<circle cx="341.9" cy="296.5" r="0.6" fill="#727272"/>
<circle cx="307.7" cy="257.9" r="0.6" fill="#727272"/>
<circle cx="310.0" cy="282.6" r="0.7" fill="#727272"/>
<circle cx="321.1" cy="293.7" r="0.5" fill="#727272"/>
<circle cx="341.7" cy="295.1" r="0.4" fill="#727272"/>
<circle cx="307.9" cy="320.5" r="0.4" fill="#727272"/>
<circle cx="298.6" cy="287.5" r="0.7" fill="#727272"/>
<circle cx="305.3" cy="308.8" r="0.5" fill="#727272"/>
<circle cx="308.8" cy="250.1" r="0.7" fill="#727272"/>
<circle cx="328.9" cy="299.3" r="0.4" fill="#727272"/>
<circle cx="286.2" cy="319.6" r="0.5" fill="#727272"/>
<circle cx="301.0" cy="263.3" r="0.6" fill="#727272"/>
<circle cx="318.8" cy="313.2" r="0.7" fill="#727272"/>
<circle cx="322.5" cy="275.1" r="0.4" fill="#727272"/>
<circle cx="295.4" cy="271.0" r="0.4" fill="#727272"/>
<circle cx="319.2" cy="281.1" r="0.7" fill="#727272"/>
<circle cx="324.4" cy="290.0" r="0.5" fill="#727272"/>
<circle cx="296.3" cy="294.1" r="0.7" fill="#727272"/>
<circle cx="302.3" cy="276.6" r="0.7" fill="#727272"/>
<circle cx="329.1" cy="251.3" r="0.7" fill="#727272"/>
<circle cx="317.9" cy="263.6" r="0.4" fill="#727272"/>
<circle cx="334.5" cy="252.7" r="0.6" fill="#727272"/>
<circle cx="332.5" cy="313.2" r="0.5" fill="#727272"/>
<circle cx="313.5" cy="270.3" r="0.7" fill="#727272"/>
<circle cx="315.8" cy="251.7" r="0.4" fill="#727272"/>
<circle cx="291.8" cy="263.6" r="0.4" fill="#727272"/>
<circle cx="305.7" cy="315.3" r="0.6" fill="#727272"/>
<circle cx="304.4" cy="258.9" r="0.6" fill="#727272"/>
<circle cx="323.9" cy="264.9" r="0.4" fill="#727272"/>
<circle cx="285.6" cy="272.2" r="0.7" fill="#727272"/>
<circle cx="322.0" cy="268.9" r="0.7" fill="#727272"/>
<circle cx="346.0" cy="268.0" r="0.7" fill="#727272"/>
<circle cx="292.4" cy="307.8" r="0.7" fill="#727272"/>
<circle cx="343.4" cy="314.0" r="0.5" fill="#727272"/>
<circle cx="320.0" cy="296.1" r="0.7" fill="#727272"/>
<circle cx="331.2" cy="253.3" r="0.6" fill="#727272"/>
<circle cx="345.3" cy="297.4" r="0.5" fill="#727272"/>
<circle cx="322.9" cy="255.9" r="0.6" fill="#727272"/>
<circle cx="305.9" cy="293.6" r="0.6" fill="#727272"/>
<circle cx="281.2" cy="280.9" r="0.7" fill="#727272"/>
<circle cx="332.5" cy="300.8" r="0.6" fill="#727272"/>
<circle cx="313.6" cy="290.2" r="0.5" fill="#727272"/>
<circle cx="300.2" cy="301.1" r="0.6" fill="#727272"/>
<circle cx="317.7" cy="283.3" r="0.6" fill="#727272"/>
<circle cx="334.7" cy="320.2" r="0.7" fill="#727272"/>
<circle cx="285.8" cy="311.4" r="0.4" fill="#727272"/>
<circle cx="319.6" cy="298.9" r="0.6" fill="#727272"/>
<circle cx="313.5" cy="280.2" r="0.5" fill="#727272"/>
<circle cx="312.9" cy="251.3" r="0.5" fill="#727272"/>
<circle cx="302.1" cy="305.0" r="0.6" fill="#727272"/>
<circle cx="299.8" cy="298.6" r="0.5" fill="#727272"/>
<circle cx="322.8" cy="280.8" r="0.5" fill="#727272"/>
<circle cx="299.3" cy="284.3" r="0.5" fill="#727272"/>
<circle cx="328.9" cy="263.0" r="0.6" fill="#727272"/>
<circle cx="306.9" cy="250.2" r="0.6" fill="#727272"/>
<circle cx="303.5" cy="301.6" r="0.5" fill="#727272"/>
<circle cx="291.8" cy="301.7" r="0.4" fill="#727272"/>
<circle cx="305.2" cy="291.4" r="0.4" fill="#727272"/>
<circle cx="300.5" cy="303.8" r="0.7" fill="#727272"/>
<circle cx="298.3" cy="312.8" r="0.6" fill="#727272"/>
<circle cx="331.3" cy="297.9" r="0.6" fill="#727272"/>
<circle cx="297.3" cy="317.5" r="0.4" fill="#727272"/>
<circle cx="295.1" cy="265.3" r="0.5" fill="#727272"/>
<circle cx="333.5" cy="267.7" r="0.6" fill="#727272"/>
<circle cx="281.9" cy="309.3" r="0.6" fill="#727272"/>
<circle cx="299.1" cy="285.8" r="0.6" fill="#727272"/>
<circle cx="289.5" cy="275.1" r="0.6" fill="#727272"/>
<circle cx="303.1" cy="285.5" r="0.7" fill="#727272"/>
<circle cx="297.0" cy="290.6" r="0.7" fill="#727272"/>
<circle cx="313.6" cy="275.2" r="0.4" fill="#727272"/>
<circle cx="303.2" cy="315.2" r="0.6" fill="#727272"/>
<circle cx="317.8" cy="283.1" r="0.6" fill="#727272"/>
<circle cx="341.1" cy="266.3" r="0.6" fill="#727272"/>
<circle cx="320.9" cy="255.8" r="0.5" fill="#727272"/>
<circle cx="339.5" cy="251.0" r="0.5" fill="#727272"/>
<circle cx="289.0" cy="298.0" r="0.7" fill="#727272"/>
<circle cx="303.7" cy="284.8" r="0.4" fill="#727272"/>
<circle cx="293.1" cy="294.1" r="0.7" fill="#727272"/>
<circle cx="314.8" cy="283.2" r="0.4" fill="#727272"/>
<circle cx="327.7" cy="251.6" r="0.6" fill="#727272"/>
<circle cx="303.6" cy="283.8" r="0.5" fill="#727272"/>
<circle cx="343.9" cy="294.4" r="0.5" fill="#727272"/>
<circle cx="337.7" cy="257.8" r="0.5" fill="#727272"/>
<circle cx="319.2" cy="272.9" r="0.4" fill="#727272"/>
<circle cx="342.5" cy="273.1" r="0.7" fill="#727272"/>
<circle cx="294.1" cy="304.7" r="0.4" fill="#727272"/>
<circle cx="344.8" cy="313.3" r="0.5" fill="#727272"/>
<circle cx="293.6" cy="285.1" r="0.4" fill="#727272"/>
<circle cx="326.3" cy="282.0" r="0.5" fill="#727272"/>
<circle cx="320.4" cy="255.9" r="0.5" fill="#727272"/>
<circle cx="287.1" cy="305.5" r="0.6" fill="#727272"/>
<circle cx="304.4" cy="254.3" r="0.4" fill="#727272"/>
<circle cx="330.4" cy="251.7" r="0.7" fill="#727272"/>
<circle cx="334.0" cy="282.2" r="0.6" fill="#727272"/>
<circle cx="334.5" cy="270.5" r="0.4" fill="#727272"/>
<circle cx="292.8" cy="261.5" r="0.5" fill="#727272"/>
<circle cx="337.6" cy="297.8" r="0.7" fill="#727272"/>
<circle cx="292.9" cy="301.4" r="0.4" fill="#727272"/>
<circle cx="344.1" cy="254.6" r="0.4" fill="#727272"/>
<circle cx="320.7" cy="249.7" r="0.7" fill="#727272"/>
<circle cx="309.6" cy="291.8" r="0.6" fill="#727272"/>
<circle cx="298.7" cy="250.7" r="0.6" fill="#727272"/>
<circle cx="315.5" cy="268.3" r="0.7" fill="#727272"/>
<circle cx="346.7" cy="302.3" r="0.5" fill="#727272"/>
<circle cx="296.5" cy="250.6" r="0.6" fill="#727272"/>
<circle cx="289.0" cy="278.6" r="0.4" fill="#727272"/>
<circle cx="309.3" cy="299.2" r="0.4" fill="#727272"/>
<circle cx="313.5" cy="291.0" r="0.4" fill="#727272"/>
<circle cx="307.3" cy="258.5" r="0.7" fill="#727272"/>
<circle cx="292.0" cy="305.0" r="0.7" fill="#727272"/>
<circle cx="333.8" cy="258.1" r="0.7" fill="#727272"/>
<circle cx="298.8" cy="254.8" r="0.4" fill="#727272"/>
<circle cx="311.0" cy="295.6" r="0.4" fill="#727272"/>
<circle cx="339.7" cy="285.7" r="0.5" fill="#727272"/>
<circle cx="346.3" cy="264.2" r="0.4" fill="#727272"/>
<circle cx="286.5" cy="265.4" r="0.5" fill="#727272"/>
<circle cx="288.6" cy="279.0" r="0.4" fill="#727272"/>
<circle cx="286.5" cy="283.3" r="0.5" fill="#727272"/>
<circle cx="330.9" cy="270.5" r="0.5" fill="#727272"/>
<circle cx="289.9" cy="298.1" r="0.7" fill="#727272"/>
<circle cx="332.0" cy="260.8" r="0.6" fill="#727272"/>
<circle cx="317.4" cy="263.8" r="0.6" fill="#727272"/>
<circle cx="345.5" cy="257.2" r="0.5" fill="#727272"/>
<circle cx="309.7" cy="257.1" r="0.6" fill="#727272"/>
<circle cx="323.5" cy="305.2" r="0.5" fill="#727272"/>
<circle cx="341.7" cy="295.7" r="0.6" fill="#727272"/>
<circle cx="319.6" cy="284.5" r="0.7" fill="#727272"/>
<circle cx="318.5" cy="258.0" r="0.7" fill="#727272"/>
<circle cx="322.2" cy="253.5" r="0.5" fill="#727272"/>
<circle cx="317.7" cy="274.9" r="0.7" fill="#727272"/>
<circle cx="290.1" cy="267.6" r="0.6" fill="#727272"/>
<circle cx="345.1" cy="255.2" r="0.4" fill="#727272"/>
<circle cx="301.9" cy="256.9" r="0.7" fill="#727272"/>
<circle cx="310.2" cy="291.6" r="0.6" fill="#727272"/>
<circle cx="282.8" cy="289.6" r="0.5" fill="#727272"/>
<circle cx="338.6" cy="316.8" r="0.6" fill="#727272"/>
<circle cx="338.3" cy="297.5" r="0.4" fill="#727272"/>
<circle cx="340.9" cy="265.7" r="0.5" fill="#727272"/>
<circle cx="310.2" cy="308.5" r="0.7" fill="#727272"/>
<circle cx="309.9" cy="257.1" r="0.5" fill="#727272"/>
<circle cx="333.5" cy="311.3" r="0.6" fill="#727272"/>
<circle cx="287.9" cy="291.7" r="0.7" fill="#727272"/>
<circle cx="341.3" cy="318.9" r="0.7" fill="#727272"/>
<circle cx="329.1" cy="253.6" r="0.7" fill="#727272"/>
<circle cx="324.7" cy="283.0" r="0.5" fill="#727272"/>
<circle cx="286.9" cy="291.3" r="0.7" fill="#727272"/>
<circle cx="307.6" cy="285.1" r="0.4" fill="#727272"/>
<circle cx="319.5" cy="280.5" r="0.5" fill="#727272"/>
<circle cx="318.5" cy="272.2" r="0.7" fill="#727272"/>
<circle cx="321.1" cy="310.0" r="0.6" fill="#727272"/>
<circle cx="344.8" cy="301.4" r="0.4" fill="#727272"/>
<circle cx="302.1" cy="292.6" r="0.4" fill="#727272"/>
<circle cx="297.0" cy="316.6" r="0.5" fill="#727272"/>
<circle cx="322.9" cy="273.5" r="0.4" fill="#727272"/>
<circle cx="310.2" cy="272.0" r="0.5" fill="#727272"/>
<circle cx="291.7" cy="270.8" r="0.5" fill="#727272"/>
<circle cx="340.4" cy="286.0" r="0.6" fill="#727272"/>
<circle cx="341.1" cy="298.2" r="0.7" fill="#727272"/>
<circle cx="332.5" cy="259.9" r="0.6" fill="#727272"/>
<circle cx="327.1" cy="264.0" r="0.5" fill="#727272"/>
<circle cx="319.5" cy="280.8" r="0.5" fill="#727272"/>
<circle cx="328.7" cy="261.2" r="0.6" fill="#727272"/>
<circle cx="307.2" cy="283.1" r="0.7" fill="#727272"/>
<circle cx="290.6" cy="275.1" r="0.4" fill="#727272"/>
<circle cx="308.7" cy="315.5" r="0.6" fill="#727272"/>
<circle cx="292.1" cy="315.1" r="0.6" fill="#727272"/>
<circle cx="325.8" cy="276.3" r="0.6" fill="#727272"/>
<circle cx="335.4" cy="257.9" r="0.6" fill="#727272"/>
<circle cx="346.9" cy="308.1" r="0.5" fill="#727272"/>
<circle cx="289.5" cy="295.4" r="0.6" fill="#727272"/>
<circle cx="280.5" cy="300.2" r="0.7" fill="#727272"/>
<circle cx="292.7" cy="318.4" r="0.4" fill="#727272"/>
<circle cx="294.4" cy="308.3" r="0.7" fill="#727272"/>
<circle cx="302.1" cy="266.6" r="0.6" fill="#727272"/>
<circle cx="335.3" cy="305.8" r="0.4" fill="#727272"/>
<circle cx="326.9" cy="312.8" r="0.4" fill="#727272"/>
<circle cx="318.5" cy="250.3" r="0.6" fill="#727272"/>
<circle cx="338.0" cy="254.3" r="0.7" fill="#727272"/>
<circle cx="293.2" cy="284.1" r="0.6" fill="#727272"/>
<circle cx="310.6" cy="310.2" r="0.6" fill="#727272"/>
<circle cx="297.4" cy="310.1" r="0.4" fill="#727272"/>
<circle cx="306.8" cy="305.2" r="0.6" fill="#727272"/>
<circle cx="327.6" cy="302.8" r="0.6" fill="#727272"/>
<circle cx="299.1" cy="268.4" r="0.4" fill="#727272"/>
<circle cx="295.9" cy="305.1" r="0.4" fill="#727272"/>
<circle cx="321.1" cy="274.0" r="0.5" fill="#727272"/>
<circle cx="323.9" cy="273.3" r="0.6" fill="#727272"/>
<circle cx="296.8" cy="260.6" r="0.6" fill="#727272"/>
<circle cx="292.3" cy="312.1" r="0.4" fill="#727272"/>
<circle cx="317.2" cy="250.8" r="0.6" fill="#727272"/>
<circle cx="314.6" cy="283.2" r="0.7" fill="#727272"/>
<circle cx="339.9" cy="282.6" r="0.4" fill="#727272"/>
<circle cx="305.1" cy="254.9" r="0.6" fill="#727272"/>
<circle cx="336.1" cy="250.5" r="0.4" fill="#727272"/>
<circle cx="332.5" cy="258.0" r="0.6" fill="#727272"/>
<circle cx="335.0" cy="311.6" r="0.4" fill="#727272"/>
<circle cx="314.1" cy="260.1" r="0.7" fill="#727272"/>
<circle cx="323.6" cy="288.0" r="0.6" fill="#727272"/>
<circle cx="301.6" cy="258.3" r="0.5" fill="#727272"/>
<circle cx="310.0" cy="261.7" r="0.6" fill="#727272"/>
<circle cx="306.0" cy="288.6" r="0.5" fill="#727272"/>
<circle cx="307.2" cy="306.7" r="0.4" fill="#727272"/>
<circle cx="315.6" cy="292.6" r="0.7" fill="#727272"/>
<circle cx="337.9" cy="315.5" r="0.4" fill="#727272"/>
<circle cx="318.1" cy="292.8" r="0.5" fill="#727272"/>
<circle cx="338.7" cy="272.0" r="0.7" fill="#727272"/>
<circle cx="281.6" cy="255.7" r="0.5" fill="#727272"/>
<circle cx="327.4" cy="306.4" r="0.6" fill="#727272"/>
<circle cx="301.5" cy="259.2" r="0.6" fill="#727272"/>
<circle cx="326.5" cy="275.6" r="0.6" fill="#727272"/>
<circle cx="323.8" cy="315.7" r="0.7" fill="#727272"/>
<circle cx="311.0" cy="307.6" r="0.6" fill="#727272"/>
<circle cx="300.6" cy="300.1" r="0.4" fill="#727272"/>
<circle cx="330.0" cy="312.7" r="0.6" fill="#727272"/>
<circle cx="327.7" cy="287.1" r="0.6" fill="#727272"/>
<circle cx="331.0" cy="288.9" r="0.6" fill="#727272"/>
<circle cx="310.3" cy="258.6" r="0.4" fill="#727272"/>
<circle cx="333.7" cy="270.8" r="0.4" fill="#727272"/>
<circle cx="326.6" cy="296.3" r="0.7" fill="#727272"/>
<circle cx="282.9" cy="307.4" r="0.6" fill="#727272"/>
<circle cx="317.3" cy="287.8" r="0.7" fill="#727272"/>
<circle cx="341.2" cy="287.7" r="0.5" fill="#727272"/>
<circle cx="341.7" cy="256.1" r="0.5" fill="#727272"/>
<circle cx="343.9" cy="280.7" r="0.4" fill="#727272"/>
<circle cx="342.4" cy="252.4" r="0.4" fill="#727272"/>
<circle cx="328.5" cy="303.3" r="0.5" fill="#727272"/>
<circle cx="305.5" cy="312.5" r="0.5" fill="#727272"/>
<circle cx="290.7" cy="286.9" r="0.7" fill="#727272"/>
<circle cx="344.9" cy="307.3" r="0.4" fill="#727272"/>
<circle cx="344.4" cy="305.4" r="0.6" fill="#727272"/>
<circle cx="300.6" cy="301.7" r="0.7" fill="#727272"/>
<circle cx="341.9" cy="251.1" r="0.7" fill="#727272"/>
<circle cx="339.1" cy="298.3" r="0.7" fill="#727272"/>
<circle cx="288.9" cy="292.1" r="0.6" fill="#727272"/>
<circle cx="344.3" cy="249.1" r="0.7" fill="#727272"/>
<circle cx="317.1" cy="288.5" r="0.4" fill="#727272"/>
<circle cx="302.8" cy="300.4" r="0.7" fill="#727272"/>
<circle cx="305.2" cy="320.8" r="0.7" fill="#727272"/>
<circle cx="283.3" cy="257.5" r="0.4" fill="#727272"/>
<circle cx="286.2" cy="277.7" r="0.5" fill="#727272"/>
<circle cx="297.7" cy="281.1" r="0.4" fill="#727272"/>
<circle cx="310.0" cy="287.7" r="0.7" fill="#727272"/>
<circle cx="319.0" cy="287.1" r="0.6" fill="#727272"/>
<circle cx="312.7" cy="310.2" r="0.5" fill="#727272"/>
<circle cx="335.4" cy="254.1" r="0.4" fill="#727272"/>
<circle cx="314.3" cy="300.3" r="0.7" fill="#727272"/>
<circle cx="341.6" cy="297.0" r="0.5" fill="#727272"/>
<circle cx="344.2" cy="264.7" r="0.5" fill="#727272"/>
<circle cx="303.1" cy="277.7" r="0.6" fill="#727272"/>
<circle cx="284.1" cy="286.9" r="0.6" fill="#727272"/>
<circle cx="341.6" cy="305.8" r="0.7" fill="#727272"/>
<circle cx="320.1" cy="270.4" r="0.5" fill="#727272"/>
<circle cx="311.7" cy="282.3" r="0.6" fill="#727272"/>
<circle cx="307.1" cy="255.7" r="0.6" fill="#727272"/>
<circle cx="292.7" cy="311.0" r="0.4" fill="#727272"/>
<circle cx="337.2" cy="307.8" r="0.7" fill="#727272"/>
<circle cx="338.2" cy="265.4" r="0.6" fill="#727272"/>
<circle cx="329.5" cy="320.1" r="0.4" fill="#727272"/>
<circle cx="302.2" cy="290.9" r="0.6" fill="#727272"/>
<circle cx="306.1" cy="303.2" r="0.6" fill="#727272"/>
<circle cx="302.3" cy="300.7" r="0.6" fill="#727272"/>
<circle cx="289.8" cy="306.0" r="0.4" fill="#727272"/>
<circle cx="319.6" cy="308.5" r="0.4" fill="#727272"/>
<circle cx="311.1" cy="320.0" r="0.6" fill="#727272"/>
<circle cx="345.9" cy="316.6" r="0.4" fill="#727272"/>
<circle cx="280.4" cy="264.3" r="0.7" fill="#727272"/>
<circle cx="316.0" cy="318.1" r="0.6" fill="#727272"/>
<circle cx="316.0" cy="254.0" r="0.6" fill="#727272"/>
<circle cx="326.7" cy="295.1" r="0.4" fill="#727272"/>
<circle cx="318.8" cy="316.4" r="0.7" fill="#727272"/>
<circle cx="338.8" cy="267.2" r="0.4" fill="#727272"/>
<circle cx="303.4" cy="250.4" r="0.6" fill="#727272"/>
<circle cx="297.3" cy="275.3" r="0.4" fill="#727272"/>
<circle cx="296.1" cy="300.0" r="0.7" fill="#727272"/>
<circle cx="286.6" cy="315.4" r="0.4" fill="#727272"/>
<circle cx="315.8" cy="267.1" r="0.4" fill="#727272"/>
<circle cx="289.9" cy="254.3" r="0.7" fill="#727272"/>
<circle cx="310.3" cy="265.7" r="0.5" fill="#727272"/>
<circle cx="342.1" cy="287.3" r="0.6" fill="#727272"/>
<circle cx="342.7" cy="273.3" r="0.7" fill="#727272"/>
<circle cx="325.0" cy="309.8" r="0.7" fill="#727272"/>
<circle cx="321.6" cy="290.3" r="0.5" fill="#727272"/>
<circle cx="286.0" cy="319.7" r="0.4" fill="#727272"/>
<circle cx="290.1" cy="315.5" r="0.7" fill="#727272"/>
<circle cx="303.2" cy="278.2" r="0.6" fill="#727272"/>
<circle cx="308.9" cy="248.8" r="0.4" fill="#727272"/>
<circle cx="335.3" cy="288.2" r="0.5" fill="#727272"/>
<circle cx="297.3" cy="307.2" r="0.5" fill="#727272"/>
<circle cx="328.0" cy="320.1" r="0.4" fill="#727272"/>
<circle cx="320.2" cy="275.1" r="0.4" fill="#727272"/>
<circle cx="284.3" cy="267.7" r="0.5" fill="#727272"/>
<circle cx="319.5" cy="319.8" r="0.5" fill="#727272"/>
<circle cx="342.5" cy="295.0" r="0.5" fill="#727272"/>
<circle cx="287.5" cy="264.8" r="0.7" fill="#727272"/>
<circle cx="319.3" cy="256.8" r="0.7" fill="#727272"/>
<circle cx="301.4" cy="283.1" r="0.5" fill="#727272"/>
<line x1="347" y1="248.6" x2="347" y2="321.2" stroke="#189498" stroke-width="1"/>
<line x1="280.3" y1="321.2" x2="347" y2="321.2" stroke="#189498" stroke-width="1"/>
<circle cx="353.2" cy="286.5" r="0.5" fill="#5a5a5a"/>
<circle cx="350.3" cy="284.7" r="0.6" fill="#4a4a4a"/>
<circle cx="352.0" cy="285.1" r="0.4" fill="#8a8a8a"/>
<circle cx="348.1" cy="268.0" r="0.4" fill="#6a6a6a"/>
<circle cx="348.2" cy="303.0" r="0.5" fill="#8a8a8a"/>
<circle cx="354.4" cy="279.0" r="0.6" fill="#5a5a5a"/>
<circle cx="353.7" cy="288.5" r="0.5" fill="#8a8a8a"/>
<circle cx="351.4" cy="320.8" r="0.5" fill="#5a5a5a"/>
<circle cx="350.2" cy="296.6" r="0.4" fill="#5a5a5a"/>
<circle cx="350.7" cy="314.4" r="0.6" fill="#8a8a8a"/>
<circle cx="354.2" cy="283.7" r="0.4" fill="#5a5a5a"/>
<circle cx="349.2" cy="315.8" r="0.4" fill="#6a6a6a"/>
<circle cx="348.1" cy="258.1" r="0.6" fill="#5a5a5a"/>
<circle cx="350.8" cy="326.5" r="0.4" fill="#8a8a8a"/>
<circle cx="350.4" cy="295.3" r="0.4" fill="#8a8a8a"/>
<circle cx="347.8" cy="290.9" r="0.4" fill="#5a5a5a"/>
<circle cx="352.9" cy="276.3" r="0.4" fill="#6a6a6a"/>
<circle cx="350.1" cy="298.5" r="0.4" fill="#6a6a6a"/>
<circle cx="353.1" cy="248.9" r="0.5" fill="#5a5a5a"/>
<circle cx="352.8" cy="316.7" r="0.4" fill="#4a4a4a"/>
<circle cx="352.3" cy="249.7" r="0.4" fill="#4a4a4a"/>
<circle cx="353.1" cy="280.0" r="0.6" fill="#8a8a8a"/>
<circle cx="350.7" cy="328.3" r="0.6" fill="#4a4a4a"/>
<circle cx="352.8" cy="305.0" r="0.6" fill="#5a5a5a"/>
<circle cx="347.8" cy="315.5" r="0.5" fill="#8a8a8a"/>
<circle cx="351.6" cy="310.3" r="0.4" fill="#8a8a8a"/>
<circle cx="349.6" cy="320.4" r="0.4" fill="#4a4a4a"/>
<circle cx="353.0" cy="254.4" r="0.4" fill="#8a8a8a"/>
<circle cx="351.3" cy="317.6" r="0.4" fill="#8a8a8a"/>
<circle cx="353.1" cy="258.3" r="0.5" fill="#4a4a4a"/>
<circle cx="348.2" cy="316.4" r="0.5" fill="#5a5a5a"/>
<circle cx="353.6" cy="258.3" r="0.6" fill="#6a6a6a"/>
<circle cx="347.6" cy="327.7" r="0.6" fill="#8a8a8a"/>
<circle cx="353.0" cy="313.1" r="0.6" fill="#5a5a5a"/>
<circle cx="353.0" cy="323.2" r="0.4" fill="#4a4a4a"/>
<circle cx="348.8" cy="267.3" r="0.5" fill="#5a5a5a"/>
<circle cx="354.6" cy="280.1" r="0.5" fill="#4a4a4a"/>
<circle cx="350.6" cy="258.9" r="0.4" fill="#8a8a8a"/>
<circle cx="352.5" cy="290.5" r="0.5" fill="#5a5a5a"/>
<circle cx="354.5" cy="265.2" r="0.6" fill="#8a8a8a"/>
<circle cx="354.2" cy="267.3" r="0.5" fill="#4a4a4a"/>
<circle cx="352.8" cy="294.7" r="0.6" fill="#8a8a8a"/>
<circle cx="350.3" cy="255.9" r="0.5" fill="#4a4a4a"/>
<circle cx="351.4" cy="287.7" r="0.6" fill="#4a4a4a"/>
<circle cx="352.5" cy="251.2" r="0.6" fill="#4a4a4a"/>
<circle cx="348.5" cy="319.9" r="0.6" fill="#5a5a5a"/>
<circle cx="351.6" cy="280.4" r="0.5" fill="#6a6a6a"/>
<circle cx="348.6" cy="318.2" r="0.4" fill="#8a8a8a"/>
<circle cx="350.7" cy="326.1" r="0.4" fill="#8a8a8a"/>
<circle cx="353.6" cy="266.1" r="0.5" fill="#5a5a5a"/>
<circle cx="349.7" cy="321.4" r="0.6" fill="#6a6a6a"/>
<circle cx="347.6" cy="327.5" r="0.4" fill="#5a5a5a"/>
<circle cx="348.4" cy="266.5" r="0.4" fill="#5a5a5a"/>
<circle cx="348.7" cy="261.5" r="0.5" fill="#6a6a6a"/>
<circle cx="350.3" cy="265.1" r="0.5" fill="#4a4a4a"/>
<circle cx="352.4" cy="317.5" r="0.5" fill="#5a5a5a"/>
<circle cx="349.4" cy="274.9" r="0.4" fill="#5a5a5a"/>
<circle cx="351.1" cy="273.4" r="0.6" fill="#8a8a8a"/>
<circle cx="347.6" cy="267.4" r="0.5" fill="#8a8a8a"/>
<circle cx="352.2" cy="315.6" r="0.4" fill="#8a8a8a"/>
<circle cx="348.5" cy="288.9" r="0.4" fill="#4a4a4a"/>
<circle cx="349.8" cy="298.4" r="0.6" fill="#5a5a5a"/>
<circle cx="351.8" cy="313.7" r="0.6" fill="#4a4a4a"/>
<circle cx="347.7" cy="316.0" r="0.4" fill="#6a6a6a"/>
<circle cx="353.8" cy="257.9" r="0.5" fill="#8a8a8a"/>
<circle cx="348.4" cy="294.0" r="0.5" fill="#8a8a8a"/>
<circle cx="354.2" cy="269.5" r="0.6" fill="#4a4a4a"/>
<circle cx="350.5" cy="269.0" r="0.4" fill="#8a8a8a"/>
<circle cx="350.6" cy="291.3" r="0.4" fill="#5a5a5a"/>
<circle cx="353.6" cy="260.7" r="0.6" fill="#5a5a5a"/>
<circle cx="353.1" cy="304.6" r="0.5" fill="#5a5a5a"/>
<circle cx="351.3" cy="262.2" r="0.4" fill="#5a5a5a"/>
<circle cx="348.6" cy="254.8" r="0.6" fill="#6a6a6a"/>
<circle cx="353.8" cy="301.4" r="0.4" fill="#4a4a4a"/>
<circle cx="348.0" cy="323.4" r="0.4" fill="#4a4a4a"/>
<circle cx="352.3" cy="294.9" r="0.4" fill="#4a4a4a"/>
<circle cx="353.0" cy="267.9" r="0.6" fill="#8a8a8a"/>
<circle cx="354.3" cy="278.7" r="0.6" fill="#8a8a8a"/>
<circle cx="350.6" cy="292.1" r="0.6" fill="#5a5a5a"/>
<circle cx="351.4" cy="306.3" r="0.5" fill="#4a4a4a"/>
<circle cx="352.9" cy="266.0" r="0.5" fill="#8a8a8a"/>
<circle cx="354.0" cy="283.3" r="0.4" fill="#8a8a8a"/>
<circle cx="352.7" cy="254.4" r="0.5" fill="#8a8a8a"/>
<circle cx="352.5" cy="306.9" r="0.6" fill="#8a8a8a"/>
<circle cx="349.4" cy="302.5" r="0.6" fill="#8a8a8a"/>
<circle cx="354.2" cy="284.6" r="0.6" fill="#6a6a6a"/>
<circle cx="347.8" cy="286.4" r="0.5" fill="#6a6a6a"/>
<circle cx="348.3" cy="287.6" r="0.4" fill="#4a4a4a"/>
<circle cx="350.7" cy="326.7" r="0.6" fill="#8a8a8a"/>
<circle cx="349.5" cy="275.8" r="0.5" fill="#5a5a5a"/>
<circle cx="347.7" cy="293.6" r="0.5" fill="#6a6a6a"/>
<circle cx="348.7" cy="311.3" r="0.6" fill="#6a6a6a"/>
<circle cx="350.5" cy="297.3" r="0.4" fill="#4a4a4a"/>
<circle cx="348.5" cy="265.2" r="0.4" fill="#6a6a6a"/>
<circle cx="350.4" cy="279.6" r="0.6" fill="#8a8a8a"/>
<circle cx="351.6" cy="326.2" r="0.5" fill="#5a5a5a"/>
<circle cx="352.4" cy="306.6" r="0.6" fill="#5a5a5a"/>
<circle cx="354.6" cy="294.0" r="0.5" fill="#6a6a6a"/>
<circle cx="350.5" cy="288.0" r="0.6" fill="#8a8a8a"/>
<circle cx="350.2" cy="270.8" r="0.4" fill="#5a5a5a"/>
<circle cx="351.0" cy="262.9" r="0.4" fill="#4a4a4a"/>
<circle cx="350.9" cy="318.3" r="0.6" fill="#8a8a8a"/>
<circle cx="353.1" cy="306.0" r="0.4" fill="#4a4a4a"/>
<circle cx="353.0" cy="256.7" r="0.4" fill="#8a8a8a"/>
<circle cx="350.9" cy="320.4" r="0.5" fill="#8a8a8a"/>
<circle cx="349.4" cy="260.7" r="0.4" fill="#8a8a8a"/>
<circle cx="347.9" cy="261.8" r="0.6" fill="#5a5a5a"/>
<circle cx="351.1" cy="297.1" r="0.5" fill="#5a5a5a"/>
<circle cx="349.5" cy="249.1" r="0.5" fill="#8a8a8a"/>
<circle cx="352.7" cy="307.1" r="0.6" fill="#5a5a5a"/>
<circle cx="353.5" cy="271.5" r="0.5" fill="#4a4a4a"/>
<circle cx="351.8" cy="252.7" r="0.4" fill="#5a5a5a"/>
<circle cx="352.1" cy="298.2" r="0.4" fill="#8a8a8a"/>
<circle cx="350.9" cy="259.9" r="0.5" fill="#6a6a6a"/>
<circle cx="349.6" cy="323.5" r="0.5" fill="#4a4a4a"/>
<circle cx="354.5" cy="254.1" r="0.5" fill="#8a8a8a"/>
<circle cx="350.7" cy="269.3" r="0.4" fill="#4a4a4a"/>
<circle cx="349.3" cy="327.0" r="0.5" fill="#5a5a5a"/>
<circle cx="348.8" cy="273.9" r="0.6" fill="#6a6a6a"/>
<circle cx="350.3" cy="263.2" r="0.5" fill="#5a5a5a"/>
<circle cx="354.3" cy="281.0" r="0.4" fill="#8a8a8a"/>
<circle cx="348.1" cy="255.3" r="0.4" fill="#5a5a5a"/>
<circle cx="352.8" cy="257.0" r="0.4" fill="#5a5a5a"/>
<circle cx="349.9" cy="301.1" r="0.6" fill="#8a8a8a"/>
<circle cx="350.1" cy="306.3" r="0.6" fill="#4a4a4a"/>
<circle cx="348.5" cy="289.5" r="0.6" fill="#8a8a8a"/>
<circle cx="352.8" cy="315.9" r="0.5" fill="#4a4a4a"/>
<circle cx="352.4" cy="258.3" r="0.5" fill="#4a4a4a"/>
<circle cx="348.0" cy="269.8" r="0.5" fill="#4a4a4a"/>
<circle cx="353.7" cy="258.6" r="0.4" fill="#8a8a8a"/>
<circle cx="351.8" cy="258.1" r="0.6" fill="#5a5a5a"/>
<circle cx="348.5" cy="297.7" r="0.4" fill="#4a4a4a"/>
<circle cx="348.1" cy="262.7" r="0.4" fill="#6a6a6a"/>
<circle cx="353.7" cy="257.6" r="0.4" fill="#6a6a6a"/>
<circle cx="351.5" cy="297.6" r="0.4" fill="#4a4a4a"/>
<circle cx="351.8" cy="298.0" r="0.4" fill="#4a4a4a"/>
<circle cx="348.3" cy="263.0" r="0.4" fill="#4a4a4a"/>
<circle cx="352.8" cy="271.8" r="0.6" fill="#8a8a8a"/>
<circle cx="350.4" cy="287.0" r="0.6" fill="#4a4a4a"/>
<circle cx="354.0" cy="254.2" r="0.4" fill="#8a8a8a"/>
<circle cx="350.2" cy="283.6" r="0.6" fill="#8a8a8a"/>
<circle cx="352.1" cy="263.2" r="0.6" fill="#6a6a6a"/>
<circle cx="350.9" cy="306.0" r="0.6" fill="#4a4a4a"/>
<circle cx="349.4" cy="291.6" r="0.5" fill="#8a8a8a"/>
<circle cx="354.0" cy="256.1" r="0.5" fill="#4a4a4a"/>
<circle cx="348.5" cy="250.9" r="0.5" fill="#5a5a5a"/>
<circle cx="353.0" cy="288.8" r="0.5" fill="#6a6a6a"/>
<circle cx="349.4" cy="316.0" r="0.4" fill="#6a6a6a"/>
<circle cx="349.8" cy="295.8" r="0.4" fill="#4a4a4a"/>
<circle cx="353.6" cy="303.3" r="0.6" fill="#6a6a6a"/>
<circle cx="350.7" cy="303.6" r="0.5" fill="#5a5a5a"/>
<circle cx="350.2" cy="311.9" r="0.6" fill="#8a8a8a"/>
<circle cx="353.1" cy="258.0" r="0.4" fill="#6a6a6a"/>
<circle cx="349.7" cy="300.6" r="0.5" fill="#8a8a8a"/>
<circle cx="351.5" cy="322.5" r="0.4" fill="#8a8a8a"/>
<circle cx="351.2" cy="271.2" r="0.4" fill="#8a8a8a"/>
<circle cx="354.2" cy="287.9" r="0.5" fill="#4a4a4a"/>
<circle cx="350.1" cy="264.5" r="0.6" fill="#4a4a4a"/>
<circle cx="351.4" cy="277.4" r="0.4" fill="#5a5a5a"/>
<circle cx="348.2" cy="251.1" r="0.6" fill="#8a8a8a"/>
<circle cx="348.3" cy="298.5" r="0.4" fill="#4a4a4a"/>
<circle cx="350.3" cy="290.5" r="0.6" fill="#4a4a4a"/>
<circle cx="348.6" cy="276.4" r="0.6" fill="#4a4a4a"/>
<circle cx="353.0" cy="264.1" r="0.5" fill="#4a4a4a"/>
<circle cx="350.8" cy="313.8" r="0.6" fill="#6a6a6a"/>
<circle cx="348.6" cy="318.3" r="0.4" fill="#6a6a6a"/>
<circle cx="348.4" cy="323.9" r="0.4" fill="#8a8a8a"/>
<circle cx="351.9" cy="275.0" r="0.4" fill="#6a6a6a"/>
<circle cx="353.9" cy="305.8" r="0.4" fill="#5a5a5a"/>
<circle cx="353.0" cy="254.7" r="0.5" fill="#8a8a8a"/>
<circle cx="351.0" cy="255.1" r="0.6" fill="#5a5a5a"/>
<circle cx="352.7" cy="260.1" r="0.5" fill="#6a6a6a"/>
<circle cx="352.2" cy="305.7" r="0.6" fill="#8a8a8a"/>
<circle cx="349.5" cy="282.4" r="0.4" fill="#5a5a5a"/>
<circle cx="348.7" cy="287.6" r="0.4" fill="#8a8a8a"/>
<circle cx="352.9" cy="287.1" r="0.5" fill="#4a4a4a"/>
<circle cx="339.1" cy="326.4" r="0.4" fill="#4a4a4a"/>
<circle cx="286.9" cy="322.9" r="0.4" fill="#6a6a6a"/>
<circle cx="347.5" cy="328.6" r="0.5" fill="#8a8a8a"/>
<circle cx="334.2" cy="323.3" r="0.4" fill="#5a5a5a"/>
<circle cx="327.1" cy="322.7" r="0.5" fill="#6a6a6a"/>
<circle cx="337.6" cy="325.9" r="0.5" fill="#8a8a8a"/>
<circle cx="289.1" cy="328.6" r="0.6" fill="#4a4a4a"/>
<circle cx="304.1" cy="322.1" r="0.6" fill="#4a4a4a"/>
<circle cx="305.3" cy="325.3" r="0.5" fill="#5a5a5a"/>
<circle cx="309.9" cy="322.6" r="0.6" fill="#5a5a5a"/>
<circle cx="346.4" cy="326.5" r="0.6" fill="#6a6a6a"/>
<circle cx="336.4" cy="327.9" r="0.5" fill="#5a5a5a"/>
<circle cx="281.3" cy="324.5" r="0.6" fill="#4a4a4a"/>
<circle cx="326.4" cy="325.3" r="0.4" fill="#8a8a8a"/>
<circle cx="284.0" cy="322.3" r="0.6" fill="#5a5a5a"/>
<circle cx="284.6" cy="326.6" r="0.6" fill="#5a5a5a"/>
<circle cx="284.6" cy="322.0" r="0.5" fill="#6a6a6a"/>
<circle cx="321.0" cy="323.3" r="0.5" fill="#4a4a4a"/>
<circle cx="300.0" cy="325.7" r="0.5" fill="#4a4a4a"/>
<circle cx="331.6" cy="324.4" r="0.4" fill="#6a6a6a"/>
<circle cx="328.7" cy="326.1" r="0.4" fill="#5a5a5a"/>
<circle cx="326.2" cy="326.8" r="0.5" fill="#5a5a5a"/>
<circle cx="346.6" cy="324.0" r="0.6" fill="#6a6a6a"/>
<circle cx="333.3" cy="324.4" r="0.4" fill="#6a6a6a"/>
<circle cx="281.1" cy="327.4" r="0.5" fill="#4a4a4a"/>
<circle cx="285.6" cy="328.3" r="0.6" fill="#6a6a6a"/>
<circle cx="312.2" cy="328.8" r="0.6" fill="#5a5a5a"/>
<circle cx="323.1" cy="322.2" r="0.4" fill="#5a5a5a"/>
<circle cx="331.4" cy="328.8" r="0.5" fill="#5a5a5a"/>
<circle cx="328.5" cy="325.7" r="0.5" fill="#5a5a5a"/>
<circle cx="285.1" cy="325.3" r="0.5" fill="#5a5a5a"/>
<circle cx="312.8" cy="325.7" r="0.4" fill="#4a4a4a"/>
<circle cx="311.5" cy="327.0" r="0.5" fill="#5a5a5a"/>
<circle cx="347.0" cy="324.4" r="0.6" fill="#4a4a4a"/>
<circle cx="294.6" cy="328.2" r="0.6" fill="#8a8a8a"/>
<circle cx="299.1" cy="325.6" r="0.4" fill="#8a8a8a"/>
<circle cx="294.3" cy="325.6" r="0.5" fill="#4a4a4a"/>
<circle cx="309.5" cy="322.2" r="0.6" fill="#5a5a5a"/>
<circle cx="283.5" cy="326.5" r="0.5" fill="#5a5a5a"/>
<circle cx="314.2" cy="322.6" r="0.5" fill="#8a8a8a"/>
<circle cx="328.2" cy="324.2" r="0.4" fill="#6a6a6a"/>
<circle cx="344.4" cy="323.2" r="0.6" fill="#5a5a5a"/>
<circle cx="342.3" cy="323.2" r="0.4" fill="#6a6a6a"/>
<circle cx="303.7" cy="327.8" r="0.5" fill="#5a5a5a"/>
<circle cx="342.0" cy="323.3" r="0.5" fill="#4a4a4a"/>
<circle cx="340.5" cy="325.3" r="0.5" fill="#6a6a6a"/>
<circle cx="295.5" cy="326.0" r="0.6" fill="#6a6a6a"/>
<circle cx="321.8" cy="328.8" r="0.4" fill="#8a8a8a"/>
<circle cx="300.3" cy="325.3" r="0.4" fill="#6a6a6a"/>
<circle cx="321.6" cy="328.2" r="0.4" fill="#6a6a6a"/>
<circle cx="341.3" cy="323.5" r="0.4" fill="#5a5a5a"/>
<circle cx="311.5" cy="326.8" r="0.4" fill="#6a6a6a"/>
<circle cx="334.8" cy="326.7" r="0.6" fill="#8a8a8a"/>
<circle cx="331.8" cy="325.7" r="0.5" fill="#4a4a4a"/>
<circle cx="312.4" cy="328.5" r="0.6" fill="#4a4a4a"/>
<circle cx="285.5" cy="324.7" r="0.5" fill="#4a4a4a"/>
<circle cx="301.3" cy="328.9" r="0.4" fill="#6a6a6a"/>
<circle cx="294.6" cy="322.7" r="0.5" fill="#5a5a5a"/>
<circle cx="345.0" cy="328.1" r="0.5" fill="#5a5a5a"/>
<circle cx="282.1" cy="322.7" r="0.5" fill="#6a6a6a"/>
<circle cx="321.8" cy="326.3" r="0.4" fill="#8a8a8a"/>
<circle cx="309.0" cy="322.8" r="0.5" fill="#8a8a8a"/>
<circle cx="294.1" cy="323.8" r="0.6" fill="#8a8a8a"/>
<circle cx="319.5" cy="327.3" r="0.4" fill="#6a6a6a"/>
<circle cx="336.2" cy="323.3" r="0.6" fill="#5a5a5a"/>
<circle cx="332.1" cy="322.2" r="0.5" fill="#5a5a5a"/>
<circle cx="343.1" cy="327.3" r="0.5" fill="#5a5a5a"/>
<circle cx="292.9" cy="324.0" r="0.4" fill="#4a4a4a"/>
<circle cx="295.0" cy="322.8" r="0.6" fill="#4a4a4a"/>
<circle cx="316.9" cy="324.4" r="0.5" fill="#8a8a8a"/>
<circle cx="343.5" cy="324.6" r="0.5" fill="#4a4a4a"/>
<circle cx="326.9" cy="325.8" r="0.6" fill="#8a8a8a"/>
<circle cx="319.3" cy="324.3" r="0.4" fill="#6a6a6a"/>
<circle cx="332.3" cy="326.5" r="0.6" fill="#8a8a8a"/>
<circle cx="284.1" cy="326.6" r="0.4" fill="#4a4a4a"/>
<circle cx="329.8" cy="323.0" r="0.5" fill="#4a4a4a"/>
<circle cx="282.0" cy="323.0" r="0.6" fill="#4a4a4a"/>
<circle cx="324.7" cy="325.6" r="0.5" fill="#4a4a4a"/>
<circle cx="344.7" cy="325.3" r="0.4" fill="#4a4a4a"/>
<circle cx="336.5" cy="325.2" r="0.4" fill="#5a5a5a"/>
<circle cx="307.7" cy="322.3" r="0.4" fill="#8a8a8a"/>
<circle cx="283.4" cy="325.1" r="0.6" fill="#8a8a8a"/>
<circle cx="312.8" cy="322.4" r="0.6" fill="#8a8a8a"/>
<circle cx="300.3" cy="326.7" r="0.5" fill="#8a8a8a"/>
<circle cx="340.4" cy="327.7" r="0.5" fill="#5a5a5a"/>
<circle cx="313.6" cy="322.2" r="0.4" fill="#4a4a4a"/>
<circle cx="303.2" cy="327.7" r="0.6" fill="#8a8a8a"/>
<circle cx="334.2" cy="325.1" r="0.5" fill="#8a8a8a"/>
<circle cx="333.8" cy="326.5" r="0.4" fill="#5a5a5a"/>
<circle cx="346.0" cy="323.5" r="0.6" fill="#4a4a4a"/>
<circle cx="336.9" cy="322.4" r="0.4" fill="#5a5a5a"/>
<circle cx="289.5" cy="327.2" r="0.6" fill="#8a8a8a"/>
<circle cx="282.2" cy="324.4" r="0.6" fill="#4a4a4a"/>
<circle cx="308.4" cy="323.1" r="0.6" fill="#5a5a5a"/>
<circle cx="328.2" cy="327.4" r="0.6" fill="#8a8a8a"/>
<circle cx="331.5" cy="325.7" r="0.5" fill="#6a6a6a"/>
<circle cx="287.0" cy="322.5" r="0.5" fill="#5a5a5a"/>
<circle cx="330.7" cy="327.6" r="0.4" fill="#8a8a8a"/>
<circle cx="338.0" cy="323.1" r="0.6" fill="#6a6a6a"/>
<circle cx="315.0" cy="327.0" r="0.5" fill="#8a8a8a"/>
<circle cx="300.7" cy="328.0" r="0.4" fill="#8a8a8a"/>
<circle cx="308.6" cy="323.4" r="0.5" fill="#8a8a8a"/>
<circle cx="327.8" cy="324.4" r="0.4" fill="#8a8a8a"/>
<circle cx="294.8" cy="324.3" r="0.4" fill="#6a6a6a"/>
<circle cx="294.3" cy="322.3" r="0.5" fill="#5a5a5a"/>
<circle cx="290.7" cy="327.9" r="0.4" fill="#5a5a5a"/>
<circle cx="325.1" cy="328.4" r="0.4" fill="#6a6a6a"/>
<circle cx="325.0" cy="323.2" r="0.6" fill="#8a8a8a"/>
<circle cx="296.1" cy="326.1" r="0.6" fill="#4a4a4a"/>
<circle cx="315.3" cy="326.5" r="0.6" fill="#4a4a4a"/>
<circle cx="310.3" cy="325.8" r="0.6" fill="#5a5a5a"/>
<circle cx="315.9" cy="324.8" r="0.6" fill="#4a4a4a"/>
<circle cx="330.3" cy="322.9" r="0.4" fill="#8a8a8a"/>
<circle cx="299.5" cy="325.2" r="0.6" fill="#4a4a4a"/>
<circle cx="299.1" cy="326.3" r="0.5" fill="#8a8a8a"/>
<circle cx="312.3" cy="325.6" r="0.4" fill="#5a5a5a"/>
<circle cx="312.5" cy="327.6" r="0.5" fill="#4a4a4a"/>
<circle cx="329.4" cy="327.0" r="0.6" fill="#6a6a6a"/>
<circle cx="283.0" cy="328.7" r="0.4" fill="#5a5a5a"/>
<circle cx="282.8" cy="327.3" r="0.4" fill="#5a5a5a"/>
<circle cx="330.9" cy="321.9" r="0.4" fill="#4a4a4a"/>
<circle cx="304.5" cy="322.4" r="0.4" fill="#8a8a8a"/>
<circle cx="303.7" cy="327.1" r="0.6" fill="#8a8a8a"/>
<circle cx="337.0" cy="323.0" r="0.4" fill="#4a4a4a"/>
<circle cx="318.4" cy="325.6" r="0.4" fill="#5a5a5a"/>
<circle cx="302.0" cy="323.4" r="0.5" fill="#5a5a5a"/>
<circle cx="321.6" cy="324.1" r="0.6" fill="#6a6a6a"/>
<circle cx="343.2" cy="324.4" r="0.5" fill="#6a6a6a"/>
<circle cx="314.5" cy="326.4" r="0.6" fill="#5a5a5a"/>
<circle cx="343.5" cy="326.1" r="0.4" fill="#6a6a6a"/>
<circle cx="295.6" cy="327.7" r="0.4" fill="#4a4a4a"/>
<circle cx="322.8" cy="325.7" r="0.5" fill="#4a4a4a"/>
<circle cx="280.9" cy="325.5" r="0.6" fill="#4a4a4a"/>
<circle cx="290.9" cy="328.4" r="0.5" fill="#6a6a6a"/>
<circle cx="294.3" cy="323.5" r="0.6" fill="#6a6a6a"/>
<circle cx="339.5" cy="327.1" r="0.5" fill="#6a6a6a"/>
<circle cx="317.6" cy="321.9" r="0.6" fill="#4a4a4a"/>
<circle cx="315.3" cy="325.4" r="0.6" fill="#6a6a6a"/>
<circle cx="341.5" cy="326.3" r="0.4" fill="#4a4a4a"/>
<circle cx="335.4" cy="328.2" r="0.5" fill="#6a6a6a"/>
<circle cx="328.2" cy="328.0" r="0.4" fill="#4a4a4a"/>
<circle cx="334.4" cy="323.6" r="0.6" fill="#4a4a4a"/>
<circle cx="326.5" cy="325.2" r="0.6" fill="#6a6a6a"/>
<circle cx="291.7" cy="325.6" r="0.6" fill="#8a8a8a"/>
<circle cx="313.9" cy="325.5" r="0.5" fill="#5a5a5a"/>
<circle cx="313.7" cy="322.9" r="0.6" fill="#6a6a6a"/>
<circle cx="299.0" cy="322.4" r="0.6" fill="#5a5a5a"/>
<circle cx="315.2" cy="328.4" r="0.5" fill="#6a6a6a"/>
<circle cx="294.3" cy="325.2" r="0.5" fill="#4a4a4a"/>
<circle cx="297.6" cy="327.7" r="0.5" fill="#4a4a4a"/>
<rect x="355" y="248.6" width="5" height="86.5" fill="#6a6a6a" stroke="none" stroke-width="1" />
<rect x="280.3" y="329" width="79.7" height="6.3" fill="#6a6a6a" stroke="none" stroke-width="1" />
<polyline points="355,248.6 355,329 280.3,329" fill="none" stroke="#a810a8" stroke-width="1.1"/>
<line x1="355" y1="329" x2="360" y2="335.3" stroke="#9a9a9a" stroke-width="0.7"/>
<polyline points="360,248.6 360,335.3 280.3,335.3" fill="none" stroke="#a810a8" stroke-width="1.3"/>
<line x1="280.3" y1="248.6" x2="280.3" y2="409.5" stroke="#7c7c7c" stroke-width="1"/>
<polyline points="280.3,248.6 428.5,248.6 428.5,409.5 280.3,409.5" fill="none" stroke="#7c7c7c" stroke-width="1"/>
<polyline points="343.5,302 354,293.3 386,293.3" fill="none" stroke="#909090" stroke-width="0.9"/>
<text x="386.5" y="295.40000000000003" font-size="5.6" fill="#e40a0a" font-weight="bold" stroke="#e40a0a" stroke-width="0.1" textLength="18.5" lengthAdjust="spacingAndGlyphs">HBMW</text>
<polyline points="350.6,313.5 363.6,301 386,301" fill="none" stroke="#909090" stroke-width="0.9"/>
<text x="386.5" y="303.1" font-size="5.6" fill="#e40a0a" font-weight="bold" stroke="#e40a0a" stroke-width="0.1" textLength="21.5" lengthAdjust="spacingAndGlyphs">HBMW</text>
<polyline points="356.5,316.3 364.8,308 386,308" fill="none" stroke="#909090" stroke-width="0.9"/>
<text x="386.5" y="310.1" font-size="5.6" fill="#e40a0a" font-weight="bold" stroke="#e40a0a" stroke-width="0.1" textLength="31.5" lengthAdjust="spacingAndGlyphs">HBMWEHK</text>
<polyline points="360,320.6 366,314.6 386,314.6" fill="none" stroke="#909090" stroke-width="0.9"/>
<text x="386.5" y="316.70000000000005" font-size="5.6" fill="#e40a0a" font-weight="bold" stroke="#e40a0a" stroke-width="0.1" textLength="31.5" lengthAdjust="spacingAndGlyphs">HBMWEHK</text>
<polyline points="356.7,333.4 366.8,340.6 386,340.6" fill="none" stroke="#909090" stroke-width="0.9"/>
<text x="386.5" y="342.70000000000005" font-size="5.6" fill="#e40a0a" font-weight="bold" stroke="#e40a0a" stroke-width="0.1" textLength="26.5" lengthAdjust="spacingAndGlyphs">HBMWEH</text>
<polyline points="350,333.4 363.5,346.2 386,346.2" fill="none" stroke="#909090" stroke-width="0.9"/>
<text x="386.5" y="348.3" font-size="5.6" fill="#e40a0a" font-weight="bold" stroke="#e40a0a" stroke-width="0.1" textLength="26.5" lengthAdjust="spacingAndGlyphs">HBMWEH</text>
<circle cx="354.5" cy="415.6" r="5.6" fill="none" stroke="#8a8a8a" stroke-width="0.9"/>
<line x1="348.9" y1="415.6" x2="428.5" y2="415.6" stroke="#858585" stroke-width="0.9"/>
<text x="354.5" y="414.3" font-size="2.8" fill="#e00000" text-anchor="middle" >5</text>
<text x="354.5" y="419.20000000000005" font-size="2.8" fill="#e00000" text-anchor="middle" >502</text>
<text x="362" y="415.20000000000005" font-size="6.6" fill="#e00808" font-weight="bold" textLength="56.60000000000002" lengthAdjust="spacingAndGlyphs">HBMWEHKNBMH</text>
<text x="417.5" y="421.40000000000003" font-size="4.8" fill="#b80000" font-weight="bold" textLength="8" lengthAdjust="spacing">1:5</text>
<rect x="436.3" y="248.6" width="149.3" height="30" fill="url(#conc)" stroke="#7a7a7a" stroke-width="0.8" />
<circle cx="555.6" cy="272.5" r="0.5" fill="#727272"/>
<circle cx="474.7" cy="276.5" r="0.6" fill="#727272"/>
<circle cx="515.4" cy="268.6" r="0.6" fill="#727272"/>
<circle cx="538.0" cy="251.9" r="0.4" fill="#727272"/>
<circle cx="544.5" cy="261.0" r="0.4" fill="#727272"/>
<circle cx="559.3" cy="256.1" r="0.5" fill="#727272"/>
<circle cx="548.8" cy="269.9" r="0.4" fill="#727272"/>
<circle cx="544.7" cy="249.8" r="0.4" fill="#727272"/>
<circle cx="523.0" cy="269.3" r="0.6" fill="#727272"/>
<circle cx="470.3" cy="274.5" r="0.7" fill="#727272"/>
<circle cx="520.4" cy="252.6" r="0.5" fill="#727272"/>
<circle cx="573.0" cy="251.0" r="0.4" fill="#727272"/>
<circle cx="453.7" cy="268.6" r="0.6" fill="#727272"/>
<circle cx="569.0" cy="252.5" r="0.6" fill="#727272"/>
<circle cx="548.6" cy="265.9" r="0.4" fill="#727272"/>
<circle cx="528.4" cy="260.2" r="0.6" fill="#727272"/>
<circle cx="480.0" cy="278.6" r="0.7" fill="#727272"/>
<circle cx="563.7" cy="277.8" r="0.4" fill="#727272"/>
<circle cx="463.5" cy="278.3" r="0.4" fill="#727272"/>
<circle cx="479.3" cy="259.7" r="0.6" fill="#727272"/>
<circle cx="536.8" cy="250.5" r="0.7" fill="#727272"/>
<circle cx="567.7" cy="265.8" r="0.7" fill="#727272"/>
<circle cx="485.0" cy="252.5" r="0.7" fill="#727272"/>
<circle cx="478.4" cy="256.8" r="0.5" fill="#727272"/>
<circle cx="531.3" cy="264.8" r="0.4" fill="#727272"/>
<circle cx="573.6" cy="252.4" r="0.6" fill="#727272"/>
<circle cx="438.8" cy="274.1" r="0.6" fill="#727272"/>
<circle cx="584.5" cy="257.7" r="0.4" fill="#727272"/>
<circle cx="562.3" cy="255.1" r="0.4" fill="#727272"/>
<circle cx="526.0" cy="273.8" r="0.5" fill="#727272"/>
<circle cx="559.2" cy="263.9" r="0.4" fill="#727272"/>
<circle cx="456.8" cy="269.6" r="0.4" fill="#727272"/>
<circle cx="525.5" cy="263.4" r="0.5" fill="#727272"/>
<circle cx="533.5" cy="257.6" r="0.7" fill="#727272"/>
<circle cx="448.5" cy="250.0" r="0.6" fill="#727272"/>
<circle cx="469.3" cy="276.1" r="0.4" fill="#727272"/>
<circle cx="523.6" cy="261.3" r="0.5" fill="#727272"/>
<circle cx="548.4" cy="257.5" r="0.7" fill="#727272"/>
<circle cx="470.9" cy="262.9" r="0.5" fill="#727272"/>
<circle cx="494.0" cy="278.3" r="0.5" fill="#727272"/>
<circle cx="445.4" cy="275.2" r="0.5" fill="#727272"/>
<circle cx="524.5" cy="263.4" r="0.6" fill="#727272"/>
<circle cx="477.8" cy="264.1" r="0.5" fill="#727272"/>
<circle cx="504.6" cy="260.3" r="0.5" fill="#727272"/>
<circle cx="467.5" cy="263.8" r="0.4" fill="#727272"/>
<circle cx="505.0" cy="263.9" r="0.7" fill="#727272"/>
<circle cx="567.9" cy="264.1" r="0.4" fill="#727272"/>
<circle cx="537.8" cy="252.2" r="0.6" fill="#727272"/>
<circle cx="497.6" cy="257.2" r="0.5" fill="#727272"/>
<circle cx="509.6" cy="257.4" r="0.5" fill="#727272"/>
<circle cx="545.9" cy="259.7" r="0.6" fill="#727272"/>
<circle cx="460.1" cy="267.5" r="0.7" fill="#727272"/>
<circle cx="514.3" cy="251.9" r="0.6" fill="#727272"/>
<circle cx="540.0" cy="262.8" r="0.7" fill="#727272"/>
<circle cx="501.8" cy="259.5" r="0.7" fill="#727272"/>
<circle cx="569.8" cy="276.1" r="0.6" fill="#727272"/>
<circle cx="462.5" cy="259.7" r="0.4" fill="#727272"/>
<circle cx="444.7" cy="258.1" r="0.5" fill="#727272"/>
<circle cx="535.6" cy="263.4" r="0.7" fill="#727272"/>
<circle cx="470.0" cy="258.1" r="0.4" fill="#727272"/>
<circle cx="485.3" cy="249.3" r="0.5" fill="#727272"/>
<circle cx="548.9" cy="274.9" r="0.6" fill="#727272"/>
<circle cx="570.6" cy="256.1" r="0.7" fill="#727272"/>
<circle cx="458.2" cy="277.6" r="0.4" fill="#727272"/>
<circle cx="518.2" cy="250.1" r="0.6" fill="#727272"/>
<circle cx="565.6" cy="267.6" r="0.5" fill="#727272"/>
<circle cx="528.6" cy="267.9" r="0.5" fill="#727272"/>
<circle cx="547.9" cy="273.0" r="0.5" fill="#727272"/>
<circle cx="463.1" cy="255.8" r="0.4" fill="#727272"/>
<circle cx="563.1" cy="270.3" r="0.5" fill="#727272"/>
<circle cx="464.4" cy="253.8" r="0.4" fill="#727272"/>
<circle cx="479.0" cy="277.7" r="0.5" fill="#727272"/>
<circle cx="535.6" cy="251.2" r="0.6" fill="#727272"/>
<circle cx="451.0" cy="272.3" r="0.6" fill="#727272"/>
<circle cx="555.5" cy="258.7" r="0.4" fill="#727272"/>
<circle cx="441.9" cy="265.1" r="0.5" fill="#727272"/>
<circle cx="512.0" cy="271.5" r="0.5" fill="#727272"/>
<circle cx="492.5" cy="269.3" r="0.4" fill="#727272"/>
<circle cx="459.4" cy="270.4" r="0.4" fill="#727272"/>
<circle cx="524.6" cy="270.5" r="0.5" fill="#727272"/>
<circle cx="550.5" cy="270.2" r="0.4" fill="#727272"/>
<circle cx="465.8" cy="249.9" r="0.6" fill="#727272"/>
<circle cx="540.0" cy="248.9" r="0.6" fill="#727272"/>
<circle cx="567.6" cy="252.5" r="0.7" fill="#727272"/>
<circle cx="574.5" cy="268.1" r="0.7" fill="#727272"/>
<circle cx="551.1" cy="263.3" r="0.4" fill="#727272"/>
<circle cx="464.4" cy="263.5" r="0.5" fill="#727272"/>
<circle cx="486.3" cy="260.4" r="0.5" fill="#727272"/>
<circle cx="564.4" cy="272.5" r="0.5" fill="#727272"/>
<circle cx="568.5" cy="262.3" r="0.5" fill="#727272"/>
<circle cx="449.1" cy="255.1" r="0.4" fill="#727272"/>
<circle cx="552.9" cy="260.2" r="0.5" fill="#727272"/>
<circle cx="573.2" cy="269.7" r="0.7" fill="#727272"/>
<circle cx="533.8" cy="259.0" r="0.4" fill="#727272"/>
<circle cx="440.8" cy="254.1" r="0.6" fill="#727272"/>
<circle cx="535.3" cy="271.3" r="0.5" fill="#727272"/>
<circle cx="557.4" cy="252.9" r="0.5" fill="#727272"/>
<circle cx="464.6" cy="251.3" r="0.6" fill="#727272"/>
<circle cx="575.6" cy="278.6" r="0.6" fill="#727272"/>
<circle cx="531.9" cy="275.9" r="0.4" fill="#727272"/>
<circle cx="480.8" cy="250.3" r="0.6" fill="#727272"/>
<circle cx="516.1" cy="250.8" r="0.7" fill="#727272"/>
<circle cx="544.2" cy="251.1" r="0.4" fill="#727272"/>
<circle cx="570.4" cy="266.4" r="0.4" fill="#727272"/>
<circle cx="531.2" cy="271.3" r="0.6" fill="#727272"/>
<circle cx="515.0" cy="272.8" r="0.5" fill="#727272"/>
<circle cx="469.1" cy="261.2" r="0.6" fill="#727272"/>
<circle cx="576.2" cy="265.4" r="0.7" fill="#727272"/>
<circle cx="500.0" cy="268.3" r="0.4" fill="#727272"/>
<circle cx="448.1" cy="250.4" r="0.4" fill="#727272"/>
<circle cx="456.0" cy="272.9" r="0.4" fill="#727272"/>
<circle cx="584.4" cy="265.8" r="0.6" fill="#727272"/>
<circle cx="514.7" cy="249.5" r="0.4" fill="#727272"/>
<circle cx="464.9" cy="254.4" r="0.4" fill="#727272"/>
<circle cx="450.1" cy="263.0" r="0.6" fill="#727272"/>
<circle cx="555.3" cy="272.4" r="0.5" fill="#727272"/>
<circle cx="448.0" cy="266.3" r="0.4" fill="#727272"/>
<circle cx="552.4" cy="252.0" r="0.6" fill="#727272"/>
<circle cx="575.6" cy="256.2" r="0.4" fill="#727272"/>
<circle cx="526.5" cy="256.3" r="0.7" fill="#727272"/>
<circle cx="481.0" cy="265.2" r="0.4" fill="#727272"/>
<circle cx="520.5" cy="251.3" r="0.7" fill="#727272"/>
<circle cx="455.9" cy="251.8" r="0.6" fill="#727272"/>
<circle cx="557.6" cy="270.7" r="0.7" fill="#727272"/>
<circle cx="445.0" cy="270.5" r="0.5" fill="#727272"/>
<circle cx="528.4" cy="249.1" r="0.5" fill="#727272"/>
<circle cx="579.9" cy="257.9" r="0.4" fill="#727272"/>
<circle cx="439.4" cy="274.9" r="0.4" fill="#727272"/>
<circle cx="451.2" cy="259.1" r="0.4" fill="#727272"/>
<circle cx="576.8" cy="262.0" r="0.4" fill="#727272"/>
<circle cx="441.5" cy="272.0" r="0.6" fill="#727272"/>
<circle cx="552.2" cy="253.1" r="0.4" fill="#727272"/>
<circle cx="438.1" cy="260.5" r="0.7" fill="#727272"/>
<circle cx="463.0" cy="265.6" r="0.5" fill="#727272"/>
<circle cx="474.1" cy="273.2" r="0.7" fill="#727272"/>
<circle cx="577.7" cy="277.1" r="0.4" fill="#727272"/>
<circle cx="471.3" cy="265.7" r="0.5" fill="#727272"/>
<circle cx="574.6" cy="262.9" r="0.7" fill="#727272"/>
<circle cx="520.4" cy="275.5" r="0.7" fill="#727272"/>
<circle cx="509.8" cy="248.7" r="0.6" fill="#727272"/>
<circle cx="467.0" cy="274.3" r="0.7" fill="#727272"/>
<circle cx="531.4" cy="258.8" r="0.7" fill="#727272"/>
<circle cx="546.1" cy="253.0" r="0.6" fill="#727272"/>
<circle cx="498.9" cy="264.5" r="0.5" fill="#727272"/>
<circle cx="514.8" cy="265.5" r="0.5" fill="#727272"/>
<circle cx="578.3" cy="272.1" r="0.6" fill="#727272"/>
<circle cx="550.1" cy="276.3" r="0.6" fill="#727272"/>
<circle cx="540.1" cy="265.1" r="0.5" fill="#727272"/>
<circle cx="524.1" cy="268.6" r="0.4" fill="#727272"/>
<circle cx="463.3" cy="278.0" r="0.7" fill="#727272"/>
<circle cx="543.0" cy="274.2" r="0.6" fill="#727272"/>
<circle cx="445.3" cy="266.8" r="0.5" fill="#727272"/>
<circle cx="524.5" cy="255.6" r="0.6" fill="#727272"/>
<circle cx="574.5" cy="249.0" r="0.4" fill="#727272"/>
<circle cx="509.0" cy="261.2" r="0.4" fill="#727272"/>
<circle cx="540.6" cy="260.8" r="0.7" fill="#727272"/>
<circle cx="486.4" cy="278.4" r="0.6" fill="#727272"/>
<circle cx="539.6" cy="254.0" r="0.5" fill="#727272"/>
<circle cx="554.9" cy="263.4" r="0.7" fill="#727272"/>
<circle cx="582.1" cy="275.4" r="0.7" fill="#727272"/>
<circle cx="469.9" cy="249.0" r="0.7" fill="#727272"/>
<circle cx="453.6" cy="267.7" r="0.7" fill="#727272"/>
<circle cx="519.3" cy="250.8" r="0.6" fill="#727272"/>
<circle cx="513.8" cy="253.6" r="0.4" fill="#727272"/>
<circle cx="501.4" cy="256.8" r="0.6" fill="#727272"/>
<circle cx="585.2" cy="252.8" r="0.6" fill="#727272"/>
<circle cx="552.9" cy="258.1" r="0.6" fill="#727272"/>
<circle cx="439.1" cy="255.7" r="0.6" fill="#727272"/>
<circle cx="537.7" cy="258.4" r="0.5" fill="#727272"/>
<circle cx="536.9" cy="275.2" r="0.5" fill="#727272"/>
<circle cx="556.6" cy="250.1" r="0.7" fill="#727272"/>
<circle cx="499.2" cy="254.0" r="0.7" fill="#727272"/>
<circle cx="472.6" cy="270.7" r="0.5" fill="#727272"/>
<circle cx="450.3" cy="252.6" r="0.7" fill="#727272"/>
<circle cx="440.0" cy="253.2" r="0.7" fill="#727272"/>
<circle cx="467.2" cy="256.2" r="0.5" fill="#727272"/>
<circle cx="481.6" cy="262.6" r="0.5" fill="#727272"/>
<circle cx="515.4" cy="258.0" r="0.4" fill="#727272"/>
<circle cx="443.7" cy="263.2" r="0.5" fill="#727272"/>
<circle cx="528.5" cy="253.9" r="0.4" fill="#727272"/>
<circle cx="561.5" cy="268.7" r="0.5" fill="#727272"/>
<circle cx="522.8" cy="266.5" r="0.6" fill="#727272"/>
<circle cx="487.9" cy="256.8" r="0.6" fill="#727272"/>
<circle cx="445.8" cy="276.3" r="0.4" fill="#727272"/>
<circle cx="535.1" cy="277.1" r="0.5" fill="#727272"/>
<circle cx="547.7" cy="266.5" r="0.5" fill="#727272"/>
<circle cx="459.0" cy="265.6" r="0.6" fill="#727272"/>
<circle cx="503.7" cy="252.3" r="0.4" fill="#727272"/>
<circle cx="475.9" cy="256.5" r="0.6" fill="#727272"/>
<circle cx="528.6" cy="271.0" r="0.7" fill="#727272"/>
<circle cx="474.3" cy="269.9" r="0.5" fill="#727272"/>
<circle cx="489.7" cy="272.0" r="0.7" fill="#727272"/>
<circle cx="480.8" cy="269.9" r="0.5" fill="#727272"/>
<circle cx="466.4" cy="253.8" r="0.6" fill="#727272"/>
<circle cx="552.2" cy="258.5" r="0.4" fill="#727272"/>
<circle cx="543.7" cy="258.2" r="0.5" fill="#727272"/>
<circle cx="509.4" cy="252.5" r="0.6" fill="#727272"/>
<circle cx="533.5" cy="268.3" r="0.5" fill="#727272"/>
<circle cx="515.0" cy="257.4" r="0.4" fill="#727272"/>
<circle cx="549.6" cy="265.4" r="0.4" fill="#727272"/>
<circle cx="495.5" cy="274.3" r="0.4" fill="#727272"/>
<circle cx="457.3" cy="276.9" r="0.5" fill="#727272"/>
<circle cx="519.1" cy="264.3" r="0.5" fill="#727272"/>
<circle cx="580.9" cy="262.8" r="0.7" fill="#727272"/>
<circle cx="441.7" cy="277.5" r="0.4" fill="#727272"/>
<circle cx="496.0" cy="265.2" r="0.6" fill="#727272"/>
<circle cx="516.7" cy="273.8" r="0.5" fill="#727272"/>
<circle cx="538.1" cy="276.1" r="0.4" fill="#727272"/>
<circle cx="459.3" cy="252.2" r="0.6" fill="#727272"/>
<circle cx="573.8" cy="272.3" r="0.7" fill="#727272"/>
<circle cx="444.5" cy="255.3" r="0.4" fill="#727272"/>
<circle cx="484.2" cy="270.4" r="0.4" fill="#727272"/>
<circle cx="543.5" cy="258.9" r="0.6" fill="#727272"/>
<circle cx="493.3" cy="269.0" r="0.4" fill="#727272"/>
<circle cx="491.4" cy="264.4" r="0.7" fill="#727272"/>
<circle cx="493.3" cy="271.7" r="0.6" fill="#727272"/>
<circle cx="495.2" cy="267.1" r="0.7" fill="#727272"/>
<circle cx="459.4" cy="278.0" r="0.4" fill="#727272"/>
<circle cx="545.4" cy="261.0" r="0.4" fill="#727272"/>
<circle cx="476.2" cy="267.7" r="0.4" fill="#727272"/>
<circle cx="479.7" cy="254.8" r="0.7" fill="#727272"/>
<circle cx="483.7" cy="250.7" r="0.6" fill="#727272"/>
<circle cx="577.0" cy="253.0" r="0.5" fill="#727272"/>
<circle cx="508.7" cy="256.7" r="0.6" fill="#727272"/>
<circle cx="539.0" cy="264.1" r="0.6" fill="#727272"/>
<circle cx="529.3" cy="251.1" r="0.7" fill="#727272"/>
<circle cx="516.6" cy="257.9" r="0.7" fill="#727272"/>
<circle cx="488.8" cy="274.1" r="0.5" fill="#727272"/>
<circle cx="509.7" cy="267.0" r="0.7" fill="#727272"/>
<circle cx="559.5" cy="262.0" r="0.7" fill="#727272"/>
<circle cx="544.1" cy="278.4" r="0.4" fill="#727272"/>
<circle cx="470.6" cy="269.4" r="0.6" fill="#727272"/>
<circle cx="444.4" cy="256.7" r="0.6" fill="#727272"/>
<circle cx="507.2" cy="250.7" r="0.4" fill="#727272"/>
<circle cx="491.9" cy="277.0" r="0.7" fill="#727272"/>
<circle cx="455.6" cy="255.3" r="0.5" fill="#727272"/>
<circle cx="511.4" cy="273.8" r="0.4" fill="#727272"/>
<circle cx="537.5" cy="249.2" r="0.7" fill="#727272"/>
<circle cx="482.6" cy="252.6" r="0.7" fill="#727272"/>
<circle cx="470.9" cy="262.5" r="0.4" fill="#727272"/>
<circle cx="499.1" cy="267.9" r="0.5" fill="#727272"/>
<circle cx="506.8" cy="253.1" r="0.4" fill="#727272"/>
<circle cx="568.4" cy="252.8" r="0.5" fill="#727272"/>
<circle cx="458.9" cy="278.5" r="0.4" fill="#727272"/>
<circle cx="550.1" cy="250.6" r="0.6" fill="#727272"/>
<circle cx="439.7" cy="270.7" r="0.6" fill="#727272"/>
<circle cx="483.6" cy="257.4" r="0.4" fill="#727272"/>
<circle cx="585.4" cy="267.2" r="0.6" fill="#727272"/>
<circle cx="524.0" cy="255.3" r="0.7" fill="#727272"/>
<circle cx="490.8" cy="255.2" r="0.7" fill="#727272"/>
<circle cx="524.7" cy="262.7" r="0.5" fill="#727272"/>
<circle cx="583.0" cy="262.7" r="0.4" fill="#727272"/>
<circle cx="496.1" cy="261.3" r="0.6" fill="#727272"/>
<circle cx="549.0" cy="269.7" r="0.5" fill="#727272"/>
<circle cx="573.5" cy="277.2" r="0.7" fill="#727272"/>
<circle cx="463.2" cy="258.9" r="0.6" fill="#727272"/>
<circle cx="489.3" cy="248.6" r="0.4" fill="#727272"/>
<circle cx="482.2" cy="276.6" r="0.4" fill="#727272"/>
<circle cx="541.7" cy="272.3" r="0.4" fill="#727272"/>
<circle cx="536.8" cy="268.8" r="0.7" fill="#727272"/>
<circle cx="556.1" cy="253.3" r="0.7" fill="#727272"/>
<circle cx="548.9" cy="253.4" r="0.7" fill="#727272"/>
<circle cx="510.1" cy="262.9" r="0.7" fill="#727272"/>
<circle cx="537.7" cy="275.4" r="0.7" fill="#727272"/>
<circle cx="486.3" cy="271.9" r="0.7" fill="#727272"/>
<circle cx="538.0" cy="273.4" r="0.4" fill="#727272"/>
<circle cx="570.6" cy="276.8" r="0.4" fill="#727272"/>
<circle cx="493.2" cy="259.1" r="0.7" fill="#727272"/>
<circle cx="569.6" cy="265.7" r="0.6" fill="#727272"/>
<circle cx="574.9" cy="250.5" r="0.5" fill="#727272"/>
<circle cx="585.2" cy="270.3" r="0.4" fill="#727272"/>
<circle cx="548.7" cy="261.2" r="0.4" fill="#727272"/>
<circle cx="465.4" cy="264.9" r="0.5" fill="#727272"/>
<circle cx="544.0" cy="255.1" r="0.7" fill="#727272"/>
<circle cx="505.3" cy="277.8" r="0.7" fill="#727272"/>
<circle cx="556.4" cy="261.5" r="0.7" fill="#727272"/>
<circle cx="529.9" cy="277.9" r="0.5" fill="#727272"/>
<circle cx="471.9" cy="249.8" r="0.6" fill="#727272"/>
<circle cx="481.2" cy="268.9" r="0.6" fill="#727272"/>
<circle cx="561.3" cy="274.0" r="0.4" fill="#727272"/>
<circle cx="478.1" cy="248.7" r="0.4" fill="#727272"/>
<circle cx="514.7" cy="268.0" r="0.7" fill="#727272"/>
<circle cx="509.1" cy="260.3" r="0.7" fill="#727272"/>
<circle cx="544.8" cy="273.6" r="0.6" fill="#727272"/>
<circle cx="556.7" cy="257.3" r="0.6" fill="#727272"/>
<circle cx="459.3" cy="254.7" r="0.4" fill="#727272"/>
<circle cx="463.6" cy="251.0" r="0.6" fill="#727272"/>
<circle cx="576.7" cy="252.6" r="0.7" fill="#727272"/>
<circle cx="571.2" cy="272.2" r="0.6" fill="#727272"/>
<circle cx="454.9" cy="264.5" r="0.7" fill="#727272"/>
<circle cx="545.6" cy="268.3" r="0.4" fill="#727272"/>
<circle cx="549.4" cy="269.7" r="0.6" fill="#727272"/>
<circle cx="463.9" cy="264.9" r="0.6" fill="#727272"/>
<circle cx="543.9" cy="266.7" r="0.6" fill="#727272"/>
<circle cx="577.0" cy="254.3" r="0.7" fill="#727272"/>
<circle cx="465.6" cy="266.2" r="0.4" fill="#727272"/>
<circle cx="518.6" cy="266.0" r="0.7" fill="#727272"/>
<circle cx="437.6" cy="277.7" r="0.7" fill="#727272"/>
<circle cx="488.9" cy="255.7" r="0.7" fill="#727272"/>
<circle cx="525.3" cy="248.9" r="0.5" fill="#727272"/>
<circle cx="497.8" cy="265.8" r="0.5" fill="#727272"/>
<circle cx="508.0" cy="255.0" r="0.5" fill="#727272"/>
<circle cx="473.8" cy="249.7" r="0.4" fill="#727272"/>
<circle cx="481.6" cy="258.1" r="0.5" fill="#727272"/>
<circle cx="503.8" cy="250.5" r="0.4" fill="#727272"/>
<circle cx="531.9" cy="259.2" r="0.5" fill="#727272"/>
<circle cx="479.8" cy="261.3" r="0.7" fill="#727272"/>
<circle cx="544.4" cy="252.6" r="0.4" fill="#727272"/>
<circle cx="484.1" cy="258.7" r="0.6" fill="#727272"/>
<circle cx="574.5" cy="269.3" r="0.5" fill="#727272"/>
<circle cx="496.4" cy="270.0" r="0.4" fill="#727272"/>
<circle cx="566.2" cy="274.9" r="0.4" fill="#727272"/>
<circle cx="572.1" cy="271.2" r="0.7" fill="#727272"/>
<circle cx="523.5" cy="263.9" r="0.7" fill="#727272"/>
<circle cx="584.2" cy="276.5" r="0.6" fill="#727272"/>
<circle cx="569.4" cy="265.5" r="0.6" fill="#727272"/>
<circle cx="487.7" cy="261.6" r="0.7" fill="#727272"/>
<circle cx="570.9" cy="251.1" r="0.5" fill="#727272"/>
<circle cx="533.2" cy="255.2" r="0.4" fill="#727272"/>
<rect x="436.3" y="279" width="149.3" height="7.5" fill="#5e5e5e" stroke="none" stroke-width="1" />
<line x1="436.3" y1="283.6" x2="585.6" y2="283.6" stroke="#858585" stroke-width="1"/>
<line x1="436.3" y1="281" x2="585.6" y2="281" stroke="#4a4a4a" stroke-width="0.8"/>
<line x1="436.3" y1="278.6" x2="585.6" y2="278.6" stroke="#189498" stroke-width="1.2"/>
<line x1="436.3" y1="286.6" x2="585.6" y2="286.6" stroke="#a05050" stroke-width="0.9"/>
<path d="M453.5 278.3 V268.6 H457.8 V278.3 M454.3 271.5 H457.0 M454.5 272 L456.9 277.5" fill="none" stroke="#c0c0c0" stroke-width="0.7"/>
<path d="M508.5 278.3 V268.6 H512.8 V278.3 M509.3 271.5 H512.0 M509.5 272 L511.9 277.5" fill="none" stroke="#c0c0c0" stroke-width="0.7"/>
<path d="M560.5 278.3 V268.6 H564.8 V278.3 M561.3 271.5 H564.0 M561.5 272 L563.9 277.5" fill="none" stroke="#c0c0c0" stroke-width="0.7"/>
<line x1="506" y1="283.6" x2="515" y2="283.6" stroke="#ff2020" stroke-width="1.2"/>
<polyline points="436.3,286.6 436.3,409.5 585.6,409.5 585.6,248.6" fill="none" stroke="#7c7c7c" stroke-width="1"/>
<polyline points="510.6,263 542.6,295 559,295" fill="none" stroke="#909090" stroke-width="0.9"/>
<text x="559.5" y="297.1" font-size="5.6" fill="#e40a0a" font-weight="bold" stroke="#e40a0a" stroke-width="0.1" textLength="18.5" lengthAdjust="spacingAndGlyphs">HBMW</text>
<polyline points="510.6,282.6 540.2,301.6 559,301.6" fill="none" stroke="#909090" stroke-width="0.9"/>
<text x="559.5" y="303.70000000000005" font-size="5.6" fill="#e40a0a" font-weight="bold" stroke="#e40a0a" stroke-width="0.1" textLength="12.5" lengthAdjust="spacingAndGlyphs">HB</text>
<polyline points="509.4,283.8 535.5,308.7 559,308.7" fill="none" stroke="#909090" stroke-width="0.9"/>
<text x="559.5" y="310.8" font-size="5.6" fill="#e40a0a" font-weight="bold" stroke="#e40a0a" stroke-width="0.1" textLength="10.5" lengthAdjust="spacingAndGlyphs">HB</text>
<polyline points="502.3,286.2 532,315.4 559,315.4" fill="none" stroke="#909090" stroke-width="0.9"/>
<text x="559.5" y="317.5" font-size="5.6" fill="#e40a0a" font-weight="bold" stroke="#e40a0a" stroke-width="0.1" textLength="38.5" lengthAdjust="spacingAndGlyphs">HBMWEHKN</text>
<circle cx="511" cy="415.6" r="5.6" fill="none" stroke="#8a8a8a" stroke-width="0.9"/>
<line x1="505.4" y1="415.6" x2="585.6" y2="415.6" stroke="#858585" stroke-width="0.9"/>
<text x="511" y="414.3" font-size="2.8" fill="#e00000" text-anchor="middle" >6</text>
<text x="511" y="419.20000000000005" font-size="2.8" fill="#e00000" text-anchor="middle" >502</text>
<text x="519" y="415.20000000000005" font-size="6.6" fill="#e00808" font-weight="bold" textLength="51.799999999999955" lengthAdjust="spacingAndGlyphs">HBMWEHKNBMH</text>
<text x="574.6" y="421.40000000000003" font-size="4.8" fill="#b80000" font-weight="bold" textLength="8" lengthAdjust="spacing">1:5</text>
<line x1="597" y1="57.2" x2="597" y2="422" stroke="#8c8c8c" stroke-width="1"/>
<line x1="648.3" y1="57.2" x2="648.3" y2="422" stroke="#8c8c8c" stroke-width="1"/>
<line x1="654" y1="54" x2="654" y2="422" stroke="#555555" stroke-width="0.7" stroke-dasharray="1 1.3"/>
<line x1="598" y1="57.4" x2="647.5" y2="57.4" stroke="#9000a0" stroke-width="1.6"/>
<line x1="598" y1="129.6" x2="647.5" y2="129.6" stroke="#9000a0" stroke-width="1.6"/>
<line x1="598" y1="186.7" x2="647.5" y2="186.7" stroke="#9000a0" stroke-width="1.6"/>
<line x1="598" y1="244" x2="647.5" y2="244" stroke="#9000a0" stroke-width="1.6"/>
<line x1="598" y1="379.7" x2="647.5" y2="379.7" stroke="#9000a0" stroke-width="1.6"/>
<line x1="598" y1="406.7" x2="647.5" y2="406.7" stroke="#9000a0" stroke-width="1.6"/>
<text x="624.5" y="92" font-size="6" fill="#d8d8d8" text-anchor="middle" >HEKMBNH</text>
<rect x="598.5" y="130.6" width="8" height="1.6" fill="#d0d0d0" stroke="none" stroke-width="1" />
<line x1="598" y1="138.9" x2="647.5" y2="138.9" stroke="#4a4a4a" stroke-width="0.8"/>
<line x1="598" y1="146.1" x2="647.5" y2="146.1" stroke="#4a4a4a" stroke-width="0.8"/>
<line x1="598" y1="152.6" x2="647.5" y2="152.6" stroke="#4a4a4a" stroke-width="0.8"/>
<line x1="598" y1="159.3" x2="647.5" y2="159.3" stroke="#4a4a4a" stroke-width="0.8"/>
<line x1="598" y1="166.1" x2="647.5" y2="166.1" stroke="#4a4a4a" stroke-width="0.8"/>
<line x1="598" y1="172.5" x2="647.5" y2="172.5" stroke="#4a4a4a" stroke-width="0.8"/>
<line x1="598" y1="179.5" x2="647.5" y2="179.5" stroke="#8a8a8a" stroke-width="0.9"/>
<text x="599" y="195.5" font-size="2.6" fill="#b0b0b0" text-anchor="start" textLength="33" lengthAdjust="spacingAndGlyphs">ZHONGQINGPENGYU • LBCIC</text>
<rect x="633" y="192.5" width="13" height="3.2" fill="none" stroke="#b0b0b0" stroke-width="0.6" />
<text x="599" y="199.5" font-size="2.4" fill="#a0a0a0" text-anchor="start" textLength="47" lengthAdjust="spacingAndGlyphs">DESIGN CONSULTANT • Decoration</text>
<text x="624" y="221" font-size="2.6" fill="#a0a0a0" text-anchor="middle" >w w w . l b c i c . c o m</text>
<rect x="599" y="224.3" width="8" height="1.4" fill="#c0c0c0" stroke="none" stroke-width="1" />
<rect x="609" y="223.8" width="38" height="1.2" fill="#c8c8c8" stroke="none" stroke-width="1" />
<rect x="609" y="226.4" width="38" height="1.2" fill="#b0b0b0" stroke="none" stroke-width="1" />
<rect x="599" y="229.3" width="8" height="1.4" fill="#c0c0c0" stroke="none" stroke-width="1" />
<rect x="609" y="228.8" width="38" height="1.2" fill="#c8c8c8" stroke="none" stroke-width="1" />
<rect x="609" y="231.4" width="38" height="1.2" fill="#b0b0b0" stroke="none" stroke-width="1" />
<rect x="599" y="234.60000000000002" width="8" height="1.4" fill="#c0c0c0" stroke="none" stroke-width="1" />
<rect x="609" y="234.10000000000002" width="38" height="1.2" fill="#c8c8c8" stroke="none" stroke-width="1" />
<rect x="609" y="236.70000000000002" width="38" height="1.2" fill="#b0b0b0" stroke="none" stroke-width="1" />
<rect x="598.5" y="365" width="7" height="1.6" fill="#d0d0d0" stroke="none" stroke-width="1" />
<line x1="598" y1="372" x2="647.5" y2="372" stroke="#5a5a5a" stroke-width="0.5"/>
<line x1="606" y1="365" x2="647.5" y2="365" stroke="#4a4a4a" stroke-width="0.6"/>
<text x="599" y="375.5" font-size="2.4" fill="#a0a0a0" text-anchor="start" >1 : 5</text>
<text x="622" y="377" font-size="2.8" fill="#a8a8a8" text-anchor="middle" >2016.11.22</text>
<rect x="598.5" y="381" width="7" height="1.6" fill="#d0d0d0" stroke="none" stroke-width="1" />
<text x="600.5" y="396" font-size="6.4" fill="#f00808" text-anchor="start" font-weight="bold" textLength="45" lengthAdjust="spacingAndGlyphs">HBMEWNHKB</text>
<text x="617" y="401.8" font-size="5.6" fill="#e00000" text-anchor="start" font-weight="bold" textLength="11" lengthAdjust="spacingAndGlyphs">(H)</text>
<text x="599" y="409.5" font-size="2.4" fill="#a0a0a0" text-anchor="start" >1 : 5</text>
<text x="611" y="422" font-size="5" fill="#d00000" text-anchor="start" font-weight="bold" textLength="22" lengthAdjust="spacingAndGlyphs">SH213-502</text>
<defs><linearGradient id="fl" x1="0" x2="1" y1="0" y2="0"><stop offset="0" stop-color="#000"/><stop offset="0.3" stop-color="#6a6a6a"/><stop offset="0.7" stop-color="#787878"/><stop offset="1" stop-color="#000"/></linearGradient></defs>
<rect x="674" y="408.8" width="88" height="1.2" fill="url(#fl)"/>
<rect x="772" y="408.9" width="9" height="1" fill="#3a3a3a"/>
<text x="683" y="421.5" font-size="3.5" fill="#500000" text-anchor="middle" >SH213-</text>
<path d="M7.1 379.3 L7.1 415.3 L28.4 415.3 Z" fill="none" stroke="#14207a" stroke-width="1.1"/>
<path d="M7.1 411 H11 V415.3 M9 391 L11 392.5 L13 391 M11 392.5 V395 M19 409 L23 413 M23 409 L19 413" fill="none" stroke="#14207a" stroke-width="0.8"/>
<rect x="0" y="0" width="800" height="30" fill="#222831"/>
<rect x="0" y="18.2" width="800" height="0.7" fill="#2c333e"/>
<rect x="0" y="30" width="800" height="23.5" fill="#3b4351"/>
<rect x="0" y="30.5" width="270" height="11" fill="#343b48"/>
<defs><linearGradient id="lg" x1="0" y1="0" x2="0" y2="1"><stop offset="0" stop-color="#d0d0d0"/><stop offset="1" stop-color="#8e8e8e"/></linearGradient></defs>
<rect x="0" y="0" width="17.6" height="17.4" fill="#3c3f44"/>
<rect x="1" y="0.9" width="16.2" height="16" fill="url(#lg)"/>
<path d="M1.9 12 L5.9 1.2 H9.3 L12.4 12 H9.5 L8.9 9.7 H5.5 L4.7 12 Z M6.1 7.9 H8.4 L7.3 4.2 Z" fill="#d8161c" fill-rule="evenodd"/>
<path d="M13.4 7.2 H15.6 L14.5 8.8 Z" fill="#3a3a3a"/>
<path d="M21 2 H26 L27.5 3.5 V7.2 H21 Z" fill="#d8d8d8"/>
<path d="M31 2.3 H34 L35 3.2 H37 V7.3 H31 Z" fill="#c8c8c8"/><path d="M32 4.5 H38 L37 7.3 H31 Z" fill="#e8e8e8"/>
<rect x="41.5" y="1.5" width="6" height="6.5" rx="0.6" fill="#b8b8b8"/><rect x="42.8" y="2.2" width="3.4" height="2" fill="#707070"/><rect x="42.8" y="5.2" width="3.4" height="2.2" fill="#e0e0e0"/>
<rect x="51.5" y="1.5" width="5" height="6.2" fill="#d0d0d0"/><path d="M55 7.5 L58 4 L58.6 4.6 L55.7 8 Z" fill="#e09020"/><rect x="52.3" y="3" width="3" height="0.6" fill="#777"/><rect x="52.3" y="4.5" width="3" height="0.6" fill="#777"/>
<rect x="61.3" y="1.2" width="4.5" height="6.5" fill="#a8a8a8"/><path d="M64.5 6.3 H68 V8 H64.5 Z" fill="#e0b040"/>
<rect x="72.3" y="1.2" width="4.8" height="6.8" rx="0.6" fill="#b0b0b0"/><rect x="72.8" y="2.8" width="3.8" height="2" fill="#3a90d8"/>
<rect x="81.5" y="2.8" width="6.5" height="3.5" rx="1" fill="#e0e0e0"/><rect x="82.8" y="1.2" width="4" height="1.8" fill="#c8c8c8"/><rect x="82.8" y="6" width="4" height="2" fill="#60b0f0"/>
<path d="M91.5 4.5 L94 2.6 V3.8 H97 Q98 3.8 98 5.5 Q97.5 4.8 96.5 4.9 H94 V6.3 Z" fill="#d8d8d8"/>
<path d="M100.6 4 H102.8 L101.7 5.3 Z" fill="#9aa0a8"/>
<path d="M112 4.5 L109.5 2.6 V3.8 H107 Q106 3.8 106 5.5 Q106.5 4.8 107.5 4.9 H109.5 V6.3 Z" fill="#707680"/>
<path d="M115.6 4 H117.8 L116.7 5.3 Z" fill="#8a9098"/>
<path d="M121.6 2.9 H124.4" stroke="#a0a6ae" stroke-width="0.7"/><path d="M121.6 4.1 H124.4 L123 5.9 Z" fill="#a0a6ae"/>
<text x="285" y="6" font-size="5.4" fill="#d0d4da" text-anchor="start" font-weight="normal" textLength="60" lengthAdjust="spacingAndGlyphs" >Autodesk AutoCAD 2020</text>
<text x="351.6" y="6" font-size="5.4" fill="#d0d4da" text-anchor="start" font-weight="normal" textLength="50.7" lengthAdjust="spacingAndGlyphs" >SH213-501~502.dwg</text>
<path d="M563 3.2 L565 4.5 L563 5.8 Z" fill="#c0c0c0"/>
<rect x="567.2" y="0.5" width="74.5" height="8.3" fill="#454e5e"/>
<text x="569.5" y="6" font-size="4.2" fill="#a8b0bc" text-anchor="start" font-weight="normal" textLength="37" lengthAdjust="spacingAndGlyphs" font-style="italic">EAKBZHRH</text>
<path d="M644.3 3 H645.8 V7 H644.3 Z M648.3 3 H649.8 V7 H648.3 Z M645.5 4.5 H648.5 V5.5 H645.5 Z" fill="#e0e0e0"/>
<circle cx="658" cy="3.5" r="1.5" fill="#e0e0e0"/><path d="M655.2 7.3 Q655.5 5.2 658 5.2 Q660.5 5.2 660.8 7.3 Z" fill="#e0e0e0"/>
<text x="663" y="7.2" font-size="6" fill="#eeeeee" text-anchor="start" font-weight="bold" textLength="10.5" lengthAdjust="spacingAndGlyphs" >HB</text>
<path d="M698.5 4.3 H700 L699.25 5.1 Z" fill="#999"/>
<path d="M705.3 2.5 H706.5 L707.2 5.5 H710.5 L711 3.5 H707" fill="none" stroke="#8da0c8" stroke-width="0.8"/><circle cx="707.5" cy="6.7" r="0.6" fill="#8da0c8"/><circle cx="710" cy="6.7" r="0.6" fill="#8da0c8"/>
<path d="M718 1.8 L721 7 H715 Z" fill="none" stroke="#8da0d8" stroke-width="0.9"/><circle cx="718" cy="2" r="0.8" fill="#aab8e8"/><circle cx="715.3" cy="6.8" r="0.8" fill="#aab8e8"/><circle cx="720.7" cy="6.8" r="0.8" fill="#aab8e8"/>
<path d="M724.5 4.3 H726 L725.25 5.1 Z" fill="#999"/>
<rect x="730.3" y="1" width="0.5" height="7" fill="#3a414c"/>
<circle cx="737.5" cy="4.5" r="3.3" fill="#dfe6f0"/><path d="M736.4 3.6 Q736.5 2.5 737.6 2.5 Q738.8 2.6 738.6 3.6 Q738.4 4.3 737.6 4.7 V5.4" fill="none" stroke="#4a78c0" stroke-width="0.7"/><circle cx="737.6" cy="6.3" r="0.4" fill="#4a78c0"/>
<path d="M744.5 4.3 H746 L745.25 5.1 Z" fill="#999"/>
<rect x="776" y="6.7" width="3.3" height="0.7" fill="#d8d8d8"/>
<rect x="785.3" y="4" width="4.4" height="3.2" fill="none" stroke="#d0d0d0" stroke-width="0.7"/><path d="M786.5 4 V2.8 H790.8 V6 H789.7" fill="none" stroke="#d0d0d0" stroke-width="0.7"/>
<path d="M796.5 2.5 L800.5 7 M800.5 2.5 L796.5 7" stroke="#e0e0e0" stroke-width="0.8"/>
<text x="22.4" y="16.4" font-size="5.4" fill="#b4bac4" text-anchor="start" font-weight="normal" textLength="16.0" lengthAdjust="spacingAndGlyphs" >XH(F)</text>
<text x="49" y="16.4" font-size="5.4" fill="#b4bac4" text-anchor="start" font-weight="normal" textLength="16" lengthAdjust="spacingAndGlyphs" >HM(E)</text>
<text x="75.6" y="16.4" font-size="5.4" fill="#b4bac4" text-anchor="start" font-weight="normal" textLength="16.0" lengthAdjust="spacingAndGlyphs" >MB(V)</text>
<text x="102.2" y="16.4" font-size="5.4" fill="#b4bac4" text-anchor="start" font-weight="normal" textLength="14.799999999999997" lengthAdjust="spacingAndGlyphs" >HA(I)</text>
<text x="127.8" y="16.4" font-size="5.4" fill="#b4bac4" text-anchor="start" font-weight="normal" textLength="17.000000000000014" lengthAdjust="spacingAndGlyphs" >KE(O)</text>
<text x="155.4" y="16.4" font-size="5.4" fill="#b4bac4" text-anchor="start" font-weight="normal" textLength="14.900000000000006" lengthAdjust="spacingAndGlyphs" >TH(T)</text>
<text x="181.7" y="16.4" font-size="5.4" fill="#b4bac4" text-anchor="start" font-weight="normal" textLength="17.0" lengthAdjust="spacingAndGlyphs" >HB(D)</text>
<text x="208.3" y="16.4" font-size="5.4" fill="#b4bac4" text-anchor="start" font-weight="normal" textLength="17.0" lengthAdjust="spacingAndGlyphs" >KH(N)</text>
<text x="236" y="16.4" font-size="5.4" fill="#b4bac4" text-anchor="start" font-weight="normal" textLength="17" lengthAdjust="spacingAndGlyphs" >HK(M)</text>
<text x="264.7" y="16.4" font-size="5.4" fill="#b4bac4" text-anchor="start" font-weight="normal" textLength="15.900000000000034" lengthAdjust="spacingAndGlyphs" >EM(P)</text>
<text x="291.3" y="16.4" font-size="5.4" fill="#b4bac4" text-anchor="start" font-weight="normal" textLength="16.599999999999966" lengthAdjust="spacingAndGlyphs" >HO(W)</text>
<text x="319" y="16.4" font-size="5.4" fill="#b4bac4" text-anchor="start" font-weight="normal" textLength="17" lengthAdjust="spacingAndGlyphs" >BH(H)</text>
<rect x="783.5" y="15.6" width="3" height="0.7" fill="#d0d0d0"/>
<rect x="790.3" y="13.2" width="3.6" height="3" fill="none" stroke="#d0d0d0" stroke-width="0.6"/><path d="M791.3 13.2 V12.3 H795 V15 H793.9" fill="none" stroke="#d0d0d0" stroke-width="0.6"/>
<path d="M798 12.5 L801 16.5 M801 12.5 L798 16.5" stroke="#d0d0d0" stroke-width="0.7"/>
<path d="M8.2 29.6 Q10.5 29.3 10.8 26 L11.2 22.5 Q11.5 20.3 13.5 20.3 H58 Q60.5 20.3 61 23 L61.4 27 Q61.8 29.6 64 29.6 Z" fill="#2b323e"/>
<text x="13.6" y="26.7" font-size="5.4" fill="#b8c0cc" text-anchor="start" font-weight="normal" textLength="9.5" lengthAdjust="spacingAndGlyphs" >HM</text>
<path d="M59 30 Q61.5 29.8 61.8 26.5 L62.2 22.5 Q62.5 20.2 64.5 20.2 H114.5 Q116.8 20.2 117.2 22.5 L117.7 26.5 Q118 29.8 120.3 30 Z" fill="#2f3744"/>
<text x="65" y="26.8" font-size="5.3" fill="#d8dde4" text-anchor="start" font-weight="normal" textLength="39.5" lengthAdjust="spacingAndGlyphs" >SH213-501~502*</text>
<path d="M109.8 23.3 L112.8 26.3 M112.8 23.3 L109.8 26.3" stroke="#c8c8c8" stroke-width="0.6"/>
<path d="M121.5 29.6 Q123 29.5 123.2 27 L123.5 23.5 Q123.7 22 125 22 H129 Q130.2 22 130.5 23.5 L130.8 27 Q131 29.5 132.5 29.6 Z" fill="#2b323e"/>
<path d="M125.5 25.7 H128.5 M127 24.2 V27.2" stroke="#9aa2ae" stroke-width="0.6"/>
<rect x="1.3" y="32.5" width="1" height="0.9" fill="#8a929e"/>
<rect x="1.3" y="34.5" width="1" height="0.9" fill="#8a929e"/>
<rect x="1.3" y="36.5" width="1" height="0.9" fill="#8a929e"/>
<rect x="1.3" y="38.5" width="1" height="0.9" fill="#8a929e"/>
<rect x="1.3" y="43.5" width="1" height="0.9" fill="#8a929e"/>
<rect x="1.3" y="45.5" width="1" height="0.9" fill="#8a929e"/>
<rect x="1.3" y="47.5" width="1" height="0.9" fill="#8a929e"/>
<rect x="1.3" y="49.5" width="1" height="0.9" fill="#8a929e"/>
<path d="M5.2 34.8 L8 32.8 L11.5 34 L8.7 36 Z" fill="#c8c8c8"/><path d="M5.2 34.8 V38 L8.7 39.3 V36 Z" fill="#909090"/><rect x="8.8" y="35.2" width="3.3" height="4" fill="#e8e8e8"/><rect x="9.3" y="36.5" width="2.3" height="1" fill="#3a90e0"/>
<rect x="13" y="31" width="125.5" height="9.6" fill="#e4e4e4" stroke="#9aa0a8" stroke-width="0.5"/>
<circle cx="18" cy="34.6" r="1.8" fill="#f5a800"/><rect x="17.3" y="36.3" width="1.4" height="1.6" fill="#8a8a8a"/>
<circle cx="25.5" cy="35.7" r="1.9" fill="#f5a800"/><path d="M25.5 32.3 V39.1 M22.1 35.7 H28.9 M23.1 33.3 L27.9 38.1 M27.9 33.3 L23.1 38.1" stroke="#f5b820" stroke-width="0.5"/>
<path d="M31 32.5 H36 M31 32.5 V39 M36 32.5 V35.5" stroke="#bbb" stroke-width="0.6"/><circle cx="35.6" cy="37.6" r="1.4" fill="#f5a800"/>
<rect x="39.3" y="35.3" width="4.8" height="3.9" fill="#f5a800"/><path d="M40.8 35.3 V33.6 Q40.8 32.3 42.3 32.3 Q43.8 32.3 43.8 33.5" fill="none" stroke="#f5a800" stroke-width="0.7"/>
<rect x="47.2" y="32.6" width="5.2" height="6" fill="#bdbdbd" stroke="#5c5c5c" stroke-width="0.6"/>
<text x="54.9" y="38.4" font-size="6" fill="#3c4250" text-anchor="start" font-weight="normal" textLength="17.5" lengthAdjust="spacingAndGlyphs" >T-DIM</text>
<path d="M134.8 35 L135.9 36.1 L137 35" fill="none" stroke="#555" stroke-width="0.5"/>
<path d="M140 34.5 L143.5 32.8 L147 34.5 L143.5 36.2 Z" fill="#7fb6e8"/><path d="M140 34.5 V37.3 L143.5 39 V36.2 Z" fill="#b8b8b8"/><path d="M147 34.5 V37.3 L143.5 39 V36.2 Z" fill="#a8a8a8"/>
<path d="M150 34.5 L153.5 32.8 L157 34.5 L153.5 36.2 Z" fill="#d0d0d0"/><path d="M150 34.5 V37.3 L153.5 39 V36.2 Z" fill="#9a9a9a"/><path d="M157 34.5 V37.3 L153.5 39 V36.2 Z" fill="#a8a8a8"/>
<path d="M159 34.5 L162.5 32.8 L166 34.5 L162.5 36.2 Z" fill="#d8d8d8"/><path d="M159 34.5 V37.3 L162.5 39 V36.2 Z" fill="#888"/><path d="M166 34.5 V37.3 L162.5 39 V36.2 Z" fill="#a8a8a8"/>
<path d="M173 34.5 L176.5 32.8 L180 34.5 L176.5 36.2 Z" fill="#d0d0d0"/><path d="M173 34.5 V37.3 L176.5 39 V36.2 Z" fill="#888"/><path d="M180 34.5 V37.3 L176.5 39 V36.2 Z" fill="#a8a8a8"/>
<path d="M183 34.5 L186.5 32.8 L190 34.5 L186.5 36.2 Z" fill="#6aaee0"/><path d="M183 34.5 V37.3 L186.5 39 V36.2 Z" fill="#a0a0a0"/><path d="M190 34.5 V37.3 L186.5 39 V36.2 Z" fill="#a8a8a8"/>
<path d="M192 34.5 L195.5 32.8 L199 34.5 L195.5 36.2 Z" fill="#c0c8d8"/><path d="M192 34.5 V37.3 L195.5 39 V36.2 Z" fill="#888"/><path d="M199 34.5 V37.3 L195.5 39 V36.2 Z" fill="#a8a8a8"/>
<path d="M201 34.5 L204.5 32.8 L208 34.5 L204.5 36.2 Z" fill="#a8c0e0"/><path d="M201 34.5 V37.3 L204.5 39 V36.2 Z" fill="#888"/><path d="M208 34.5 V37.3 L204.5 39 V36.2 Z" fill="#a8a8a8"/>
<path d="M212 34.5 L215.5 32.8 L219 34.5 L215.5 36.2 Z" fill="#6ab0e8"/><path d="M212 34.5 V37.3 L215.5 39 V36.2 Z" fill="#8098c0"/><path d="M219 34.5 V37.3 L215.5 39 V36.2 Z" fill="#a8a8a8"/>
<path d="M221 34.5 L224.5 32.8 L228 34.5 L224.5 36.2 Z" fill="#8ab8e8"/><path d="M221 34.5 V37.3 L224.5 39 V36.2 Z" fill="#909090"/><path d="M228 34.5 V37.3 L224.5 39 V36.2 Z" fill="#a8a8a8"/>
<path d="M141.5 33.2 L143.5 31.8 L145.5 33.2" fill="#e8e8e8"/>
<rect x="162.5" y="35.8" width="3.8" height="3.2" fill="#e8e8e8"/>
<circle cx="178.3" cy="38" r="1.6" fill="#f0c040"/>
<path d="M184.5 32.6 L186 34 L188.5 31.5" fill="none" stroke="#40c040" stroke-width="0.8"/>
<rect x="169.8" y="32" width="0.6" height="8" fill="#5a6270"/>
<rect x="230.6" y="32" width="0.6" height="8" fill="#5a6270"/>
<path d="M233 35 L237 33 L240 34 L236 36 Z" fill="#d8d8d8"/><circle cx="237.8" cy="37.3" r="1.6" fill="#40c8d0"/>
<path d="M243 35 L247 33 L250 34 L246 36 Z" fill="#d8d8d8"/><circle cx="247.8" cy="37.3" r="1.6" fill="#40c8e0"/>
<path d="M252 35 L256 33 L259 34 L255 36 Z" fill="#d8d8d8"/><circle cx="256.8" cy="37.3" r="1.6" fill="#40c8d0"/>
<path d="M262 35 L266 33 L269 34 L265 36 Z" fill="#d8d8d8"/><circle cx="266.8" cy="37.3" r="1.6" fill="#f0c040"/>
<rect x="3.8" y="42.4" width="62.2" height="9.2" fill="#e4e4e4" stroke="#9aa0a8" stroke-width="0.5"/>
<rect x="5.3" y="43.8" width="5.4" height="6" fill="#c8c8c8" stroke="#707070" stroke-width="0.6"/>
<text x="12.2" y="49.6" font-size="5.8" fill="#5a5a5a" text-anchor="start" font-weight="normal" textLength="19" lengthAdjust="spacingAndGlyphs" >ByLayer</text>
<path d="M62.2 46.3 L63.3 47.4 L64.4 46.3" fill="none" stroke="#555" stroke-width="0.5"/>
<rect x="69" y="42.4" width="66.8" height="9.2" fill="#e4e4e4" stroke="#9aa0a8" stroke-width="0.5"/>
<rect x="71" y="46.7" width="25" height="0.9" fill="#6a6a6a"/>
<text x="98.5" y="49.6" font-size="5.8" fill="#5a5a5a" text-anchor="start" font-weight="normal" textLength="18.5" lengthAdjust="spacingAndGlyphs" >ByLayer</text>
<path d="M131.5 46.3 L132.6 47.4 L133.7 46.3" fill="none" stroke="#555" stroke-width="0.5"/>
<rect x="138.7" y="42.4" width="52.1" height="9.2" fill="#e4e4e4" stroke="#9aa0a8" stroke-width="0.5"/>
<rect x="140.8" y="46.7" width="16" height="0.9" fill="#6a6a6a"/>
<text x="158" y="49.6" font-size="5.8" fill="#5a5a5a" text-anchor="start" font-weight="normal" textLength="18.5" lengthAdjust="spacingAndGlyphs" >ByLayer</text>
<path d="M186.5 46.3 L187.6 47.4 L188.7 46.3" fill="none" stroke="#555" stroke-width="0.5"/>
<rect x="193.5" y="42.4" width="49.5" height="9.2" fill="#cfcfcf" stroke="#9aa0a8" stroke-width="0.5"/>
<text x="195.5" y="49.6" font-size="5.8" fill="#9a9a9a" text-anchor="start" font-weight="normal" textLength="20" lengthAdjust="spacingAndGlyphs" >ByColor</text>
<path d="M239 46.3 L240.1 47.4 L241.2 46.3" fill="none" stroke="#aaa" stroke-width="0.5"/>
<rect x="0" y="53.3" width="800" height="0.6" fill="#1a1e24"/>
<rect x="785.2" y="55.7" width="13" height="55" rx="1.2" fill="#3d3d3d" stroke="#525252" stroke-width="0.6"/>
<circle cx="790.5" cy="68" r="4" fill="none" stroke="#5c5c5c" stroke-width="0.8"/><circle cx="790.5" cy="68" r="1.5" fill="none" stroke="#5c5c5c" stroke-width="0.6"/><rect x="792" y="70.5" width="4" height="2" fill="#5a7aa8"/>
<path d="M788 86 Q788 81 790 80 Q791 78 792 79 Q794 78 794 81 V86 Z" fill="none" stroke="#5c5c5c" stroke-width="0.8"/>
<path d="M787 89 L793 96 M793 89 L787 96" stroke="#5c5c5c" stroke-width="0.6"/><circle cx="793.5" cy="95" r="2" fill="none" stroke="#5c5c5c" stroke-width="0.7"/>
<path d="M790 101 L791.5 102.5 L793 101" fill="none" stroke="#5c5c5c" stroke-width="0.5"/>
</svg>
</body></html>
